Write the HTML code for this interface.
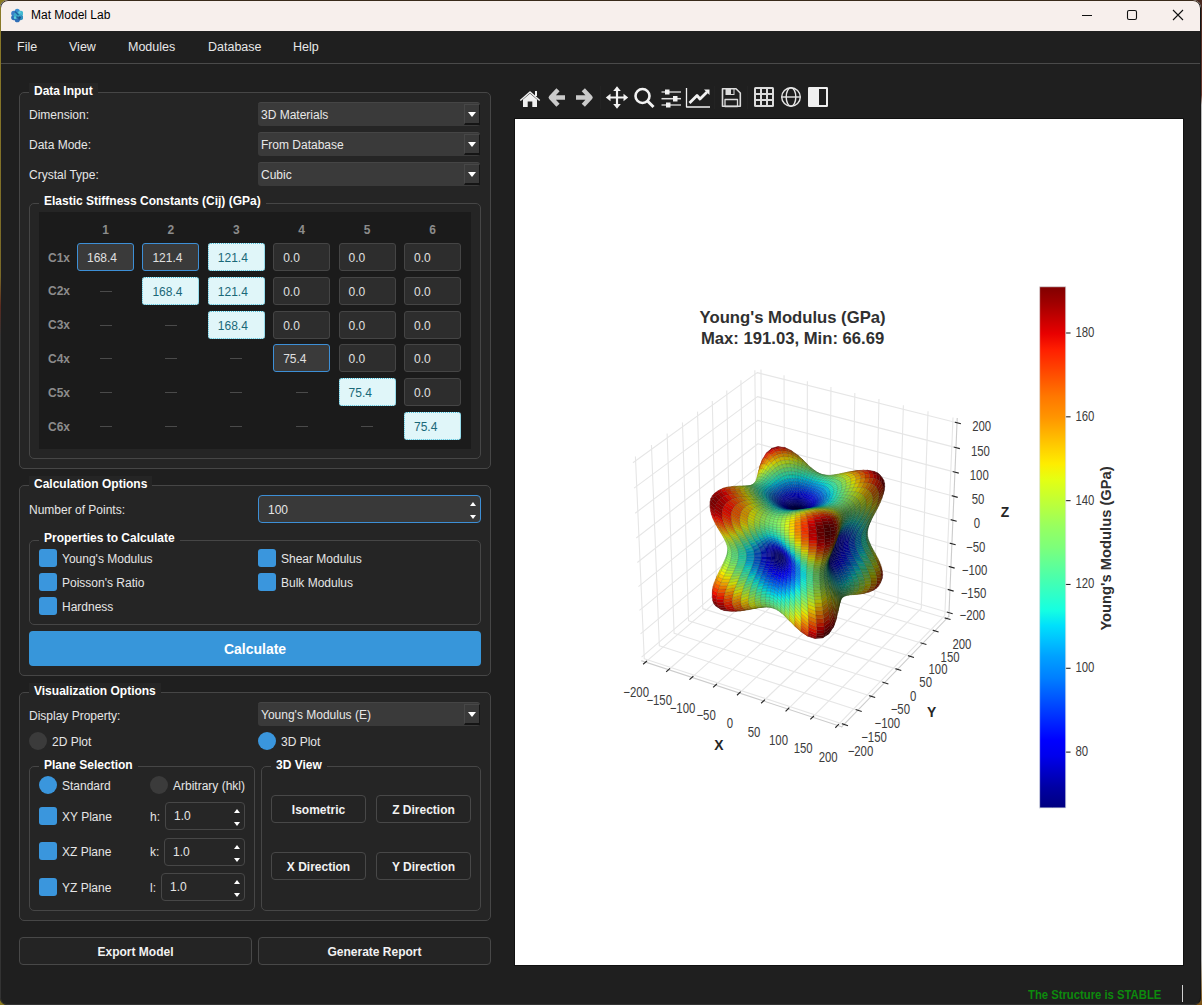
<!DOCTYPE html>
<html><head><meta charset="utf-8"><style>
*{box-sizing:border-box;margin:0;padding:0}
html,body{width:1202px;height:1005px;overflow:hidden}
body{position:relative;background:linear-gradient(90deg,#8a7a20 0,#8a7a20 10px,transparent 10px),linear-gradient(#4a2a20 0,#6a3a30 95px,#b8b8b8 105px,#b0b0b0 960px,#7a5010 1005px);font-family:"Liberation Sans",sans-serif;font-size:12px;color:#e6e6e6}
.a{position:absolute}
#win{position:absolute;left:0;top:0;width:1201px;height:1005px;background:#1f1f1f;border-radius:8px 8px 7px 7px;overflow:hidden}
#frame{position:absolute;left:0;top:0;width:1201px;height:1005px;border:1px solid #333;border-right-color:#151515;border-top-color:#3a2a1a;border-radius:8px 8px 7px 7px}
#title{position:absolute;left:0;top:0;width:1202px;height:31px;background:#f7efec}
#menu{position:absolute;left:0;top:31px;width:1202px;height:33px;background:#1f1f1f;border-bottom:1px solid #4a4a4a}
.mi{position:absolute;top:40px;font-size:12.5px;color:#e8e8e8;line-height:14px}
.grp{position:absolute;border:1px solid #464646;border-radius:5px;background:#252525}
.gt{position:absolute;font-weight:bold;color:#fff;background:#252525;padding:0 5px;line-height:16px;height:16px;white-space:nowrap}
.lbl{position:absolute;line-height:14px;color:#e6e6e6;white-space:nowrap}
.combo{position:absolute;height:24px;width:222px;background:#3a3a3a;border-radius:3px;border-top:1px solid #454545}
.combo span{position:absolute;left:3px;top:5px;line-height:14px;color:#e8e8e8}
.combo i{position:absolute;left:206px;top:1px;width:16px;height:21px;background:#393939;border-left:1px solid #474747;border-top:1px solid #474747;border-right:1px solid #151515;border-bottom:2px solid #151515}
.combo i:after{content:"";position:absolute;left:2.5px;top:7px;border-left:4.5px solid transparent;border-right:4.5px solid transparent;border-top:5px solid #fff}
.cell{position:absolute;width:57px;height:28px;border-radius:3px;background:#2d2d2d;border:1px solid #454545;padding-left:9px;line-height:28px;color:#e0e0e0}
.cell.f{background:#3a3a3a;border-color:#3d8fd6}
.cell.l{background:#e0f6f9;border:1px dotted #4cc0dc;color:#1a6878}
.ch{position:absolute;font-weight:bold;color:#8c8c8c;line-height:14px}
.dash{position:absolute;width:12px;height:1px;background:#4a4a4a}
.cb{position:absolute;width:18px;height:18px;border-radius:3px;background:#3a96dd}
.rd{position:absolute;width:18px;height:18px;border-radius:50%;background:#3a96dd}
.rd.off{background:#3b3b3b}
.spin{position:absolute;background:#262626;border:1px solid #474747;border-radius:4px}
.spin.blue{background:#393939;border-color:#3d8fd6}
.spin.blue span{top:7px}
.spin span{position:absolute;left:8px;top:6px;line-height:14px;color:#e6e6e6}
.spin i{position:absolute;right:4px;width:0;height:0;border-left:3.5px solid transparent;border-right:3.5px solid transparent}
.spin i.u{top:5.5px;border-bottom:4.5px solid #fff}
.spin i.d{bottom:3.5px;border-top:4.5px solid #fff}
.btn{position:absolute;padding-top:1px;border:1px solid #484848;border-radius:4px;background:#242424;font-weight:bold;color:#f2f2f2;text-align:center}
.calc{background:#3796da;border-radius:4px;color:#fff;font-weight:bold;font-size:14px;text-align:center;line-height:37px}

</style></head><body><div id="win">
<div id="title"><div class="a" style="left:10.75px;top:7.5px;width:12.5px;height:15px"><svg width="12.5" height="15" viewBox="0 0 12.5 15" style="position:absolute;left:0;top:0"><circle cx="6.25" cy="3.30" r="2.6" fill="#3a8fd0"/><circle cx="9.71" cy="5.40" r="2.6" fill="#45b8d0"/><circle cx="9.71" cy="9.60" r="2.6" fill="#2f8fc0"/><circle cx="6.25" cy="11.70" r="2.6" fill="#2f6fb8"/><circle cx="2.79" cy="9.60" r="2.6" fill="#2a70b8"/><circle cx="2.79" cy="5.40" r="2.6" fill="#3a7fc8"/><circle cx="6.25" cy="7.50" r="3.6" fill="#3aa8c8"/><path d="M4 3.5L7.5 7M5.5 8.5L9 12" stroke="#1f5fa0" stroke-width="1.5" stroke-linecap="round" fill="none"/><circle cx="8.5" cy="4.5" r="1.2" fill="#60d0e0"/><circle cx="8.6" cy="9.6" r="1.3" fill="#1d4f8a"/><circle cx="4" cy="9.8" r="1.2" fill="#5fd0d8"/></svg></div><div class="a" style="left:31px;top:8px;font-size:12px;color:#000;line-height:14px">Mat Model Lab</div><svg class="a" style="left:1070px;top:0" width="132" height="31" viewBox="1070 0 132 31">
<path d="M1082 15.5H1092" stroke="#111" stroke-width="1.1"/>
<rect x="1127.5" y="10.5" width="9" height="9" rx="1.6" fill="none" stroke="#111" stroke-width="1.1"/>
<path d="M1173 10L1183 20M1183 10L1173 20" stroke="#111" stroke-width="1.1"/>
</svg>
</div>
<div id="menu"></div>
<div class="mi" style="left:17px">File</div>
<div class="mi" style="left:69px">View</div>
<div class="mi" style="left:128px">Modules</div>
<div class="mi" style="left:208px">Database</div>
<div class="mi" style="left:293px">Help</div>
<div class="grp" style="left:19px;top:92px;width:472px;height:377px"></div>
<div class="gt top" style="left:29px;top:83px">Data Input</div>
<div class="lbl" style="left:29px;top:108px">Dimension:</div>
<div class="combo" style="left:258px;top:102px"><span>3D Materials</span><i></i></div>
<div class="lbl" style="left:29px;top:138px">Data Mode:</div>
<div class="combo" style="left:258px;top:132px"><span>From Database</span><i></i></div>
<div class="lbl" style="left:29px;top:168px">Crystal Type:</div>
<div class="combo" style="left:258px;top:162px"><span>Cubic</span><i></i></div>
<div class="grp" style="left:29px;top:203px;width:452px;height:256px"></div>
<div class="gt" style="left:39px;top:193px">Elastic Stiffness Constants (Cij) (GPa)</div>
<div class="a" style="left:39px;top:212px;width:432px;height:237px;background:#1b1b1b"></div>
<div class="ch" style="left:77.0px;top:223px;width:57px;text-align:center">1</div>
<div class="ch" style="left:142.4px;top:223px;width:57px;text-align:center">2</div>
<div class="ch" style="left:207.8px;top:223px;width:57px;text-align:center">3</div>
<div class="ch" style="left:273.2px;top:223px;width:57px;text-align:center">4</div>
<div class="ch" style="left:338.6px;top:223px;width:57px;text-align:center">5</div>
<div class="ch" style="left:404.0px;top:223px;width:57px;text-align:center">6</div>
<div class="ch" style="left:48px;top:250.5px">C1x</div>
<div class="cell f" style="left:77.0px;top:243.0px">168.4</div>
<div class="cell f" style="left:142.4px;top:243.0px">121.4</div>
<div class="cell l" style="left:207.8px;top:243.0px">121.4</div>
<div class="cell" style="left:273.2px;top:243.0px">0.0</div>
<div class="cell" style="left:338.6px;top:243.0px">0.0</div>
<div class="cell" style="left:404.0px;top:243.0px">0.0</div>
<div class="ch" style="left:48px;top:284.3px">C2x</div>
<div class="dash" style="left:99.5px;top:290.8px"></div>
<div class="cell l" style="left:142.4px;top:276.8px">168.4</div>
<div class="cell l" style="left:207.8px;top:276.8px">121.4</div>
<div class="cell" style="left:273.2px;top:276.8px">0.0</div>
<div class="cell" style="left:338.6px;top:276.8px">0.0</div>
<div class="cell" style="left:404.0px;top:276.8px">0.0</div>
<div class="ch" style="left:48px;top:318.1px">C3x</div>
<div class="dash" style="left:99.5px;top:324.6px"></div>
<div class="dash" style="left:164.9px;top:324.6px"></div>
<div class="cell l" style="left:207.8px;top:310.6px">168.4</div>
<div class="cell" style="left:273.2px;top:310.6px">0.0</div>
<div class="cell" style="left:338.6px;top:310.6px">0.0</div>
<div class="cell" style="left:404.0px;top:310.6px">0.0</div>
<div class="ch" style="left:48px;top:351.9px">C4x</div>
<div class="dash" style="left:99.5px;top:358.4px"></div>
<div class="dash" style="left:164.9px;top:358.4px"></div>
<div class="dash" style="left:230.3px;top:358.4px"></div>
<div class="cell f" style="left:273.2px;top:344.4px">75.4</div>
<div class="cell" style="left:338.6px;top:344.4px">0.0</div>
<div class="cell" style="left:404.0px;top:344.4px">0.0</div>
<div class="ch" style="left:48px;top:385.7px">C5x</div>
<div class="dash" style="left:99.5px;top:392.2px"></div>
<div class="dash" style="left:164.9px;top:392.2px"></div>
<div class="dash" style="left:230.3px;top:392.2px"></div>
<div class="dash" style="left:295.7px;top:392.2px"></div>
<div class="cell l" style="left:338.6px;top:378.2px">75.4</div>
<div class="cell" style="left:404.0px;top:378.2px">0.0</div>
<div class="ch" style="left:48px;top:419.5px">C6x</div>
<div class="dash" style="left:99.5px;top:426.0px"></div>
<div class="dash" style="left:164.9px;top:426.0px"></div>
<div class="dash" style="left:230.3px;top:426.0px"></div>
<div class="dash" style="left:295.7px;top:426.0px"></div>
<div class="dash" style="left:361.1px;top:426.0px"></div>
<div class="cell l" style="left:404.0px;top:412.0px">75.4</div>
<div class="grp" style="left:19px;top:485px;width:472px;height:191px"></div>
<div class="gt top" style="left:29px;top:476px">Calculation Options</div>
<div class="lbl" style="left:29px;top:503px">Number of Points:</div>
<div class="spin blue" style="left:258px;top:495px;width:223px;height:28px"><span style="left:9px">100</span><i class="u"></i><i class="d"></i></div>
<div class="grp" style="left:29px;top:540px;width:452px;height:85px"></div>
<div class="gt" style="left:39px;top:530px">Properties to Calculate</div>
<div class="cb" style="left:39px;top:549px"></div>
<div class="lbl" style="left:62px;top:552px">Young's Modulus</div>
<div class="cb" style="left:39px;top:573px"></div>
<div class="lbl" style="left:62px;top:576px">Poisson's Ratio</div>
<div class="cb" style="left:39px;top:597px"></div>
<div class="lbl" style="left:62px;top:600px">Hardness</div>
<div class="cb" style="left:258px;top:549px"></div>
<div class="lbl" style="left:281px;top:552px">Shear Modulus</div>
<div class="cb" style="left:258px;top:573px"></div>
<div class="lbl" style="left:281px;top:576px">Bulk Modulus</div>
<div class="a calc" style="left:29px;top:631px;width:452px;height:35px">Calculate</div>
<div class="grp" style="left:19px;top:692px;width:472px;height:229px"></div>
<div class="gt top" style="left:29px;top:683px">Visualization Options</div>
<div class="lbl" style="left:29px;top:709px">Display Property:</div>
<div class="combo" style="left:258px;top:702px"><span>Young's Modulus (E)</span><i></i></div>
<div class="rd off" style="left:29px;top:732px"></div>
<div class="lbl" style="left:52px;top:735px">2D Plot</div>
<div class="rd" style="left:258px;top:732px"></div>
<div class="lbl" style="left:281px;top:735px">3D Plot</div>
<div class="grp" style="left:29px;top:766px;width:226px;height:145px"></div>
<div class="gt" style="left:39px;top:757px">Plane Selection</div>
<div class="rd" style="left:39px;top:776px"></div>
<div class="lbl" style="left:62px;top:779px">Standard</div>
<div class="rd off" style="left:150px;top:776px"></div>
<div class="lbl" style="left:173px;top:779px">Arbitrary (hkl)</div>
<div class="cb" style="left:39px;top:807px"></div>
<div class="lbl" style="left:62px;top:810px">XY Plane</div>
<div class="lbl" style="left:150px;top:810px">h:</div>
<div class="cb" style="left:39px;top:842px"></div>
<div class="lbl" style="left:62px;top:845px">XZ Plane</div>
<div class="lbl" style="left:150px;top:845px">k:</div>
<div class="cb" style="left:39px;top:878px"></div>
<div class="lbl" style="left:62px;top:881px">YZ Plane</div>
<div class="lbl" style="left:150px;top:881px">l:</div>
<div class="spin" style="left:165px;top:802px;width:80px;height:28px"><span>1.0</span><i class="u"></i><i class="d"></i></div>
<div class="spin" style="left:164px;top:838px;width:81px;height:28px"><span>1.0</span><i class="u"></i><i class="d"></i></div>
<div class="spin" style="left:161px;top:873px;width:84px;height:28px"><span>1.0</span><i class="u"></i><i class="d"></i></div>
<div class="grp" style="left:261px;top:766px;width:220px;height:145px"></div>
<div class="gt" style="left:271px;top:757px">3D View</div>
<div class="btn" style="left:271px;top:795px;width:95px;height:28px;line-height:26px">Isometric</div>
<div class="btn" style="left:376px;top:795px;width:95px;height:28px;line-height:26px">Z Direction</div>
<div class="btn" style="left:271px;top:852px;width:95px;height:28px;line-height:26px">X Direction</div>
<div class="btn" style="left:376px;top:852px;width:95px;height:28px;line-height:26px">Y Direction</div>
<div class="btn" style="left:19px;top:937px;width:233px;height:28px;line-height:26px">Export Model</div>
<div class="btn" style="left:258px;top:937px;width:233px;height:28px;line-height:26px">Generate Report</div>
<svg class="a" style="left:500px;top:78px" width="340" height="40" viewBox="500 78 340 40">
<g fill="#f0f0f0" stroke="none">
<path d="M523 99.5L530 93.5L537 99.5V107H532.3V101.5H527.7V107H523Z"/>
<rect x="535" y="91" width="2" height="5"/>
</g>
<path d="M520.3 100.5L530 92L539.7 100.5" fill="none" stroke="#f0f0f0" stroke-width="1.6"/>
<g fill="none" stroke="#cacaca" stroke-width="4.4" stroke-linecap="round" stroke-linejoin="round">
<path d="M551 97.5H565M558 89.8L550.8 97.5L558 105.2"/>
<path d="M576 97.5H590.5M583.3 89.8L590.5 97.5L583.3 105.2"/>
</g>
<g stroke="#f2f2f2" stroke-width="2.2" fill="none"><path d="M617 90V105M609.5 97.5H624.5"/></g>
<g fill="#f2f2f2"><path d="M617 86.3L613.2 91H620.8Z"/><path d="M617 108.7L613.2 104H620.8Z"/><path d="M605.8 97.5L610.5 93.7V101.3Z"/><path d="M628.2 97.5L623.5 93.7V101.3Z"/></g>
<circle cx="642.5" cy="96" r="7" fill="none" stroke="#f2f2f2" stroke-width="2.6"/>
<path d="M647.5 101L653.5 107" stroke="#f2f2f2" stroke-width="3" stroke-linecap="round"/>
<g stroke-width="2"><path d="M661.5 92H681" stroke="#9a9a9a"/><path d="M661.5 98.7H681" stroke="#dcdcdc" stroke-width="1.5"/><path d="M661.5 105H681" stroke="#9a9a9a"/></g>
<g fill="#f2f2f2"><rect x="665" y="89.5" width="4.5" height="5"/><rect x="673" y="96" width="4.5" height="5.5"/><rect x="666" y="102.5" width="4.5" height="5"/></g>
<path d="M686.5 88V107H710" fill="none" stroke="#f2f2f2" stroke-width="1.3"/>
<path d="M689.5 103L697 95.5L700 99L707 92" fill="none" stroke="#f2f2f2" stroke-width="2.8"/>
<path d="M704 89.5H709.5V95Z" fill="#f2f2f2"/>
<path d="M722.5 88.8H736L740.3 93V106.3H722.5Z" fill="none" stroke="#dcdcdc" stroke-width="1.6"/>
<rect x="725.5" y="88.5" width="9" height="6.5" fill="#dcdcdc"/><rect x="731" y="89.5" width="2.5" height="4.5" fill="#1f1f1f"/>
<rect x="725" y="99.5" width="12.5" height="7" fill="none" stroke="#dcdcdc" stroke-width="1.3"/>
<rect x="754" y="87" width="20" height="20" rx="1.5" fill="#dcdcdc"/>
<g fill="#1f1f1f"><rect x="756" y="89" width="4" height="4"/><rect x="762" y="89" width="4" height="4"/><rect x="768" y="89" width="4" height="4"/><rect x="756" y="95" width="4" height="4"/><rect x="762" y="95" width="4" height="4"/><rect x="768" y="95" width="4" height="4"/><rect x="756" y="101" width="4" height="4"/><rect x="762" y="101" width="4" height="4"/><rect x="768" y="101" width="4" height="4"/></g>
<g fill="none" stroke="#e6e6e6" stroke-width="1.4"><circle cx="791" cy="97" r="9.3"/><ellipse cx="791" cy="97" rx="4.8" ry="9.3"/><path d="M781.7 97H800.3"/></g>
<rect x="808" y="87" width="20" height="20" rx="1.2" fill="#efefef"/>
<rect x="819" y="89" width="7" height="16" fill="#1f1f1f"/>
<g stroke="#232323" stroke-width="1"><path d="M600.5 86V109M714.5 86V109M747.5 86V109"/></g>
</svg>

<div class="a" style="left:514px;top:118px;width:670px;height:848px;background:#111"></div>
<div class="a" style="left:515px;top:119px;width:668px;height:846px;background:#fff;overflow:hidden"><svg  width="668" height="846" viewBox="0 0 480.96 609.12"  version="1.1"> <defs><linearGradient id="jetg" x1="0" y1="0" x2="0" y2="1"><stop offset="0.00" stop-color="#800000"/><stop offset="0.03" stop-color="#9f0000"/><stop offset="0.06" stop-color="#c40000"/><stop offset="0.09" stop-color="#e80000"/><stop offset="0.12" stop-color="#ff1e00"/><stop offset="0.15" stop-color="#ff3b00"/><stop offset="0.18" stop-color="#ff5900"/><stop offset="0.21" stop-color="#ff7700"/><stop offset="0.25" stop-color="#ff9400"/><stop offset="0.28" stop-color="#ffb200"/><stop offset="0.31" stop-color="#ffd000"/><stop offset="0.34" stop-color="#feed00"/><stop offset="0.37" stop-color="#e4ff13"/><stop offset="0.40" stop-color="#caff2c"/><stop offset="0.43" stop-color="#b1ff46"/><stop offset="0.46" stop-color="#97ff60"/><stop offset="0.50" stop-color="#7dff7a"/><stop offset="0.53" stop-color="#63ff94"/><stop offset="0.56" stop-color="#49ffad"/><stop offset="0.59" stop-color="#30ffc7"/><stop offset="0.62" stop-color="#16ffe1"/><stop offset="0.65" stop-color="#00e0fb"/><stop offset="0.68" stop-color="#00c0ff"/><stop offset="0.71" stop-color="#00a0ff"/><stop offset="0.75" stop-color="#0080ff"/><stop offset="0.78" stop-color="#0060ff"/><stop offset="0.81" stop-color="#0040ff"/><stop offset="0.84" stop-color="#0020ff"/><stop offset="0.87" stop-color="#0000ff"/><stop offset="0.90" stop-color="#0000ed"/><stop offset="0.93" stop-color="#0000c8"/><stop offset="0.96" stop-color="#0000a4"/><stop offset="1.00" stop-color="#000080"/></linearGradient> <style type="text/css">*{stroke-linejoin: round; stroke-linecap: butt}</style> </defs> <g id="figure_1"> <g id="patch_1"> <path d="M 0 609.12  L 480.96 609.12  L 480.96 0  L 0 0  z " style="fill: #ffffff"/> </g> <g id="patch_2"> <path d="M 60.12 447.38  L 339.67 447.38  L 339.67 167.82  L 60.12 167.82  z " style="fill: #ffffff"/> </g> <g id="pane3d_1"> <g id="patch_3"> <path d="M 91.24 390.16  L 175.82 317.75  L 174.35 179.71  L 84.77 244.37  " style="fill: none; opacity: 0"/> </g> </g> <g id="pane3d_2"> <g id="patch_4"> <path d="M 175.82 317.75  L 312.35 358.16  L 318.39 215.73  L 174.35 179.71  " style="fill: none; opacity: 0"/> </g> </g> <g id="pane3d_3"> <g id="patch_5"> <path d="M 91.24 390.16  L 235.29 437.62  L 312.35 358.16  L 175.82 317.75  " style="fill: none; opacity: 0"/> </g> </g> <g id="grid3d_1"> <g id="Line3DCollection_1"> <path d="M 93.99 391.07  L 178.44 318.52  L 177.10 180.40  " style="fill: none; stroke: #e6e6e6; stroke-width: 0.8"/> <path d="M 110.59 396.53  L 194.21 323.19  L 193.71 184.55  " style="fill: none; stroke: #e6e6e6; stroke-width: 0.8"/> <path d="M 127.37 402.07  L 210.16 327.91  L 210.51 188.76  " style="fill: none; stroke: #e6e6e6; stroke-width: 0.8"/> <path d="M 144.35 407.66  L 226.28 332.68  L 227.49 193.00  " style="fill: none; stroke: #e6e6e6; stroke-width: 0.8"/> <path d="M 161.53 413.32  L 242.56 337.50  L 244.67 197.30  " style="fill: none; stroke: #e6e6e6; stroke-width: 0.8"/> <path d="M 178.90 419.04  L 259.03 342.38  L 262.05 201.64  " style="fill: none; stroke: #e6e6e6; stroke-width: 0.8"/> <path d="M 196.48 424.84  L 275.67 347.30  L 279.62 206.04  " style="fill: none; stroke: #e6e6e6; stroke-width: 0.8"/> <path d="M 214.27 430.70  L 292.49 352.28  L 297.39 210.48  " style="fill: none; stroke: #e6e6e6; stroke-width: 0.8"/> <path d="M 232.27 436.63  L 309.49 357.32  L 315.37 214.97  " style="fill: none; stroke: #e6e6e6; stroke-width: 0.8"/> </g> </g> <g id="grid3d_2"> <g id="Line3DCollection_2"> <path d="M 86.71 242.97  L 93.07 388.60  L 236.96 435.90  " style="fill: none; stroke: #e6e6e6; stroke-width: 0.8"/> <path d="M 98.23 234.65  L 103.91 379.32  L 246.86 425.69  " style="fill: none; stroke: #e6e6e6; stroke-width: 0.8"/> <path d="M 109.52 226.51  L 114.54 370.22  L 256.57 415.68  " style="fill: none; stroke: #e6e6e6; stroke-width: 0.8"/> <path d="M 120.57 218.53  L 124.96 361.29  L 266.08 405.87  " style="fill: none; stroke: #e6e6e6; stroke-width: 0.8"/> <path d="M 131.41 210.70  L 135.19 352.53  L 275.40 396.26  " style="fill: none; stroke: #e6e6e6; stroke-width: 0.8"/> <path d="M 142.04 203.03  L 145.23 343.94  L 284.54 386.83  " style="fill: none; stroke: #e6e6e6; stroke-width: 0.8"/> <path d="M 152.46 195.51  L 155.09 335.50  L 293.51 377.59  " style="fill: none; stroke: #e6e6e6; stroke-width: 0.8"/> <path d="M 162.67 188.14  L 164.76 327.22  L 302.30 368.52  " style="fill: none; stroke: #e6e6e6; stroke-width: 0.8"/> <path d="M 172.69 180.91  L 174.26 319.09  L 310.92 359.63  " style="fill: none; stroke: #e6e6e6; stroke-width: 0.8"/> </g> </g> <g id="grid3d_3"> <g id="Line3DCollection_3"> <path d="M 312.46 355.46  L 175.79 315.12  L 91.12 387.40  " style="fill: none; stroke: #e6e6e6; stroke-width: 0.8"/> <path d="M 313.15 339.13  L 175.62 299.27  L 90.38 370.71  " style="fill: none; stroke: #e6e6e6; stroke-width: 0.8"/> <path d="M 313.85 322.59  L 175.45 283.21  L 89.63 353.81  " style="fill: none; stroke: #e6e6e6; stroke-width: 0.8"/> <path d="M 314.56 305.84  L 175.28 266.96  L 88.87 336.67  " style="fill: none; stroke: #e6e6e6; stroke-width: 0.8"/> <path d="M 315.28 288.87  L 175.10 250.51  L 88.10 319.31  " style="fill: none; stroke: #e6e6e6; stroke-width: 0.8"/> <path d="M 316.01 271.68  L 174.92 233.86  L 87.32 301.71  " style="fill: none; stroke: #e6e6e6; stroke-width: 0.8"/> <path d="M 316.75 254.26  L 174.74 216.99  L 86.52 283.87  " style="fill: none; stroke: #e6e6e6; stroke-width: 0.8"/> <path d="M 317.50 236.61  L 174.56 199.91  L 85.72 265.78  " style="fill: none; stroke: #e6e6e6; stroke-width: 0.8"/> <path d="M 318.26 218.73  L 174.38 182.62  L 84.91 247.45  " style="fill: none; stroke: #e6e6e6; stroke-width: 0.8"/> </g> </g> <g id="axis3d_1"> <g id="line2d_1"> <path d="M 91.24 390.16  L 235.29 437.62  " style="fill: none; stroke: #cccccc; stroke-width: 0.8; stroke-linecap: square"/> </g> <g id="xtick_1"> <g id="line2d_2"> <path d="M 94.72 390.44  L 92.53 392.32  " style="fill: none; stroke: #262626; stroke-width: 0.8; stroke-linecap: square"/> </g> <g id="text_1"> <text style="font-size: 10px; font-family: 'Liberation Sans'; text-anchor: middle; fill: #3c3c3c" x="87.24" y="415.44" transform="translate(87.24 0.7) scale(0.82 1) translate(-87.24 0)">−200</text> </g> </g> <g id="xtick_2"> <g id="line2d_3"> <path d="M 111.31 395.90  L 109.14 397.81  " style="fill: none; stroke: #262626; stroke-width: 0.8; stroke-linecap: square"/> </g> <g id="text_2"> <text style="font-size: 10px; font-family: 'Liberation Sans'; text-anchor: middle; fill: #3c3c3c" x="103.83" y="421.02" transform="translate(103.83 0.7) scale(0.82 1) translate(-103.83 0)">−150</text> </g> </g> <g id="xtick_3"> <g id="line2d_4"> <path d="M 128.09 401.42  L 125.94 403.35  " style="fill: none; stroke: #262626; stroke-width: 0.8; stroke-linecap: square"/> </g> <g id="text_3"> <text style="font-size: 10px; font-family: 'Liberation Sans'; text-anchor: middle; fill: #3c3c3c" x="120.61" y="426.66" transform="translate(120.61 0.7) scale(0.82 1) translate(-120.61 0)">−100</text> </g> </g> <g id="xtick_4"> <g id="line2d_5"> <path d="M 145.06 407.01  L 142.93 408.96  " style="fill: none; stroke: #262626; stroke-width: 0.8; stroke-linecap: square"/> </g> <g id="text_4"> <text style="font-size: 10px; font-family: 'Liberation Sans'; text-anchor: middle; fill: #3c3c3c" x="137.59" y="432.37" transform="translate(137.59 0.7) scale(0.82 1) translate(-137.59 0)">−50</text> </g> </g> <g id="xtick_5"> <g id="line2d_6"> <path d="M 162.23 412.66  L 160.12 414.64  " style="fill: none; stroke: #262626; stroke-width: 0.8; stroke-linecap: square"/> </g> <g id="text_5"> <text style="font-size: 10px; font-family: 'Liberation Sans'; text-anchor: middle; fill: #3c3c3c" x="154.76" y="438.14" transform="translate(154.76 0.7) scale(0.82 1) translate(-154.76 0)">0</text> </g> </g> <g id="xtick_6"> <g id="line2d_7"> <path d="M 179.60 418.38  L 177.51 420.38  " style="fill: none; stroke: #262626; stroke-width: 0.8; stroke-linecap: square"/> </g> <g id="text_6"> <text style="font-size: 10px; font-family: 'Liberation Sans'; text-anchor: middle; fill: #3c3c3c" x="172.14" y="443.98" transform="translate(172.14 0.7) scale(0.82 1) translate(-172.14 0)">50</text> </g> </g> <g id="xtick_7"> <g id="line2d_8"> <path d="M 197.17 424.16  L 195.11 426.18  " style="fill: none; stroke: #262626; stroke-width: 0.8; stroke-linecap: square"/> </g> <g id="text_7"> <text style="font-size: 10px; font-family: 'Liberation Sans'; text-anchor: middle; fill: #3c3c3c" x="189.72" y="449.89" transform="translate(189.72 0.7) scale(0.82 1) translate(-189.72 0)">100</text> </g> </g> <g id="xtick_8"> <g id="line2d_9"> <path d="M 214.95 430.02  L 212.91 432.06  " style="fill: none; stroke: #262626; stroke-width: 0.8; stroke-linecap: square"/> </g> <g id="text_8"> <text style="font-size: 10px; font-family: 'Liberation Sans'; text-anchor: middle; fill: #3c3c3c" x="207.50" y="455.87" transform="translate(207.50 0.7) scale(0.82 1) translate(-207.50 0)">150</text> </g> </g> <g id="xtick_9"> <g id="line2d_10"> <path d="M 232.94 435.94  L 230.92 438.01  " style="fill: none; stroke: #262626; stroke-width: 0.8; stroke-linecap: square"/> </g> <g id="text_9"> <text style="font-size: 10px; font-family: 'Liberation Sans'; text-anchor: middle; fill: #3c3c3c" x="225.50" y="461.92" transform="translate(225.50 0.7) scale(0.82 1) translate(-225.50 0)">200</text> </g> </g> <g id="text_10"> <text style="font-weight: 700; font-size: 10px; font-family: 'Liberation Sans'; text-anchor: middle; fill: #262626" x="146.78" y="454.21" transform="rotate(-0 146.78 454.21)">X</text> </g> </g> <g id="axis3d_2"> <g id="line2d_11"> <path d="M 312.35 358.16  L 235.29 437.62  " style="fill: none; stroke: #cccccc; stroke-width: 0.8; stroke-linecap: square"/> </g> <g id="xtick_10"> <g id="line2d_12"> <path d="M 235.75 435.50  L 239.38 436.70  " style="fill: none; stroke: #262626; stroke-width: 0.8; stroke-linecap: square"/> </g> <g id="text_11"> <text style="font-size: 10px; font-family: 'Liberation Sans'; text-anchor: middle; fill: #3c3c3c" x="248.73" y="458.26" transform="translate(248.73 0.7) scale(0.82 1) translate(-248.73 0)">−200</text> </g> </g> <g id="xtick_11"> <g id="line2d_13"> <path d="M 245.66 425.30  L 249.26 426.47  " style="fill: none; stroke: #262626; stroke-width: 0.8; stroke-linecap: square"/> </g> <g id="text_12"> <text style="font-size: 10px; font-family: 'Liberation Sans'; text-anchor: middle; fill: #3c3c3c" x="258.51" y="447.90" transform="translate(258.51 0.7) scale(0.82 1) translate(-258.51 0)">−150</text> </g> </g> <g id="xtick_12"> <g id="line2d_14"> <path d="M 255.38 415.30  L 258.95 416.44  " style="fill: none; stroke: #262626; stroke-width: 0.8; stroke-linecap: square"/> </g> <g id="text_13"> <text style="font-size: 10px; font-family: 'Liberation Sans'; text-anchor: middle; fill: #3c3c3c" x="268.09" y="437.75" transform="translate(268.09 0.7) scale(0.82 1) translate(-268.09 0)">−100</text> </g> </g> <g id="xtick_13"> <g id="line2d_15"> <path d="M 264.89 405.50  L 268.45 406.62  " style="fill: none; stroke: #262626; stroke-width: 0.8; stroke-linecap: square"/> </g> <g id="text_14"> <text style="font-size: 10px; font-family: 'Liberation Sans'; text-anchor: middle; fill: #3c3c3c" x="277.48" y="427.80" transform="translate(277.48 0.7) scale(0.82 1) translate(-277.48 0)">−50</text> </g> </g> <g id="xtick_14"> <g id="line2d_16"> <path d="M 274.23 395.89  L 277.75 396.99  " style="fill: none; stroke: #262626; stroke-width: 0.8; stroke-linecap: square"/> </g> <g id="text_15"> <text style="font-size: 10px; font-family: 'Liberation Sans'; text-anchor: middle; fill: #3c3c3c" x="286.68" y="418.04" transform="translate(286.68 0.7) scale(0.82 1) translate(-286.68 0)">0</text> </g> </g> <g id="xtick_15"> <g id="line2d_17"> <path d="M 283.38 386.47  L 286.88 387.55  " style="fill: none; stroke: #262626; stroke-width: 0.8; stroke-linecap: square"/> </g> <g id="text_16"> <text style="font-size: 10px; font-family: 'Liberation Sans'; text-anchor: middle; fill: #3c3c3c" x="295.71" y="408.48" transform="translate(295.71 0.7) scale(0.82 1) translate(-295.71 0)">50</text> </g> </g> <g id="xtick_16"> <g id="line2d_18"> <path d="M 292.35 377.24  L 295.83 378.29  " style="fill: none; stroke: #262626; stroke-width: 0.8; stroke-linecap: square"/> </g> <g id="text_17"> <text style="font-size: 10px; font-family: 'Liberation Sans'; text-anchor: middle; fill: #3c3c3c" x="304.56" y="399.10" transform="translate(304.56 0.7) scale(0.82 1) translate(-304.56 0)">100</text> </g> </g> <g id="xtick_17"> <g id="line2d_19"> <path d="M 301.15 368.18  L 304.60 369.21  " style="fill: none; stroke: #262626; stroke-width: 0.8; stroke-linecap: square"/> </g> <g id="text_18"> <text style="font-size: 10px; font-family: 'Liberation Sans'; text-anchor: middle; fill: #3c3c3c" x="313.24" y="389.91" transform="translate(313.24 0.7) scale(0.82 1) translate(-313.24 0)">150</text> </g> </g> <g id="xtick_18"> <g id="line2d_20"> <path d="M 309.78 359.29  L 313.21 360.30  " style="fill: none; stroke: #262626; stroke-width: 0.8; stroke-linecap: square"/> </g> <g id="text_19"> <text style="font-size: 10px; font-family: 'Liberation Sans'; text-anchor: middle; fill: #3c3c3c" x="321.76" y="380.88" transform="translate(321.76 0.7) scale(0.82 1) translate(-321.76 0)">200</text> </g> </g> <g id="text_20"> <text style="font-weight: 700; font-size: 10px; font-family: 'Liberation Sans'; text-anchor: middle; fill: #262626" x="299.91" y="430.43" transform="rotate(-0 299.91 430.43)">Y</text> </g> </g> <g id="axis3d_3"> <g id="line2d_21"> <path d="M 312.35 358.16  L 318.39 215.73  " style="fill: none; stroke: #cccccc; stroke-width: 0.8; stroke-linecap: square"/> </g> <g id="xtick_19"> <g id="line2d_22"> <path d="M 311.32 355.12  L 314.75 356.13  " style="fill: none; stroke: #262626; stroke-width: 0.8; stroke-linecap: square"/> </g> <g id="text_21"> <text style="font-size: 10px; font-family: 'Liberation Sans'; text-anchor: middle; fill: #3c3c3c" x="329.31" y="360.27" transform="translate(329.31 0.7) scale(0.82 1) translate(-329.31 0)">−200</text> </g> </g> <g id="xtick_20"> <g id="line2d_23"> <path d="M 312.00 338.80  L 315.46 339.80  " style="fill: none; stroke: #262626; stroke-width: 0.8; stroke-linecap: square"/> </g> <g id="text_22"> <text style="font-size: 10px; font-family: 'Liberation Sans'; text-anchor: middle; fill: #3c3c3c" x="330.11" y="343.97" transform="translate(330.11 0.7) scale(0.82 1) translate(-330.11 0)">−150</text> </g> </g> <g id="xtick_21"> <g id="line2d_24"> <path d="M 312.70 322.26  L 316.17 323.25  " style="fill: none; stroke: #262626; stroke-width: 0.8; stroke-linecap: square"/> </g> <g id="text_23"> <text style="font-size: 10px; font-family: 'Liberation Sans'; text-anchor: middle; fill: #3c3c3c" x="330.92" y="327.46" transform="translate(330.92 0.7) scale(0.82 1) translate(-330.92 0)">−100</text> </g> </g> <g id="xtick_22"> <g id="line2d_25"> <path d="M 313.40 305.51  L 316.90 306.49  " style="fill: none; stroke: #262626; stroke-width: 0.8; stroke-linecap: square"/> </g> <g id="text_24"> <text style="font-size: 10px; font-family: 'Liberation Sans'; text-anchor: middle; fill: #3c3c3c" x="331.74" y="310.74" transform="translate(331.74 0.7) scale(0.82 1) translate(-331.74 0)">−50</text> </g> </g> <g id="xtick_23"> <g id="line2d_26"> <path d="M 314.11 288.55  L 317.63 289.51  " style="fill: none; stroke: #262626; stroke-width: 0.8; stroke-linecap: square"/> </g> <g id="text_25"> <text style="font-size: 10px; font-family: 'Liberation Sans'; text-anchor: middle; fill: #3c3c3c" x="332.57" y="293.80" transform="translate(332.57 0.7) scale(0.82 1) translate(-332.57 0)">0</text> </g> </g> <g id="xtick_24"> <g id="line2d_27"> <path d="M 314.83 271.36  L 318.38 272.31  " style="fill: none; stroke: #262626; stroke-width: 0.8; stroke-linecap: square"/> </g> <g id="text_26"> <text style="font-size: 10px; font-family: 'Liberation Sans'; text-anchor: middle; fill: #3c3c3c" x="333.41" y="276.64" transform="translate(333.41 0.7) scale(0.82 1) translate(-333.41 0)">50</text> </g> </g> <g id="xtick_25"> <g id="line2d_28"> <path d="M 315.56 253.95  L 319.13 254.89  " style="fill: none; stroke: #262626; stroke-width: 0.8; stroke-linecap: square"/> </g> <g id="text_27"> <text style="font-size: 10px; font-family: 'Liberation Sans'; text-anchor: middle; fill: #3c3c3c" x="334.26" y="259.26" transform="translate(334.26 0.7) scale(0.82 1) translate(-334.26 0)">100</text> </g> </g> <g id="xtick_26"> <g id="line2d_29"> <path d="M 316.30 236.31  L 319.90 237.23  " style="fill: none; stroke: #262626; stroke-width: 0.8; stroke-linecap: square"/> </g> <g id="text_28"> <text style="font-size: 10px; font-family: 'Liberation Sans'; text-anchor: middle; fill: #3c3c3c" x="335.12" y="241.64" transform="translate(335.12 0.7) scale(0.82 1) translate(-335.12 0)">150</text> </g> </g> <g id="xtick_27"> <g id="line2d_30"> <path d="M 317.05 218.43  L 320.67 219.34  " style="fill: none; stroke: #262626; stroke-width: 0.8; stroke-linecap: square"/> </g> <g id="text_29"> <text style="font-size: 10px; font-family: 'Liberation Sans'; text-anchor: middle; fill: #3c3c3c" x="335.99" y="223.80" transform="translate(335.99 0.7) scale(0.82 1) translate(-335.99 0)">200</text> </g> </g> <g id="text_30"> <text style="font-weight: 700; font-size: 10px; font-family: 'Liberation Sans'; text-anchor: middle; fill: #262626" x="352.73" y="286.44" transform="rotate(-0 352.73 286.44)">Z</text> </g> </g> <g transform="scale(0.072)" stroke-width="3"><path fill="#470000" stroke="#2b0000" d="M3661 4611l-7 29 10-24 10-29z"/><path fill="#550300" stroke="#330200" d="M3663 4580l-2 31 13-24 3-31z"/><path fill="#751100" stroke="#460a00" d="M3567 4717l-28 14 21-11 33-13z"/><path fill="#5e0e00" stroke="#380800" d="M3659 4548l4 32 14-24-3-32z"/><path fill="#6d0d00" stroke="#420800" d="M3589 4698l-22 19 26-10 27-19z"/><path fill="#690f00" stroke="#3f0900" d="M3605 4675l-16 23 31-10 20-22z"/><path fill="#621d00" stroke="#3b1100" d="M3651 4516l8 32 15-24-6-33z"/><path fill="#691400" stroke="#3f0c00" d="M3615 4649l-10 26 35-9 14-26z"/><path fill="#7d0000" stroke="#4b0000" d="M2631 3276l-7 2-63 20 9-4z"/><path fill="#662c00" stroke="#3d1b00" d="M3640 4484l11 32 17-25-10-32z"/><path fill="#6a1d00" stroke="#401200" d="M3618 4620l-3 29 39-9 7-29z"/><path fill="#8f1500" stroke="#560d00" d="M2768 3319l-2 0-67-34 5 5z"/><path fill="#940000" stroke="#590000" d="M2704 3290l-5-5-68-9 9 6z"/><path fill="#9e0000" stroke="#5f0000" d="M2570 3294l-9 4-51 47 9-8z"/><path fill="#884b00" stroke="#522d00" d="M3477 4745l-33 6 24-6 37-4z"/><path fill="#6d2b00" stroke="#411a00" d="M3617 4590l1 30 43-9 2-31z"/><path fill="#693e00" stroke="#3f2500" d="M3627 4454l13 30 18-25-13-31z"/><path fill="#9a0000" stroke="#5d0000" d="M2640 3282l-9-6-61 18 11 5z"/><path fill="#803e00" stroke="#4d2500" d="M3504 4734l-27 11 28-4 34-10z"/><path fill="#7a3700" stroke="#492100" d="M3526 4718l-22 16 35-3 28-14z"/><path fill="#703b00" stroke="#432300" d="M3610 4559l7 31 46-10-4-32z"/><path fill="#773700" stroke="#472100" d="M3543 4698l-17 20 41-1 22-19z"/><path fill="#6b4f00" stroke="#403000" d="M3613 4424l14 30 18-26-14-30z"/><path fill="#9a2800" stroke="#5c1800" d="M2771 3328l-3-9-64-29 6 12z"/><path fill="#b31000" stroke="#6b0900" d="M2710 3302l-6-12-64-8 10 14z"/><path fill="#b90000" stroke="#6f0000" d="M2581 3299l-11-5-51 43 13 1z"/><path fill="#763c00" stroke="#472400" d="M3553 4674l-10 24 46 0 16-23z"/><path fill="#e40400" stroke="#890200" d="M2519 3337l-9 8-37 64 8-12z"/><path fill="#864000" stroke="#502700" d="M2829 3366l0-3-61-44 3 9z"/><path fill="#734b00" stroke="#452d00" d="M3601 4528l9 31 49-11-8-32z"/><path fill="#be0300" stroke="#720200" d="M2650 3296l-10-14-59 17 13 12z"/><path fill="#6d6000" stroke="#413a00" d="M3598 4396l15 28 18-26-14-28z"/><path fill="#774700" stroke="#472a00" d="M3558 4648l-5 26 52 1 10-26z"/><path fill="#785900" stroke="#483500" d="M2881 3411l2 3-54-51 0 3z"/><path fill="#f94800" stroke="#952b00" d="M2473 3409l-6 19-23 73 4-22z"/><path fill="#8e7a00" stroke="#554900" d="M3415 4753l-31 3 24-4 36-1z"/><path fill="#766000" stroke="#473900" d="M3589 4497l12 31 50-12-11-32z"/><path fill="#876c00" stroke="#514100" d="M3441 4744l-26 9 29-2 33-6z"/><path fill="#a44000" stroke="#622700" d="M2775 3343l-4-15-61-26 8 20z"/><path fill="#f31500" stroke="#920d00" d="M2532 3338l-13-1-38 60 12-6z"/><path fill="#785400" stroke="#483200" d="M3558 4619l0 29 57 1 3-29z"/><path fill="#dc0d00" stroke="#840800" d="M2594 3311l-13-12-49 39 14 8z"/><path fill="#656e05" stroke="#3d4203" d="M3583 4369l15 27 19-26-15-27z"/><path fill="#b73000" stroke="#6e1d00" d="M2718 3322l-8-20-60-6 11 21z"/><path fill="#925700" stroke="#583400" d="M2829 3376l0-10-58-38 4 15z"/><path fill="#816400" stroke="#4e3c00" d="M3463 4732l-22 12 36 1 27-11z"/><path fill="#fa4900" stroke="#962c00" d="M2481 3397l-8 12-25 70 6-17z"/><path fill="#cb2900" stroke="#7a1900" d="M2661 3317l-11-21-56 15 14 20z"/><path fill="#7e6300" stroke="#4c3b00" d="M3479 4714l-16 18 41 2 22-16z"/><path fill="#747300" stroke="#464500" d="M3575 4468l14 29 51-13-13-30z"/><path fill="#856c00" stroke="#504100" d="M2879 3414l2-3-52-45 0 10z"/><path fill="#7b6400" stroke="#4a3c00" d="M3553 4589l5 30 60 1-1-30z"/><path fill="#596f12" stroke="#36420b" d="M3569 4344l14 25 19-26-14-26z"/><path fill="#7d6600" stroke="#4b3d00" d="M3490 4693l-11 21 47 4 17-20z"/><path fill="#ee3100" stroke="#8f1d00" d="M2546 3346l-14-8-39 53 14 3z"/><path fill="#727c06" stroke="#444a04" d="M2924 3454l3 1-46-44-2 3z"/><path fill="#677a0f" stroke="#3e4909" d="M3561 4439l14 29 52-14-14-30z"/><path fill="#db3300" stroke="#831f00" d="M2608 3331l-14-20-48 35 16 15z"/><path fill="#7a7800" stroke="#494800" d="M3544 4559l9 30 64 1-7-31z"/><path fill="#ab6100" stroke="#673a00" d="M2778 3365l-3-22-57-21 7 26z"/><path fill="#4f6f1c" stroke="#304211" d="M3556 4321l13 23 19-27-14-24z"/><path fill="#f95300" stroke="#963200" d="M2493 3391l-12 6-27 65 11-10z"/><path fill="#9e7200" stroke="#5f4500" d="M2829 3392l0-16-54-33 3 22z"/><path fill="#ba5700" stroke="#703400" d="M2725 3348l-7-26-57-5 12 28z"/><path fill="#7d6f00" stroke="#4b4300" d="M3496 4668l-6 25 53 5 10-24z"/><path fill="#7b8b0c" stroke="#4a5307" d="M3383 4753l-26 5 27-2 31-3z"/><path fill="#928600" stroke="#585000" d="M2876 3425l3-11-50-38 0 16z"/><path fill="#c95200" stroke="#783100" d="M2673 3345l-12-28-53 14 15 26z"/><path fill="#5a7b1d" stroke="#364a12" d="M3546 4413l15 26 52-15-15-28z"/><path fill="#6d800e" stroke="#424d08" d="M3533 4530l11 29 66 0-9-31z"/><path fill="#798508" stroke="#485005" d="M3404 4743l-21 10 32 0 26-9z"/><path fill="#456e25" stroke="#2a4216" d="M3544 4298l12 23 18-28-12-23z"/><path fill="#787d03" stroke="#484b02" d="M3496 4642l0 26 57 6 5-26z"/><path fill="#fb9d00" stroke="#975e00" d="M2454 3462l-6 17-17 67 4-20z"/><path fill="#768a0f" stroke="#475309" d="M2919 3459l5-5-45-40-3 11z"/><path fill="#e75400" stroke="#8a3200" d="M2562 3361l-16-15-39 48 17 9z"/><path fill="#758108" stroke="#464d05" d="M3421 4728l-17 15 37 1 22-12z"/><path fill="#f56800" stroke="#933e00" d="M2507 3394l-14-3-28 61 13-4z"/><path fill="#d55d00" stroke="#803800" d="M2623 3357l-15-26-46 30 17 22z"/><path fill="#3c6d2d" stroke="#24411b" d="M3533 4277l11 21 18-28-10-22z"/><path fill="#4d7d2c" stroke="#2e4b1a" d="M3531 4387l15 26 52-17-15-27z"/><path fill="#5f821f" stroke="#394e12" d="M3520 4501l13 29 68-2-12-31z"/><path fill="#b18800" stroke="#6a5200" d="M2782 3392l-4-27-53-17 8 31z"/><path fill="#6d8110" stroke="#414d0a" d="M3492 4613l4 29 62 6 0-29z"/><path fill="#a79400" stroke="#645900" d="M2829 3414l0-22-51-27 4 27z"/><path fill="#608521" stroke="#395014" d="M2959 3490l6 0-41-36-5 5z"/><path fill="#6f7f0c" stroke="#424c07" d="M3432 4709l-11 19 42 4 16-18z"/><path fill="#bc7e00" stroke="#714b00" d="M2733 3379l-8-31-52-3 11 32z"/><path fill="#fc9d00" stroke="#975e00" d="M2465 3452l-11 10-19 64 8-15z"/><path fill="#8d9e0b" stroke="#555f07" d="M2873 3441l3-16-47-33 0 22z"/><path fill="#356b33" stroke="#20401f" d="M3524 4256l9 21 19-29-9-21z"/><path fill="#417d39" stroke="#274b22" d="M3518 4363l13 24 52-18-14-25z"/><path fill="#c77f00" stroke="#774c00" d="M2684 3377l-11-32-50 12 16 30z"/><path fill="#508430" stroke="#304f1d" d="M3506 4473l14 28 69-4-14-29z"/><path fill="#60831f" stroke="#3a4f13" d="M3485 4584l7 29 66 6-5-30z"/><path fill="#688013" stroke="#3f4d0b" d="M3439 4687l-7 22 47 5 11-21z"/><path fill="#75981e" stroke="#465b12" d="M2914 3470l5-11-43-34-3 16z"/><path fill="#51842e" stroke="#314f1c" d="M2996 3518l7 2-38-30-6 0z"/><path fill="#628620" stroke="#3b5013" d="M3351 4755l-21 7 27-4 26-5z"/><path fill="#ef8100" stroke="#8f4d00" d="M2524 3403l-17-9-29 54 16 3z"/><path fill="#df7800" stroke="#864800" d="M2579 3383l-17-22-38 42 18 16z"/><path fill="#2e6938" stroke="#1c3f21" d="M3517 4236l7 20 19-29-8-20z"/><path fill="#faa700" stroke="#966400" d="M2478 3448l-13 4-22 59 12-9z"/><path fill="#61942e" stroke="#3a591c" d="M2953 3497l6-7-40-31-5 11z"/><path fill="#367e44" stroke="#204b29" d="M3505 4341l13 22 51-19-13-23z"/><path fill="#5e811f" stroke="#394d12" d="M3368 4743l-17 12 32-2 21-10z"/><path fill="#d08800" stroke="#7d5200" d="M2639 3387l-16-30-44 26 18 26z"/><path fill="#60811d" stroke="#3a4d11" d="M3440 4662l-1 25 51 6 6-25z"/><path fill="#408641" stroke="#265027" d="M3492 4446l14 27 69-5-14-29z"/><path fill="#52862f" stroke="#31501c" d="M3475 4555l10 29 68 5-9-30z"/><path fill="#aeb002" stroke="#686a01" d="M2785 3423l-3-31-49-13 8 34z"/><path fill="#97ae11" stroke="#5b680a" d="M2829 3440l0-26-47-22 3 31z"/><path fill="#498639" stroke="#2c5122" d="M3032 3539l7 5-36-24-7-2z"/><path fill="#81a821" stroke="#4d6514" d="M2870 3462l3-21-44-27 0 26z"/><path fill="#bdab00" stroke="#726600" d="M2741 3413l-8-34-49-2 12 35z"/><path fill="#29673a" stroke="#193e23" d="M3512 4217l5 19 18-29-5-20z"/><path fill="#5b7e20" stroke="#364c13" d="M3381 4727l-13 16 36 0 17-15z"/><path fill="#54943c" stroke="#325924" d="M2988 3521l8-3-37-28-6 7z"/><path fill="#fce600" stroke="#978a00" d="M2443 3511l-8 15-14 57 6-18z"/><path fill="#2b7e4f" stroke="#1a4b30" d="M3493 4320l12 21 51-20-12-23z"/><path fill="#6da431" stroke="#41621d" d="M2909 3486l5-16-41-29-3 21z"/><path fill="#54832b" stroke="#334f1a" d="M3438 4635l2 27 56 6 0-26z"/><path fill="#e79e00" stroke="#8b5f00" d="M2542 3419l-18-16-30 48 18 9z"/><path fill="#c5ac00" stroke="#766700" d="M2696 3412l-12-35-45 10 15 34z"/><path fill="#318752" stroke="#1d5131" d="M3477 4421l15 25 69-7-15-26z"/><path fill="#438841" stroke="#285127" d="M3463 4527l12 28 69 4-11-29z"/><path fill="#26643b" stroke="#173c23" d="M3508 4198l4 19 18-30-4-19z"/><path fill="#d9a100" stroke="#826000" d="M2597 3409l-18-26-37 36 20 21z"/><path fill="#f4b900" stroke="#926f00" d="M2494 3451l-16-3-23 54 14-2z"/><path fill="#498e40" stroke="#2c5526" d="M3067 3554l8 6-36-16-7-5z"/><path fill="#5ea23f" stroke="#386126" d="M2945 3509l8-12-39-27-5 16z"/><path fill="#547e26" stroke="#324c17" d="M3389 4707l-8 20 40 1 11-19z"/><path fill="#237d57" stroke="#154b34" d="M3483 4299l10 21 51-22-11-21z"/><path fill="#4e9845" stroke="#2f5b29" d="M3023 3540l9-1-36-21-8 3z"/><path fill="#488539" stroke="#2b5022" d="M3431 4607l7 28 58 7-4-29z"/><path fill="#4f7f2d" stroke="#2f4c1b" d="M3322 4760l-18 8 26-6 21-7z"/><path fill="#ccb500" stroke="#7b6d00" d="M2654 3421l-15-34-42 22 19 30z"/><path fill="#23613b" stroke="#153a23" d="M3507 4179l1 19 18-30-1-20z"/><path fill="#248860" stroke="#15523a" d="M3464 4397l13 24 69-8-15-26z"/><path fill="#fbe600" stroke="#978a00" d="M2455 3502l-12 9-16 54 9-13z"/><path fill="#328a53" stroke="#1e5332" d="M3450 4499l13 28 70 3-13-29z"/><path fill="#7fb32f" stroke="#4c6c1c" d="M2829 3470l0-30-44-17 4 33z"/><path fill="#90b822" stroke="#566f15" d="M2789 3456l-4-33-44-10 7 36z"/><path fill="#6eaf3b" stroke="#426924" d="M2867 3487l3-25-41-22 0 30z"/><path fill="#52a34c" stroke="#31622d" d="M2980 3529l8-8-35-24-8 12z"/><path fill="#4b7f30" stroke="#2d4c1d" d="M3392 4684l-3 23 43 2 7-22z"/><path fill="#9cbe1c" stroke="#5d7211" d="M2748 3449l-7-36-45-1 12 37z"/><path fill="#519843" stroke="#305b28" d="M3104 3562l9 6-38-8-8-6z"/><path fill="#1a7d5e" stroke="#104b39" d="M3475 4280l8 19 50-22-9-21z"/><path fill="#5ead4a" stroke="#38682c" d="M2903 3507l6-21-39-24-3 25z"/><path fill="#225f39" stroke="#153922" d="M3507 4160l0 19 18-31 0-20z"/><path fill="#4a7b2d" stroke="#2c4a1b" d="M3336 4747l-14 13 29-5 17-12z"/><path fill="#4e9f4c" stroke="#2f602e" d="M3057 3553l10 1-35-15-9 1z"/><path fill="#dfbf00" stroke="#867300" d="M2562 3440l-20-21-30 41 19 15z"/><path fill="#ecce00" stroke="#8e7c00" d="M2512 3460l-18-9-25 49 17 3z"/><path fill="#38884b" stroke="#22512d" d="M3422 4579l9 28 61 6-7-29z"/><path fill="#18896d" stroke="#0e5241" d="M3451 4375l13 22 67-10-13-24z"/><path fill="#a5c418" stroke="#63750e" d="M2708 3449l-12-37-42 9 15 36z"/><path fill="#238c64" stroke="#15543c" d="M3436 4473l14 26 70 2-14-28z"/><path fill="#cfc700" stroke="#7c7700" d="M2616 3439l-19-30-35 31 20 25z"/><path fill="#4ca756" stroke="#2d6434" d="M3013 3546l10-6-35-19-8 8z"/><path fill="#50ad57" stroke="#306834" d="M2938 3526l7-17-36-23-6 21z"/><path fill="#147c64" stroke="#0c4a3c" d="M3468 4262l7 18 49-24-7-20z"/><path fill="#41823c" stroke="#274e24" d="M3391 4658l1 26 47 3 1-25z"/><path fill="#edf102" stroke="#8e9001" d="M2469 3500l-14 2-19 50 13-7z"/><path fill="#235c37" stroke="#153721" d="M3509 4141l-2 19 18-32 3-20z"/><path fill="#457931" stroke="#29491d" d="M3346 4730l-10 17 32-4 13-16z"/><path fill="#0c8a79" stroke="#075349" d="M3439 4354l12 21 67-12-13-22z"/><path fill="#53a951" stroke="#326631" d="M3092 3561l12 1-37-8-10-1z"/><path fill="#298a5c" stroke="#195337" d="M3411 4551l11 28 63 5-10-29z"/><path fill="#a7c91b" stroke="#647910" d="M2669 3457l-15-36-38 18 18 33z"/><path fill="#49af61" stroke="#2c693a" d="M2970 3543l10-14-35-20-7 17z"/><path fill="#138d75" stroke="#0c5546" d="M3422 4448l14 25 70 0-14-27z"/><path fill="#63b84e" stroke="#3c6e2f" d="M2829 3502l0-32-40-14 3 35z"/><path fill="#117a66" stroke="#0a493d" d="M3463 4244l5 18 49-26-5-19z"/><path fill="#6fbb46" stroke="#42702a" d="M2792 3491l-3-35-41-7 8 37z"/><path fill="#245b33" stroke="#16361f" d="M3514 4122l-5 19 19-33 4-20z"/><path fill="#57b559" stroke="#346d35" d="M2864 3515l3-28-38-17 0 32z"/><path fill="#4baf5e" stroke="#2d6939" d="M3046 3558l11-5-34-13-10 6z"/><path fill="#cdfb25" stroke="#7b9616" d="M2436 3552l-9 13-16 45 8-15z"/><path fill="#35844b" stroke="#204f2d" d="M3386 4631l5 27 49 4-2-27z"/><path fill="#407733" stroke="#26471e" d="M3296 4770l-16 9 24-11 18-8z"/><path fill="#78bf41" stroke="#487227" d="M2756 3486l-8-37-40 0 11 37z"/><path fill="#4bb564" stroke="#2d6c3c" d="M2898 3531l5-24-36-20-3 28z"/><path fill="#d4e408" stroke="#7f8905" d="M2531 3475l-19-15-26 43 20 10z"/><path fill="#3f7a37" stroke="#264921" d="M3352 4709l-6 21 35-3 8-20z"/><path fill="#c1d810" stroke="#748109" d="M2582 3465l-20-25-31 35 21 20z"/><path fill="#017e84" stroke="#014b4f" d="M3428 4335l11 19 66-13-12-21z"/><path fill="#650000" stroke="#3d0000" d="M2002 4865l24 17 34 22-21-18z"/><path fill="#41b46d" stroke="#276c41" d="M3002 3557l11-11-33-17-10 14z"/><path fill="#188c6f" stroke="#0f5443" d="M3399 4523l12 28 64 4-12-28z"/><path fill="#0d7967" stroke="#08483e" d="M3460 4226l3 18 49-27-4-19z"/><path fill="#d7f011" stroke="#81900a" d="M2486 3503l-17-3-20 45 16-1z"/><path fill="#27592f" stroke="#18361c" d="M3520 4101l-6 21 18-34 6-22z"/><path fill="#40b670" stroke="#266d43" d="M2930 3546l8-20-35-19-5 24z"/><path fill="#058685" stroke="#035150" d="M3408 4425l14 23 70-2-15-25z"/><path fill="#7dc33f" stroke="#4b7526" d="M2719 3486l-11-37-39 8 15 36z"/><path fill="#a3cd24" stroke="#627b15" d="M2634 3472l-18-33-34 26 20 28z"/><path fill="#62b44d" stroke="#3b6c2e" d="M3128 3564l14 0-38-2-12-1z"/><path fill="#51b861" stroke="#306e3a" d="M3079 3566l13-5-35-8-11 5z"/><path fill="#3c7232" stroke="#24451e" d="M3309 4757l-13 13 26-10 14-13z"/><path fill="#27875c" stroke="#175137" d="M3379 4603l7 28 52 4-7-28z"/><path fill="#00738a" stroke="#004553" d="M3419 4316l9 19 65-15-10-21z"/><path fill="#377c42" stroke="#214b27" d="M3353 4686l-1 23 37-2 3-23z"/><path fill="#37b87b" stroke="#216f4a" d="M2960 3561l10-18-32-17-8 20z"/><path fill="#c5f82b" stroke="#76951a" d="M2449 3545l-13 7-17 43 12-11z"/><path fill="#2b582a" stroke="#1a3519" d="M3528 4080l-8 21 18-35 8-22z"/><path fill="#0c7767" stroke="#07473e" d="M3458 4209l2 17 48-28-1-19z"/><path fill="#ed0700" stroke="#8e0400" d="M1975 4705l-3 33 1 46 2-33z"/><path fill="#42bb73" stroke="#277045" d="M3033 3569l13-11-33-12-11 11z"/><path fill="#098a81" stroke="#05534d" d="M3386 4497l13 26 64 4-13-28z"/><path fill="#7dc643" stroke="#4b7728" d="M2684 3493l-15-36-35 15 17 34z"/><path fill="#007590" stroke="#004656" d="M3395 4403l13 22 69-4-13-24z"/><path fill="#44bb71" stroke="#297044" d="M2829 3534l0-32-37-11 4 36z"/><path fill="#720000" stroke="#450000" d="M1986 4842l16 23 37 21-14-22z"/><path fill="#3dba78" stroke="#247048" d="M2861 3545l3-30-35-13 0 32z"/><path fill="#4ebd69" stroke="#2f713f" d="M2796 3527l-4-36-36-5 6 37z"/><path fill="#770000" stroke="#470000" d="M2087 4914l33 5 48 4-28-6z"/><path fill="#aedb26" stroke="#688317" d="M2552 3495l-21-20-25 38 21 14z"/><path fill="#33ba81" stroke="#1f704d" d="M2892 3557l6-26-34-16-3 30z"/><path fill="#006a89" stroke="#004052" d="M3411 4298l8 18 64-17-8-19z"/><path fill="#34bd83" stroke="#1f724f" d="M2990 3573l12-16-32-14-10 18z"/><path fill="#99d132" stroke="#5c7d1e" d="M2602 3493l-20-28-30 30 21 24z"/><path fill="#387236" stroke="#214421" d="M3317 4739l-8 18 27-10 10-17z"/><path fill="#54bf65" stroke="#32733d" d="M2762 3523l-6-37-37 0 10 38z"/><path fill="#18896d" stroke="#0e5241" d="M3369 4576l10 27 52 4-9-28z"/><path fill="#0b7566" stroke="#07463d" d="M3459 4191l-1 18 49-30 0-19z"/><path fill="#bae725" stroke="#708a16" d="M2506 3513l-20-10-21 41 19 4z"/><path fill="#315824" stroke="#1d3516" d="M3537 4058l-9 22 18-36 10-24z"/><path fill="#2b7f50" stroke="#1a4c30" d="M3350 4660l3 26 39-2-1-26z"/><path fill="#5cc15f" stroke="#377439" d="M3112 3570l16-6-36-3-13 5z"/><path fill="#2abc8c" stroke="#197154" d="M2922 3569l8-23-32-15-6 26z"/><path fill="#006691" stroke="#003d57" d="M3383 4382l12 21 69-6-13-22z"/><path fill="#007890" stroke="#004856" d="M3372 4472l14 25 64 2-14-26z"/><path fill="#47c376" stroke="#2b7547" d="M3064 3576l15-10-33-8-13 11z"/><path fill="#79c949" stroke="#49792c" d="M2651 3506l-17-34-32 21 19 31z"/><path fill="#58c264" stroke="#35743c" d="M2729 3524l-10-38-35 7 14 37z"/><path fill="#fc2900" stroke="#971800" d="M1982 4671l-7 34 0 46 6-35z"/><path fill="#b6f133" stroke="#6d911f" d="M2465 3544l-16 1-18 39 15-4z"/><path fill="#006389" stroke="#003b52" d="M3405 4282l6 16 64-18-7-18z"/><path fill="#8a2400" stroke="#531600" d="M2201 4923l36-6 46-3-30 4z"/><path fill="#0d7363" stroke="#08453b" d="M3461 4174l-2 17 48-31 2-19z"/><path fill="#24c096" stroke="#15735a" d="M2950 3581l10-20-30-15-8 23z"/><path fill="#37571e" stroke="#213412" d="M3549 4035l-12 23 19-38 12-24z"/><path fill="#33c48a" stroke="#1f7553" d="M3019 3583l14-14-31-12-12 16z"/><path fill="#08887e" stroke="#05514c" d="M3357 4548l12 28 53 3-11-28z"/><path fill="#860000" stroke="#500000" d="M1976 4815l10 27 39 22-8-28z"/><path fill="#31743e" stroke="#1e4525" d="M3321 4718l-4 21 29-9 6-21z"/><path fill="#770000" stroke="#470000" d="M2060 4904l27 10 53 3-22-12z"/><path fill="#005991" stroke="#003557" d="M3372 4363l11 19 68-7-12-21z"/><path fill="#1f825f" stroke="#134e39" d="M3344 4632l6 28 41-2-5-27z"/><path fill="#006791" stroke="#003e57" d="M3359 4449l13 23 64 1-14-25z"/><path fill="#56c467" stroke="#34753e" d="M2698 3530l-14-37-33 13 17 34z"/><path fill="#26be92" stroke="#177257" d="M2829 3567l0-33-33-7 3 34z"/><path fill="#21be97" stroke="#14725a" d="M2858 3575l3-30-32-11 0 33z"/><path fill="#005c88" stroke="#003751" d="M3400 4265l5 17 63-20-5-18z"/><path fill="#2dbe8b" stroke="#1b7253" d="M2799 3561l-3-34-34-4 7 36z"/><path fill="#88d345" stroke="#517f29" d="M2573 3519l-21-24-25 32 21 18z"/><path fill="#a4f64a" stroke="#63942c" d="M2431 3584l-12 11-17 34 11-12z"/><path fill="#0f715e" stroke="#094438" d="M3465 4156l-4 18 48-33 5-19z"/><path fill="#356931" stroke="#203f1d" d="M3285 4773l-11 13 22-16 13-13z"/><path fill="#20c49e" stroke="#13765f" d="M2978 3592l12-19-30-12-10 20z"/><path fill="#1abf9f" stroke="#10735f" d="M2886 3584l6-27-31-12-3 30z"/><path fill="#99dd3d" stroke="#5c8524" d="M2527 3527l-21-14-22 35 20 10z"/><path fill="#71cb54" stroke="#447a33" d="M2621 3524l-19-31-29 26 21 26z"/><path fill="#4fcb75" stroke="#2f7a46" d="M3095 3580l17-10-33-4-15 10z"/><path fill="#6ac958" stroke="#407935" d="M3148 3570l19-8-39 2-16 6z"/><path fill="#30bf89" stroke="#1d7352" d="M2769 3559l-7-36-33 1 10 36z"/><path fill="#00748d" stroke="#004555" d="M3345 4522l12 26 54 3-12-28z"/><path fill="#004e92" stroke="#002f57" d="M3362 4345l10 18 67-9-11-19z"/><path fill="#fd4d00" stroke="#982e00" d="M1993 4636l-11 35-1 45 11-36z"/><path fill="#13c1a8" stroke="#0b7465" d="M2914 3594l8-25-30-12-6 27z"/><path fill="#35cb8f" stroke="#207a56" d="M3048 3590l16-14-31-7-14 14z"/><path fill="#9de843" stroke="#5e8b28" d="M2484 3548l-19-4-19 36 18 0z"/><path fill="#8ec631" stroke="#55771e" d="M3207 3557l21-4-44 7-17 2z"/><path fill="#971600" stroke="#5a0d00" d="M2168 4923l33 0 52-5-26-3z"/><path fill="#005593" stroke="#003358" d="M3346 4427l13 22 63-1-14-23z"/><path fill="#28774b" stroke="#18472d" d="M3321 4694l0 24 31-9 1-23z"/><path fill="#005987" stroke="#003551" d="M3397 4249l3 16 63-21-3-18z"/><path fill="#108570" stroke="#0a5043" d="M3336 4605l8 27 42-1-7-28z"/><path fill="#52c66d" stroke="#317742" d="M2668 3540l-17-34-30 18 19 31z"/><path fill="#126f5a" stroke="#0b4336" d="M3470 4138l-5 18 49-34 6-21z"/><path fill="#33c188" stroke="#1e7452" d="M2739 3560l-10-36-31 6 13 35z"/><path fill="#a90000" stroke="#650000" d="M1973 4784l3 31 41 21-2-30z"/><path fill="#1ecaa6" stroke="#127963" d="M3005 3601l14-18-29-10-12 19z"/><path fill="#0ec3b0" stroke="#09756a" d="M2940 3604l10-23-28-12-8 25z"/><path fill="#7e0000" stroke="#4c0000" d="M2039 4886l21 18 58 1-16-19z"/><path fill="#844e00" stroke="#4f2f00" d="M2283 4914l33-8 45-6-27 6z"/><path fill="#004392" stroke="#002857" d="M3354 4328l8 17 66-10-9-19z"/><path fill="#2f6836" stroke="#1c3f20" d="M3293 4756l-8 17 24-16 8-18z"/><path fill="#00638f" stroke="#003c56" d="M3332 4497l13 25 54 1-13-26z"/><path fill="#9af04e" stroke="#5c902f" d="M2446 3580l-15 4-18 33 14-7z"/><path fill="#004694" stroke="#002a59" d="M3334 4407l12 20 62-2-13-22z"/><path fill="#005685" stroke="#003450" d="M3396 4234l1 15 63-23-2-17z"/><path fill="#33c289" stroke="#1f7452" d="M2711 3565l-13-35-30 10 15 34z"/><path fill="#09b8b1" stroke="#056e6a" d="M2829 3599l0-32-30-6 3 34z"/><path fill="#04b3b6" stroke="#036b6d" d="M2855 3605l3-30-29-8 0 32z"/><path fill="#64cc62" stroke="#3c7b3b" d="M2594 3545l-21-26-25 26 22 22z"/><path fill="#176e53" stroke="#0e4232" d="M3478 4118l-8 20 50-37 8-21z"/><path fill="#0ac1b9" stroke="#06746f" d="M2966 3613l12-21-28-11-10 23z"/><path fill="#78d455" stroke="#487f33" d="M2548 3545l-21-18-23 31 22 14z"/><path fill="#1d7a59" stroke="#114936" d="M3317 4668l4 26 32-8-3-26z"/><path fill="#017c82" stroke="#014a4e" d="M3326 4577l10 28 43-2-10-27z"/><path fill="#0ebeab" stroke="#087267" d="M2802 3595l-3-34-30-2 6 35z"/><path fill="#fd7600" stroke="#984700" d="M2006 4602l-13 34-1 44 12-35z"/><path fill="#3cd18e" stroke="#247e55" d="M3076 3595l19-15-31-4-16 14z"/><path fill="#5cd16e" stroke="#377d42" d="M3127 3582l21-12-36 0-17 10z"/><path fill="#00aebd" stroke="#006971" d="M2881 3612l5-28-28-9-3 30z"/><path fill="#4bc775" stroke="#2d7746" d="M2640 3555l-19-31-27 21 21 27z"/><path fill="#003c91" stroke="#002457" d="M3347 4312l7 16 65-12-8-18z"/><path fill="#22d0a8" stroke="#147d65" d="M3031 3607l17-17-29-7-14 18z"/><path fill="#a50c00" stroke="#630700" d="M2140 4917l28 6 59-8-21-9z"/><path fill="#10c0a9" stroke="#0a7365" d="M2775 3594l-6-35-30 1 9 35z"/><path fill="#83dd53" stroke="#4f8532" d="M2504 3558l-20-10-20 32 20 6z"/><path fill="#80cf49" stroke="#4d7c2c" d="M3184 3567l23-10-40 5-19 8z"/><path fill="#00abc4" stroke="#006676" d="M2906 3620l8-26-28-10-5 28z"/><path fill="#005091" stroke="#003057" d="M3319 4473l13 24 54 0-14-25z"/><path fill="#005584" stroke="#00334f" d="M3396 4218l0 16 62-25 1-18z"/><path fill="#003895" stroke="#002259" d="M3323 4387l11 20 61-4-12-21z"/><path fill="#2a6b3e" stroke="#194025" d="M3296 4734l-3 22 24-17 4-21z"/><path fill="#7f7400" stroke="#4c4600" d="M2361 4900l29-10 40-5-24 8z"/><path fill="#cf0000" stroke="#7c0000" d="M1975 4751l-2 33 42 22 3-34z"/><path fill="#2ec28e" stroke="#1c7555" d="M2683 3574l-15-34-28 15 18 31z"/><path fill="#8bf15e" stroke="#549038" d="M2413 3617l-11 12-19 27 10-14z"/><path fill="#8f4400" stroke="#562900" d="M2253 4918l30-4 51-8-24-1z"/><path fill="#0ac6be" stroke="#067772" d="M2990 3621l15-20-27-9-12 21z"/><path fill="#8a0000" stroke="#530000" d="M2025 4864l14 22 63 0-10-24z"/><path fill="#1e6c4b" stroke="#12412d" d="M3487 4098l-9 20 50-38 9-22z"/><path fill="#10c0a9" stroke="#0a7366" d="M2748 3595l-9-35-28 5 12 34z"/><path fill="#00a7c9" stroke="#006479" d="M2930 3628l10-24-26-10-8 26z"/><path fill="#00688a" stroke="#003e53" d="M3314 4550l12 27 43-1-12-28z"/><path fill="#003591" stroke="#002057" d="M3341 4297l6 15 64-14-6-16z"/><path fill="#88e657" stroke="#528a34" d="M2464 3580l-18 0-19 30 18-2z"/><path fill="#a9cb1c" stroke="#657a11" d="M3248 3551l26-8-46 10-21 4z"/><path fill="#117e68" stroke="#0a4b3f" d="M3311 4640l6 28 33-8-6-28z"/><path fill="#002a95" stroke="#00195a" d="M3313 4370l10 17 60-5-11-19z"/><path fill="#005682" stroke="#00334e" d="M3398 4202l-2 16 63-27 2-17z"/><path fill="#003e92" stroke="#002558" d="M3307 4451l12 22 53-1-13-23z"/><path fill="#fd9b00" stroke="#985d00" d="M2020 4569l-14 33-2 43 15-34z"/><path fill="#10c0a9" stroke="#0a7366" d="M2723 3599l-12-34-28 9 15 33z"/><path fill="#0095c1" stroke="#005974" d="M2829 3630l0-31-27-4 3 32z"/><path fill="#0093c3" stroke="#005875" d="M2853 3635l2-30-26-6 0 31z"/><path fill="#00a8cd" stroke="#00657b" d="M2954 3636l12-23-26-9-10 24z"/><path fill="#43c77d" stroke="#28774b" d="M2615 3572l-21-27-24 22 22 24z"/><path fill="#57cc6f" stroke="#347b42" d="M2570 3567l-22-22-22 27 23 18z"/><path fill="#25d6aa" stroke="#168066" d="M3058 3612l18-17-28-5-17 17z"/><path fill="#46d78a" stroke="#2a8153" d="M3105 3597l22-15-32-2-19 15z"/><path fill="#008fc5" stroke="#005676" d="M2876 3640l5-28-26-7-2 30z"/><path fill="#0097c0" stroke="#005b73" d="M2805 3627l-3-32-27-1 6 32z"/><path fill="#002d90" stroke="#001b56" d="M3337 4282l4 15 64-15-5-17z"/><path fill="#246b43" stroke="#164028" d="M3498 4077l-11 21 50-40 12-23z"/><path fill="#0accc4" stroke="#067a75" d="M3015 3627l16-20-26-6-15 20z"/><path fill="#29c393" stroke="#197558" d="M2658 3586l-18-31-25 17 19 28z"/><path fill="#236f49" stroke="#15432c" d="M3296 4710l0 24 25-16 0-24z"/><path fill="#68d365" stroke="#3e7f3d" d="M2526 3572l-22-14-20 28 22 11z"/><path fill="#00568c" stroke="#003454" d="M3302 4525l12 25 43-2-12-26z"/><path fill="#6cd663" stroke="#41803c" d="M3159 3581l25-14-36 3-21 12z"/><path fill="#ad0800" stroke="#680500" d="M2118 4905l22 12 66-11-16-16z"/><path fill="#008ec8" stroke="#005578" d="M2899 3646l7-26-25-8-5 28z"/><path fill="#009ac0" stroke="#005c73" d="M2781 3626l-6-32-27 1 9 33z"/><path fill="#002196" stroke="#00145a" d="M3304 4353l9 17 59-7-10-18z"/><path fill="#005780" stroke="#00344d" d="M3402 4186l-4 16 63-28 4-18z"/><path fill="#03777a" stroke="#024849" d="M3302 4613l9 27 33-8-8-27z"/><path fill="#002f94" stroke="#001c59" d="M3295 4430l12 21 52-2-13-22z"/><path fill="#85eb5f" stroke="#508d39" d="M2427 3610l-14 7-20 25 15-9z"/><path fill="#f91200" stroke="#950b00" d="M1981 4716l-6 35 43 21 7-35z"/><path fill="#896f00" stroke="#524300" d="M2334 4906l27-6 45-7-21 1z"/><path fill="#c6a100" stroke="#776100" d="M3321 3534l29-6-53 13-23 2z"/><path fill="#2f5f2e" stroke="#1c391b" d="M3273 4780l-7 17 19-24 8-17z"/><path fill="#00a9d2" stroke="#00657e" d="M2976 3643l14-22-24-8-12 23z"/><path fill="#0ebeac" stroke="#087267" d="M2698 3607l-15-33-25 12 17 31z"/><path fill="#9b3f00" stroke="#5d2600" d="M2227 4915l26 3 57-13-19-6z"/><path fill="#008acc" stroke="#00537a" d="M2921 3653l9-25-24-8-7 26z"/><path fill="#a50000" stroke="#630000" d="M2017 4836l8 28 67-2-4-28z"/><path fill="#002b8f" stroke="#001a56" d="M3335 4267l2 15 63-17-3-16z"/><path fill="#009cbf" stroke="#005e73" d="M2757 3628l-9-33-25 4 11 33z"/><path fill="#71db63" stroke="#44843c" d="M2484 3586l-20-6-19 28 20 3z"/><path fill="#98d335" stroke="#5b7f20" d="M3221 3564l27-13-41 6-23 10z"/><path fill="#fdbf00" stroke="#987300" d="M2035 4538l-15 31-1 42 15-33z"/><path fill="#001896" stroke="#000e5a" d="M3297 4337l7 16 58-8-8-17z"/><path fill="#00458e" stroke="#002a55" d="M3290 4500l12 25 43-3-13-25z"/><path fill="#2d6a39" stroke="#1b4022" d="M3510 4055l-12 22 51-42 13-25z"/><path fill="#002195" stroke="#001459" d="M3284 4410l11 20 51-3-12-20z"/><path fill="#005b7e" stroke="#00374c" d="M3407 4170l-5 16 63-30 5-18z"/><path fill="#187357" stroke="#0f4534" d="M3292 4683l4 27 25-16-4-26z"/><path fill="#008dd0" stroke="#00557d" d="M2942 3659l12-23-24-8-9 25z"/><path fill="#0dd4c5" stroke="#087f76" d="M3039 3632l19-20-27-5-16 20z"/><path fill="#2edba5" stroke="#1c8363" d="M3084 3616l21-19-29-2-18 17z"/><path fill="#0073c5" stroke="#004576" d="M2850 3663l3-28-24-5 0 30z"/><path fill="#39c687" stroke="#227751" d="M2592 3591l-22-24-21 23 22 20z"/><path fill="#0075c3" stroke="#004675" d="M2829 3660l0-30-24-3 2 31z"/><path fill="#006583" stroke="#003d4f" d="M3292 4585l10 28 34-8-10-28z"/><path fill="#0099bf" stroke="#005c72" d="M2734 3632l-11-33-25 8 13 31z"/><path fill="#22c29a" stroke="#14745c" d="M2634 3600l-19-28-23 19 21 25z"/><path fill="#71840f" stroke="#444f09" d="M2406 4893l24-8 40-4-19 4z"/><path fill="#00288e" stroke="#001855" d="M3333 4253l2 14 62-18-1-15z"/><path fill="#0071c7" stroke="#004478" d="M2871 3667l5-27-23-5-3 28z"/><path fill="#0077c1" stroke="#004774" d="M2807 3658l-2-31-24-1 5 31z"/><path fill="#00b0d7" stroke="#006a81" d="M2999 3648l16-21-25-6-14 22z"/><path fill="#4acb7b" stroke="#2c7a4a" d="M2549 3590l-23-18-20 25 23 14z"/><path fill="#09b7b0" stroke="#056e6a" d="M2675 3617l-17-31-24 14 19 28z"/><path fill="#52db81" stroke="#31834e" d="M3134 3598l25-17-32 1-22 15z"/><path fill="#000e95" stroke="#00095a" d="M3290 4322l7 15 57-9-7-16z"/><path fill="#0070cb" stroke="#00437a" d="M2892 3672l7-26-23-6-5 27z"/><path fill="#77e263" stroke="#48883c" d="M2445 3608l-18 2-19 23 18-4z"/><path fill="#0079c0" stroke="#004873" d="M2786 3657l-5-31-24 2 7 31z"/><path fill="#00348f" stroke="#001f56" d="M3277 4477l13 23 42-3-13-24z"/><path fill="#2a6235" stroke="#193b20" d="M3277 4759l-4 21 20-24 3-22z"/><path fill="#001396" stroke="#000b5a" d="M3273 4392l11 18 50-3-11-20z"/><path fill="#bc0b00" stroke="#710700" d="M2102 4886l16 19 72-15-10-20z"/><path fill="#fa3700" stroke="#962100" d="M1992 4680l-11 36 44 21 11-35z"/><path fill="#008dd5" stroke="#005480" d="M2963 3665l13-22-22-7-12 23z"/><path fill="#c9c700" stroke="#797700" d="M3290 3545l31-11-47 9-26 8z"/><path fill="#00607d" stroke="#003a4b" d="M3414 4153l-7 17 63-32 8-20z"/><path fill="#fde400" stroke="#988900" d="M2051 4507l-16 31-1 40 15-31z"/><path fill="#36692f" stroke="#203f1c" d="M3524 4031l-14 24 52-45 14-26z"/><path fill="#0098be" stroke="#005b72" d="M2711 3638l-13-31-23 10 15 29z"/><path fill="#956e00" stroke="#594200" d="M2310 4905l24 1 51-12-18-4z"/><path fill="#006fce" stroke="#00427c" d="M2912 3677l9-24-22-7-7 26z"/><path fill="#00288c" stroke="#001854" d="M3334 4239l-1 14 63-19 0-16z"/><path fill="#59d171" stroke="#367d44" d="M2506 3597l-22-11-19 25 23 7z"/><path fill="#0078bf" stroke="#004872" d="M2764 3659l-7-31-23 4 10 30z"/><path fill="#005486" stroke="#003250" d="M3281 4558l11 27 34-8-12-27z"/><path fill="#c05f00" stroke="#733900" d="M3402 3519l32-4-58 13-26 0z"/><path fill="#c20000" stroke="#740000" d="M2015 4806l2 30 71-2 1-31z"/><path fill="#a94000" stroke="#652600" d="M2206 4906l21 9 64-16-15-13z"/><path fill="#000795" stroke="#000459" d="M3285 4308l5 14 57-10-6-15z"/><path fill="#7ed955" stroke="#4b8233" d="M3192 3580l29-16-37 3-25 14z"/><path fill="#0c7767" stroke="#07473e" d="M3286 4656l6 27 25-15-6-28z"/><path fill="#000796" stroke="#00045a" d="M3264 4376l9 16 50-5-10-17z"/><path fill="#002291" stroke="#001557" d="M3266 4455l11 22 42-4-12-22z"/><path fill="#00b4dc" stroke="#006c84" d="M3020 3654l19-22-24-5-16 21z"/><path fill="#0071d3" stroke="#00447e" d="M2931 3683l11-24-21-6-9 24z"/><path fill="#13dec4" stroke="#0b8575" d="M3062 3636l22-20-26-4-19 20z"/><path fill="#1ac1a0" stroke="#107460" d="M2613 3616l-21-25-21 19 23 22z"/><path fill="#0054c6" stroke="#003377" d="M2848 3690l2-27-21-3 0 27z"/><path fill="#04b0b4" stroke="#036a6c" d="M2653 3628l-19-28-21 16 20 25z"/><path fill="#0056c4" stroke="#003476" d="M2829 3687l0-27-22-2 3 28z"/><path fill="#0077be" stroke="#004872" d="M2744 3662l-10-30-23 6 13 29z"/><path fill="#0056c9" stroke="#003379" d="M2867 3693l4-26-21-4-2 27z"/><path fill="#0059c2" stroke="#003574" d="M2810 3686l-3-28-21-1 4 29z"/><path fill="#0090da" stroke="#005683" d="M2983 3671l16-23-23-5-13 22z"/><path fill="#00298a" stroke="#001953" d="M3335 4225l-1 14 62-21 2-16z"/><path fill="#00667b" stroke="#003d4a" d="M3422 4135l-8 18 64-35 9-20z"/><path fill="#000394" stroke="#000259" d="M3281 4295l4 13 56-11-4-15z"/><path fill="#2ec48f" stroke="#1c7656" d="M2571 3610l-22-20-20 21 24 17z"/><path fill="#38dea0" stroke="#218560" d="M3109 3618l25-20-29-1-21 19z"/><path fill="#0094bd" stroke="#005971" d="M2690 3646l-15-29-22 11 18 28z"/><path fill="#236741" stroke="#153e27" d="M3277 4735l0 24 19-25 0-24z"/><path fill="#75e367" stroke="#46883e" d="M2408 3633l-15 9-22 18 15-10z"/><path fill="#004488" stroke="#002951" d="M3269 4532l12 26 33-8-12-25z"/><path fill="#64d76c" stroke="#3c8141" d="M2465 3611l-20-3-19 21 20 2z"/><path fill="#000096" stroke="#00005a" d="M3256 4360l8 16 49-6-9-17z"/><path fill="#0054cd" stroke="#00327b" d="M2885 3697l7-25-21-5-4 26z"/><path fill="#848f07" stroke="#4f5604" d="M2385 4894l21-1 45-8-17-1z"/><path fill="#0058c0" stroke="#003573" d="M2790 3686l-4-29-22 2 7 29z"/><path fill="#001392" stroke="#000b58" d="M3254 4435l12 20 41-4-12-21z"/><path fill="#406825" stroke="#263e16" d="M3539 4006l-15 25 52-47 16-28z"/><path fill="#e8fd0c" stroke="#8b9807" d="M2065 4479l-14 28-2 40 14-30z"/><path fill="#fa5b00" stroke="#963700" d="M2004 4645l-12 35 44 22 12-35z"/><path fill="#006c78" stroke="#004148" d="M3278 4628l8 28 25-16-9-27z"/><path fill="#0070d7" stroke="#004381" d="M2950 3688l13-23-21-6-11 24z"/><path fill="#0073bc" stroke="#004571" d="M2724 3667l-13-29-21 8 15 28z"/><path fill="#0052d0" stroke="#00317d" d="M2903 3701l9-24-20-5-7 25z"/><path fill="#b0d620" stroke="#698113" d="M3257 3561l33-16-42 6-27 13z"/><path fill="#ca1500" stroke="#790c00" d="M2092 4862l10 24 78-16-6-26z"/><path fill="#3fc883" stroke="#26784f" d="M2529 3611l-23-14-18 21 23 12z"/><path fill="#0057be" stroke="#003472" d="M2771 3688l-7-29-20 3 9 29z"/><path fill="#000093" stroke="#000058" d="M3279 4282l2 13 56-13-2-15z"/><path fill="#648b23" stroke="#3c5315" d="M2451 4885l19-4 39-2-16 2z"/><path fill="#002b88" stroke="#001a52" d="M3338 4211l-3 14 63-23 4-16z"/><path fill="#61de75" stroke="#3a8546" d="M3163 3599l29-19-33 1-25 17z"/><path fill="#000091" stroke="#000057" d="M3249 4345l7 15 48-7-7-16z"/><path fill="#ca8400" stroke="#794f00" d="M3366 3529l36-10-52 9-29 6z"/><path fill="#a27100" stroke="#614400" d="M2291 4899l19 6 57-15-14-9z"/><path fill="#e61400" stroke="#8a0c00" d="M2018 4772l-3 34 74-3 5-33z"/><path fill="#003289" stroke="#001e52" d="M3258 4508l11 24 33-7-12-25z"/><path fill="#000593" stroke="#000358" d="M3244 4416l10 19 41-5-11-20z"/><path fill="#016f74" stroke="#014246" d="M3432 4117l-10 18 65-37 11-21z"/><path fill="#0096de" stroke="#005a85" d="M3002 3676l18-22-21-6-16 23z"/><path fill="#0054d4" stroke="#00327f" d="M2921 3706l10-23-19-6-9 24z"/><path fill="#00bee0" stroke="#007286" d="M3041 3658l21-22-23-4-19 22z"/><path fill="#b54500" stroke="#6d2900" d="M2190 4890l16 16 70-20-11-18z"/><path fill="#00a9b7" stroke="#00656e" d="M2633 3641l-20-25-19 16 21 23z"/><path fill="#008dbb" stroke="#005570" d="M2671 3656l-18-28-20 13 19 25z"/><path fill="#003cc8" stroke="#002478" d="M2846 3715l2-25-19-3 0 26z"/><path fill="#0056bd" stroke="#003471" d="M2753 3691l-9-29-20 5 11 28z"/><path fill="#003bc5" stroke="#002376" d="M2829 3713l0-26-19-1 2 26z"/><path fill="#003acb" stroke="#00237a" d="M2863 3717l4-24-19-3-2 25z"/><path fill="#0072db" stroke="#004484" d="M2968 3693l15-22-20-6-13 23z"/><path fill="#003ac2" stroke="#002375" d="M2812 3712l-2-26-20 0 5 27z"/><path fill="#196b4e" stroke="#0f402f" d="M3274 4708l3 27 19-25-4-27z"/><path fill="#15bea3" stroke="#0d7262" d="M2594 3632l-23-22-18 18 23 19z"/><path fill="#005c7d" stroke="#00374b" d="M3268 4600l10 28 24-15-10-28z"/><path fill="#0072ba" stroke="#004570" d="M2705 3674l-15-28-19 10 16 26z"/><path fill="#19e1c1" stroke="#0f8774" d="M3085 3640l24-22-25-2-22 20z"/><path fill="#000091" stroke="#000057" d="M3278 4269l1 13 56-15-2-14z"/><path fill="#000089" stroke="#000052" d="M3244 4331l5 14 48-8-7-15z"/><path fill="#cffd26" stroke="#7c9817" d="M2079 4452l-14 27-2 38 14-28z"/><path fill="#6bda68" stroke="#40833f" d="M2426 3629l-18 4-22 17 19-4z"/><path fill="#0037ce" stroke="#00217c" d="M2879 3720l6-23-18-4-4 24z"/><path fill="#4dcc79" stroke="#2e7b49" d="M2488 3618l-23-7-19 20 23 6z"/><path fill="#003dc0" stroke="#002473" d="M2795 3713l-5-27-19 2 7 26z"/><path fill="#000093" stroke="#000058" d="M3235 4399l9 17 40-6-11-18z"/><path fill="#4b6718" stroke="#2d3e0f" d="M3554 3979l-15 27 53-50 16-30z"/><path fill="#003187" stroke="#001d51" d="M3343 4197l-5 14 64-25 5-16z"/><path fill="#00218b" stroke="#001453" d="M3246 4485l12 23 32-8-13-23z"/><path fill="#0055d9" stroke="#003382" d="M2938 3710l12-22-19-5-10 23z"/><path fill="#fa8300" stroke="#964f00" d="M2019 4611l-15 34 44 22 14-34z"/><path fill="#0055bb" stroke="#003370" d="M2735 3695l-11-28-19 7 13 27z"/><path fill="#0038d2" stroke="#00227e" d="M2895 3724l8-23-18-4-6 23z"/><path fill="#2f5b29" stroke="#1c3619" d="M3261 4794l-4 20 16-34 4-21z"/><path fill="#26c194" stroke="#177459" d="M2553 3628l-24-17-18 19 24 15z"/><path fill="#003cbe" stroke="#002472" d="M2778 3714l-7-26-18 3 8 26z"/><path fill="#93dc42" stroke="#588428" d="M3223 3580l34-19-36 3-29 16z"/><path fill="#969801" stroke="#5a5b01" d="M2367 4890l18 4 49-10-14-7z"/><path fill="#000083" stroke="#00004e" d="M3239 4318l5 13 46-9-5-14z"/><path fill="#0a786a" stroke="#06483f" d="M3443 4097l-11 20 66-40 12-22z"/><path fill="#44e196" stroke="#29875a" d="M3135 3621l28-22-29-1-25 20z"/><path fill="#000090" stroke="#000056" d="M3278 4256l0 13 55-16 1-14z"/><path fill="#000089" stroke="#000052" d="M3226 4383l9 16 38-7-9-16z"/><path fill="#d12800" stroke="#7d1800" d="M2088 4834l4 28 82-18 0-29z"/><path fill="#004c7f" stroke="#002e4c" d="M3257 4573l11 27 24-15-11-27z"/><path fill="#0077df" stroke="#004886" d="M2985 3698l17-22-19-5-15 22z"/><path fill="#0039d6" stroke="#002280" d="M2911 3728l10-22-18-5-8 23z"/><path fill="#009ce1" stroke="#005e87" d="M3021 3680l20-22-21-4-18 22z"/><path fill="#00128c" stroke="#000b54" d="M3235 4464l11 21 31-8-11-22z"/><path fill="#d2ae00" stroke="#7e6800" d="M3329 3543l37-14-45 5-31 11z"/><path fill="#0088b9" stroke="#00526f" d="M2652 3666l-19-25-18 14 21 23z"/><path fill="#006eb8" stroke="#00426f" d="M2687 3682l-16-26-19 10 18 25z"/><path fill="#003bbc" stroke="#002471" d="M2761 3717l-8-26-18 4 10 25z"/><path fill="#0020c9" stroke="#001378" d="M2844 3738l2-23-17-2 0 24z"/><path fill="#0022c6" stroke="#001577" d="M2829 3737l0-24-17-1 2 25z"/><path fill="#e83300" stroke="#8b1e00" d="M2025 4737l-7 35 76-2 8-35z"/><path fill="#0f6f5d" stroke="#094338" d="M3268 4680l6 28 18-25-6-27z"/><path fill="#0057dd" stroke="#003484" d="M2954 3715l14-22-18-5-12 22z"/><path fill="#003685" stroke="#002150" d="M3349 4182l-6 15 64-27 7-17z"/><path fill="#0020cc" stroke="#00137a" d="M2859 3740l4-23-17-2-2 23z"/><path fill="#0022c3" stroke="#001475" d="M2814 3737l-2-25-17 1 4 24z"/><path fill="#b8fd3c" stroke="#6f9824" d="M2091 4426l-12 26-2 37 12-27z"/><path fill="#0051b9" stroke="#00316f" d="M2718 3701l-13-27-18 8 15 25z"/><path fill="#00a0b9" stroke="#00606f" d="M2615 3655l-21-23-18 15 23 21z"/><path fill="#739820" stroke="#455b13" d="M2434 4884l17 1 42-4-14-3z"/><path fill="#00c8df" stroke="#007886" d="M3061 3662l24-22-23-4-21 22z"/><path fill="#00007c" stroke="#00004b" d="M3236 4306l3 12 46-10-4-13z"/><path fill="#ae7a00" stroke="#694900" d="M2276 4886l15 13 62-18-10-16z"/><path fill="#0021cf" stroke="#00147c" d="M2874 3743l5-23-16-3-4 23z"/><path fill="#00007c" stroke="#00004a" d="M3219 4368l7 15 38-7-8-16z"/><path fill="#0022c0" stroke="#001473" d="M2799 3737l-4-24-17 1 6 24z"/><path fill="#36c487" stroke="#207551" d="M2511 3630l-23-12-19 19 25 10z"/><path fill="#59d070" stroke="#357d43" d="M2446 3631l-20-2-21 17 22 0z"/><path fill="#bf5100" stroke="#733000" d="M2180 4870l10 20 75-22-5-23z"/><path fill="#00008e" stroke="#000055" d="M3279 4244l-1 12 56-17 1-14z"/><path fill="#003ada" stroke="#002383" d="M2926 3732l12-22-17-4-10 22z"/><path fill="#00028d" stroke="#000155" d="M3224 4444l11 20 31-9-12-20z"/><path fill="#57670d" stroke="#343e08" d="M3570 3951l-16 28 54-53 16-31z"/><path fill="#003bba" stroke="#00236f" d="M2745 3720l-10-25-17 6 12 24z"/><path fill="#faa700" stroke="#966400" d="M2034 4578l-15 33 43 22 15-33z"/><path fill="#001ed3" stroke="#00127f" d="M2888 3746l7-22-16-4-5 23z"/><path fill="#003b81" stroke="#00234e" d="M3246 4547l11 26 24-15-12-26z"/><path fill="#0021be" stroke="#001472" d="M2784 3738l-6-24-17 3 8 24z"/><path fill="#0eb9a7" stroke="#086f64" d="M2576 3647l-23-19-18 17 25 17z"/><path fill="#70d862" stroke="#43823b" d="M2386 3650l-15 10-26 11 17-9z"/><path fill="#15765e" stroke="#0c4738" d="M3456 4076l-13 21 67-42 14-24z"/><path fill="#2a5f32" stroke="#19391e" d="M3262 4770l-1 24 16-35 0-24z"/><path fill="#70e068" stroke="#43863e" d="M3190 3601l33-21-31 0-29 19z"/><path fill="#000079" stroke="#000048" d="M3233 4294l3 12 45-11-2-13z"/><path fill="#000074" stroke="#000045" d="M3212 4354l7 14 37-8-7-15z"/><path fill="#22e3ba" stroke="#148870" d="M3107 3644l28-23-26-3-24 22z"/><path fill="#0058e0" stroke="#003587" d="M2969 3719l16-21-17-5-14 22z"/><path fill="#c33e00" stroke="#752500" d="M3447 3519l38-7-51 3-32 4z"/><path fill="#003c83" stroke="#00244f" d="M3356 4167l-7 15 65-29 8-18z"/><path fill="#007de3" stroke="#004b88" d="M3002 3702l19-22-19-4-17 22z"/><path fill="#001fd7" stroke="#001281" d="M2902 3749l9-21-16-4-7 22z"/><path fill="#0067b6" stroke="#003e6d" d="M2670 3691l-18-25-16 12 19 22z"/><path fill="#0050b6" stroke="#00306d" d="M2702 3707l-15-25-17 9 17 24z"/><path fill="#036a6c" stroke="#024041" d="M3260 4652l8 28 18-24-8-28z"/><path fill="#00008b" stroke="#000053" d="M3214 4425l10 19 30-9-10-19z"/><path fill="#0021bb" stroke="#001470" d="M2769 3741l-8-24-16 3 10 24z"/><path fill="#000ac9" stroke="#000679" d="M2842 3760l2-22-15-1 0 22z"/><path fill="#000ac6" stroke="#000677" d="M2829 3759l0-22-15 0 1 22z"/><path fill="#003bdd" stroke="#002485" d="M2941 3736l13-21-16-5-12 22z"/><path fill="#00028c" stroke="#000154" d="M3282 4231l-3 13 56-19 3-14z"/><path fill="#000acd" stroke="#00067b" d="M2855 3762l4-22-15-2-2 22z"/><path fill="#a5fd4f" stroke="#63982f" d="M2102 4402l-11 24-2 36 11-25z"/><path fill="#000ac3" stroke="#000675" d="M2815 3759l-1-22-15 0 3 22z"/><path fill="#0037b7" stroke="#00216e" d="M2730 3725l-12-24-16 6 14 24z"/><path fill="#0081b6" stroke="#004d6d" d="M2636 3678l-21-23-16 13 21 21z"/><path fill="#00a2e4" stroke="#006189" d="M3039 3685l22-23-20-4-20 22z"/><path fill="#c7d90a" stroke="#788206" d="M3291 3561l38-18-39 2-33 16z"/><path fill="#002b83" stroke="#001a4f" d="M3234 4522l12 25 23-15-11-24z"/><path fill="#a3a502" stroke="#626301" d="M2353 4881l14 9 53-13-10-12z"/><path fill="#00006b" stroke="#000040" d="M3207 4340l5 14 37-9-5-14z"/><path fill="#000ad0" stroke="#00067d" d="M2868 3763l6-20-15-3-4 22z"/><path fill="#d63e00" stroke="#802500" d="M2089 4803l-1 31 86-19 3-31z"/><path fill="#000cc0" stroke="#000773" d="M2802 3759l-3-22-15 1 5 23z"/><path fill="#000075" stroke="#000046" d="M3232 4282l1 12 46-12-1-13z"/><path fill="#e95500" stroke="#8c3300" d="M2036 4702l-11 35 77-2 11-34z"/><path fill="#21bc95" stroke="#14715a" d="M2535 3645l-24-15-17 17 25 13z"/><path fill="#001fda" stroke="#001383" d="M2915 3752l11-20-15-4-9 21z"/><path fill="#46c67a" stroke="#2a7749" d="M2469 3637l-23-6-19 15 24 5z"/><path fill="#00007f" stroke="#00004c" d="M3206 4408l8 17 30-9-9-17z"/><path fill="#0020b9" stroke="#00136f" d="M2755 3744l-10-24-15 5 11 23z"/><path fill="#0007d4" stroke="#00047f" d="M2881 3766l7-20-14-3-6 20z"/><path fill="#000cbe" stroke="#000772" d="M2789 3761l-5-23-15 3 7 22z"/><path fill="#0098b6" stroke="#005b6d" d="M2599 3668l-23-21-16 15 23 19z"/><path fill="#560d00" stroke="#340800" d="M3677 3759l-9 35 17-52 9-36z"/><path fill="#facb00" stroke="#967a00" d="M2049 4547l-15 31 43 22 15-31z"/><path fill="#000065" stroke="#00003d" d="M3203 4328l4 12 37-9-5-13z"/><path fill="#02d1dc" stroke="#017d84" d="M3081 3667l26-23-22-4-24 22z"/><path fill="#00078a" stroke="#000453" d="M3286 4218l-4 13 56-20 5-14z"/><path fill="#004581" stroke="#00294e" d="M3365 4150l-9 17 66-32 10-18z"/><path fill="#50e38c" stroke="#308854" d="M3158 3625l32-24-27-2-28 22z"/><path fill="#003ce1" stroke="#002487" d="M2955 3740l14-21-15-4-13 21z"/><path fill="#001b84" stroke="#00104f" d="M3223 4499l11 23 24-14-12-23z"/><path fill="#005de3" stroke="#003888" d="M2984 3724l18-22-17-4-16 21z"/><path fill="#b98900" stroke="#6f5200" d="M2265 4868l11 18 67-21-6-20z"/><path fill="#005b76" stroke="#003647" d="M3251 4623l9 29 18-24-10-28z"/><path fill="#636200" stroke="#3b3b00" d="M3586 3921l-16 30 54-56 16-33z"/><path fill="#80a621" stroke="#4d6414" d="M2420 4877l14 7 45-6-10-9z"/><path fill="#1f7553" stroke="#124632" d="M3470 4054l-14 22 68-45 15-25z"/><path fill="#66d164" stroke="#3d7d3c" d="M2405 3646l-19 4-24 12 21-5z"/><path fill="#004cb3" stroke="#002e6c" d="M2687 3715l-17-24-15 9 18 23z"/><path fill="#0036b4" stroke="#00206c" d="M2716 3731l-14-24-15 8 15 22z"/><path fill="#0007d7" stroke="#000481" d="M2894 3769l8-20-14-3-7 20z"/><path fill="#c76200" stroke="#773b00" d="M2174 4844l6 26 80-25-2-27z"/><path fill="#22643f" stroke="#143c26" d="M3260 4743l2 27 15-35-3-27z"/><path fill="#000073" stroke="#000045" d="M3232 4270l0 12 46-13 0-13z"/><path fill="#000cbb" stroke="#000770" d="M2776 3763l-7-22-14 3 9 21z"/><path fill="#000072" stroke="#000044" d="M3198 4392l8 16 29-9-9-16z"/><path fill="#0020de" stroke="#001385" d="M2928 3756l13-20-15-4-11 20z"/><path fill="#0000ca" stroke="#000079" d="M2841 3780l1-20-13-1 0 20z"/><path fill="#0000c7" stroke="#000077" d="M2829 3779l0-20-14 0 2 20z"/><path fill="#0020b6" stroke="#00136d" d="M2741 3748l-11-23-14 6 13 21z"/><path fill="#0062b2" stroke="#003b6b" d="M2655 3700l-19-22-16 11 21 21z"/><path fill="#0082e5" stroke="#004e8a" d="M3018 3707l21-22-18-5-19 22z"/><path fill="#92fd62" stroke="#58983b" d="M2111 4379l-9 23-2 35 10-24z"/><path fill="#0000cd" stroke="#00007b" d="M2852 3781l3-19-13-2-1 20z"/><path fill="#0000c4" stroke="#000075" d="M2817 3779l-2-20-13 0 3 21z"/><path fill="#68a235" stroke="#3e6120" d="M2479 4878l14 3 39 1-11-5z"/><path fill="#cd6800" stroke="#7b3f00" d="M3405 3530l42-11-45 0-36 10z"/><path fill="#0000d1" stroke="#00007d" d="M2864 3783l4-20-13-1-3 19z"/><path fill="#00005f" stroke="#000039" d="M3200 4316l3 12 36-10-3-12z"/><path fill="#0000c1" stroke="#000074" d="M2805 3780l-3-21-13 2 5 20z"/><path fill="#a4dd32" stroke="#63851e" d="M3253 3583l38-22-34 0-34 19z"/><path fill="#0007db" stroke="#000483" d="M2905 3772l10-20-13-3-8 20z"/><path fill="#000d85" stroke="#000850" d="M3213 4477l10 22 23-14-11-21z"/><path fill="#0bb2a6" stroke="#076b63" d="M2560 3662l-25-17-16 15 25 15z"/><path fill="#000cb8" stroke="#00076f" d="M2764 3765l-9-21-14 4 11 21z"/><path fill="#000067" stroke="#00003e" d="M3191 4377l7 15 28-9-7-15z"/><path fill="#39551a" stroke="#22330f" d="M3249 4839l-6 18 14-43 4-20z"/><path fill="#0000d4" stroke="#00007f" d="M2875 3785l6-19-13-3-4 20z"/><path fill="#850000" stroke="#500000" d="M3563 3521l34 5-47-8-30-6z"/><path fill="#32be86" stroke="#1e7250" d="M2494 3647l-25-10-18 14 26 9z"/><path fill="#007bb2" stroke="#004a6b" d="M2620 3689l-21-21-16 13 23 19z"/><path fill="#0000be" stroke="#000072" d="M2794 3781l-5-20-13 2 7 20z"/><path fill="#000074" stroke="#000046" d="M3234 4259l-2 11 46-14 1-12z"/><path fill="#000d88" stroke="#000852" d="M3292 4205l-6 13 57-21 6-15z"/><path fill="#004c78" stroke="#002d48" d="M3241 4596l10 27 17-23-11-27z"/><path fill="#ea7a00" stroke="#8c4900" d="M2048 4667l-12 35 77-1 13-34z"/><path fill="#00aae6" stroke="#00668a" d="M3056 3690l25-23-20-5-22 23z"/><path fill="#0020e1" stroke="#001387" d="M2941 3760l14-20-14-4-13 20z"/><path fill="#003de4" stroke="#002589" d="M2968 3744l16-20-15-5-14 21z"/><path fill="#0032b1" stroke="#001e6a" d="M2702 3737l-15-22-14 8 17 21z"/><path fill="#d95b00" stroke="#823700" d="M2094 4770l-5 33 88-19 7-33z"/><path fill="#001cb3" stroke="#00116b" d="M2729 3752l-13-21-14 6 14 21z"/><path fill="#f6ec00" stroke="#938e00" d="M2063 4517l-14 30 43 22 14-30z"/><path fill="#2be5b3" stroke="#1a896b" d="M3128 3648l30-23-23-4-28 23z"/><path fill="#004e80" stroke="#002f4d" d="M3376 4133l-11 17 67-33 11-20z"/><path fill="#0000d7" stroke="#000081" d="M2886 3787l8-18-13-3-6 19z"/><path fill="#00005c" stroke="#000037" d="M3198 4305l2 11 36-10-3-12z"/><path fill="#0000bb" stroke="#000070" d="M2783 3783l-7-20-12 2 8 20z"/><path fill="#0007de" stroke="#000485" d="M2917 3775l11-19-13-4-10 20z"/><path fill="#000086" stroke="#000050" d="M3203 4457l10 20 22-13-11-20z"/><path fill="#00005f" stroke="#000039" d="M3185 4364l6 13 28-9-7-14z"/><path fill="#aab606" stroke="#666d04" d="M2343 4865l10 16 57-16-6-18z"/><path fill="#0048b0" stroke="#002b6a" d="M2673 3723l-18-23-14 10 19 21z"/><path fill="#0009b5" stroke="#00056d" d="M2752 3769l-11-21-12 4 11 21z"/><path fill="#005ee6" stroke="#00398a" d="M2998 3729l20-22-16-5-18 22z"/><path fill="#0000b8" stroke="#00006f" d="M2839 3798l2-18-12-1 0 19z"/><path fill="#0000b5" stroke="#00006d" d="M2829 3798l0-19-12 0 2 19z"/><path fill="#55c86c" stroke="#337841" d="M2427 3646l-22 0-22 11 23 1z"/><path fill="#19684c" stroke="#0f3e2d" d="M3255 4715l5 28 14-35-6-28z"/><path fill="#0000bb" stroke="#000070" d="M2849 3799l3-18-11-1-2 18z"/><path fill="#0000b2" stroke="#00006b" d="M2819 3798l-2-19-12 1 3 18z"/><path fill="#85fc6f" stroke="#509743" d="M2119 4357l-8 22-1 34 7-22z"/><path fill="#2a7446" stroke="#19462a" d="M3484 4030l-14 24 69-48 15-27z"/><path fill="#0000be" stroke="#000072" d="M2859 3800l5-17-12-2-3 18z"/><path fill="#0000db" stroke="#000083" d="M2896 3790l9-18-11-3-8 18z"/><path fill="#0000b0" stroke="#000069" d="M2808 3798l-3-18-11 1 4 18z"/><path fill="#000075" stroke="#000046" d="M3236 4248l-2 11 45-15 3-13z"/><path fill="#0000b8" stroke="#00006e" d="M2772 3785l-8-20-12 4 9 19z"/><path fill="#0091b2" stroke="#00576b" d="M2583 3681l-23-19-16 13 25 17z"/><path fill="#530300" stroke="#320200" d="M3683 3725l-6 34 17-53 3-34z"/><path fill="#003d7a" stroke="#002549" d="M3230 4569l11 27 16-23-11-26z"/><path fill="#00007e" stroke="#00004c" d="M3193 4438l10 19 21-13-10-19z"/><path fill="#665300" stroke="#3d3200" d="M3602 3889l-16 32 54-59 15-33z"/><path fill="#7fe15a" stroke="#4c8736" d="M3215 3606l38-23-30-3-33 21z"/><path fill="#000057" stroke="#000034" d="M3180 4351l5 13 27-10-5-14z"/><path fill="#005eaf" stroke="#003869" d="M2641 3710l-21-21-14 11 22 20z"/><path fill="#000058" stroke="#000035" d="M3197 4294l1 11 35-11-1-12z"/><path fill="#0000be" stroke="#000072" d="M2869 3802l6-17-11-2-5 17z"/><path fill="#cc7a00" stroke="#7a4900" d="M2174 4815l0 29 84-26 3-29z"/><path fill="#c19b00" stroke="#745d00" d="M2260 4845l5 23 72-23-2-25z"/><path fill="#0000ad" stroke="#000068" d="M2798 3799l-4-18-11 2 6 18z"/><path fill="#001586" stroke="#000d51" d="M3298 4192l-6 13 57-23 7-15z"/><path fill="#0087e7" stroke="#00518b" d="M3033 3712l23-22-17-5-21 22z"/><path fill="#d49700" stroke="#7f5b00" d="M3363 3547l42-17-39-1-37 14z"/><path fill="#1eb794" stroke="#126e59" d="M2519 3660l-25-13-17 13 26 12z"/><path fill="#0024e4" stroke="#001689" d="M2952 3764l16-20-13-4-14 20z"/><path fill="#0008e1" stroke="#000587" d="M2928 3778l13-18-13-4-11 19z"/><path fill="#001cb0" stroke="#00116a" d="M2716 3758l-14-21-12 7 15 19z"/><path fill="#0009b2" stroke="#00056b" d="M2740 3773l-11-21-13 6 14 19z"/><path fill="#88b426" stroke="#526c17" d="M2410 4865l10 12 49-8-7-15z"/><path fill="#08dad7" stroke="#058381" d="M3099 3672l29-24-21-4-26 23z"/><path fill="#0000c0" stroke="#000073" d="M2879 3804l7-17-11-2-6 17z"/><path fill="#0031ae" stroke="#001e68" d="M2690 3744l-17-21-13 8 18 20z"/><path fill="#0000de" stroke="#000085" d="M2906 3792l11-17-12-3-9 18z"/><path fill="#0041e6" stroke="#00278a" d="M2980 3749l18-20-14-5-16 20z"/><path fill="#0000aa" stroke="#000066" d="M2789 3801l-6-18-11 2 7 18z"/><path fill="#0000b5" stroke="#00006c" d="M2761 3788l-9-19-12 4 11 18z"/><path fill="#000072" stroke="#000045" d="M3185 4421l8 17 21-13-8-17z"/><path fill="#dcf915" stroke="#84960d" d="M2077 4489l-14 28 43 22 13-28z"/><path fill="#000051" stroke="#000031" d="M3176 4339l4 12 27-11-4-12z"/><path fill="#e99c00" stroke="#8c5e00" d="M2062 4633l-14 34 78 0 14-33z"/><path fill="#00597e" stroke="#00364c" d="M3387 4115l-11 18 67-36 13-21z"/><path fill="#345921" stroke="#1f3514" d="M3251 4816l-2 23 12-45 1-24z"/><path fill="#0000a6" stroke="#000064" d="M2838 3815l1-17-10 0 0 16z"/><path fill="#0000a4" stroke="#000062" d="M2829 3814l0-16-10 0 1 16z"/><path fill="#70b23c" stroke="#436b24" d="M2469 4869l10 9 42-1-8-10z"/><path fill="#002d7b" stroke="#001b4a" d="M3219 4543l11 26 16-22-12-25z"/><path fill="#000057" stroke="#000034" d="M3197 4283l0 11 35-12 0-12z"/><path fill="#0000a9" stroke="#000065" d="M2846 3815l3-16-10-1-1 17z"/><path fill="#0000a1" stroke="#000061" d="M2820 3814l-1-16-11 0 3 17z"/><path fill="#b20800" stroke="#6b0500" d="M3524 3522l39-1-43-9-35 0z"/><path fill="#000078" stroke="#000048" d="M3240 4236l-4 12 46-17 4-13z"/><path fill="#60ae48" stroke="#3a682b" d="M2521 4877l11 5 38 6-10-5z"/><path fill="#0000c3" stroke="#000075" d="M2888 3806l8-16-10-3-7 17z"/><path fill="#0d6b5b" stroke="#084036" d="M3248 4686l7 29 13-35-8-28z"/><path fill="#0076ae" stroke="#004768" d="M2606 3700l-23-19-14 11 24 18z"/><path fill="#43bf76" stroke="#287347" d="M2451 3651l-24-5-21 12 26 5z"/><path fill="#7bfc78" stroke="#4a9748" d="M2124 4336l-5 21-2 34 6-22z"/><path fill="#0000a7" stroke="#000064" d="M2779 3803l-7-18-11 3 9 17z"/><path fill="#0000ac" stroke="#000067" d="M2855 3816l4-16-10-1-3 16z"/><path fill="#da7900" stroke="#834800" d="M2102 4735l-8 35 90-19 10-33z"/><path fill="#0044ac" stroke="#002967" d="M2660 3731l-19-21-13 10 20 19z"/><path fill="#00009f" stroke="#00005f" d="M2811 3815l-3-17-10 1 5 17z"/><path fill="#0063e8" stroke="#003b8b" d="M3011 3734l22-22-15-5-20 22z"/><path fill="#0008e4" stroke="#000589" d="M2938 3782l14-18-11-4-13 18z"/><path fill="#000066" stroke="#00003d" d="M3178 4405l7 16 21-13-8-16z"/><path fill="#59e484" stroke="#35894f" d="M3180 3630l35-24-25-5-32 24z"/><path fill="#0009af" stroke="#000569" d="M2730 3777l-14-19-11 5 15 19z"/><path fill="#0000e1" stroke="#000087" d="M2916 3796l12-18-11-3-11 17z"/><path fill="#0000ab" stroke="#000066" d="M2864 3818l5-16-10-2-4 16z"/><path fill="#0000b2" stroke="#00006b" d="M2751 3791l-11-18-10 4 12 18z"/><path fill="#00009c" stroke="#00005e" d="M2803 3816l-5-17-9 2 5 16z"/><path fill="#00004b" stroke="#00002d" d="M3173 4327l3 12 27-11-3-12z"/><path fill="#08aaa3" stroke="#056662" d="M2544 3675l-25-15-16 12 27 15z"/><path fill="#00afe8" stroke="#00698b" d="M3071 3696l28-24-18-5-25 23z"/><path fill="#001d84" stroke="#00124f" d="M3306 4177l-8 15 58-25 9-17z"/><path fill="#001bad" stroke="#001068" d="M2705 3763l-15-19-12 7 17 18z"/><path fill="#0025e7" stroke="#00168a" d="M2963 3768l17-19-12-5-16 20z"/><path fill="#377338" stroke="#214522" d="M3500 4005l-16 25 70-51 16-28z"/><path fill="#0000c6" stroke="#000077" d="M2896 3809l10-17-10-2-8 16z"/><path fill="#0000a4" stroke="#000063" d="M2770 3805l-9-17-10 3 10 17z"/><path fill="#a9bf10" stroke="#65730a" d="M2337 4845l6 20 61-18-3-22z"/><path fill="#001d7c" stroke="#00124b" d="M3208 4519l11 24 15-21-11-23z"/><path fill="#0000ad" stroke="#000068" d="M2872 3819l7-15-10-2-5 16z"/><path fill="#00009a" stroke="#00005c" d="M2794 3817l-5-16-10 2 7 16z"/><path fill="#d9cb00" stroke="#827a00" d="M3320 3567l43-20-34-4-38 18z"/><path fill="#000058" stroke="#000035" d="M3198 4272l-1 11 35-13 2-11z"/><path fill="#00005c" stroke="#000037" d="M3171 4390l7 15 20-13-7-15z"/><path fill="#440000" stroke="#290000" d="M3650 3568l22 19-25-31-21-18z"/><path fill="#002eaa" stroke="#001b66" d="M2678 3751l-18-20-12 8 19 19z"/><path fill="#005cab" stroke="#003767" d="M2628 3720l-22-20-13 10 23 19z"/><path fill="#00007b" stroke="#00004a" d="M3245 4224l-5 12 46-18 6-13z"/><path fill="#000094" stroke="#000059" d="M2836 3830l2-15-9-1 0 15z"/><path fill="#000092" stroke="#000058" d="M2829 3829l0-15-9 0 1 15z"/><path fill="#000047" stroke="#00002b" d="M3171 4316l2 11 27-11-2-11z"/><path fill="#0042e8" stroke="#00288b" d="M2991 3754l20-20-13-5-18 20z"/><path fill="#c6f92b" stroke="#77961a" d="M2089 4462l-12 27 42 22 12-26z"/><path fill="#cf9400" stroke="#7c5900" d="M2177 4784l-3 31 87-26 6-32z"/><path fill="#0000b0" stroke="#000069" d="M2880 3821l8-15-9-2-7 15z"/><path fill="#000097" stroke="#00005a" d="M2844 3830l2-15-8 0-2 15z"/><path fill="#000090" stroke="#000056" d="M2821 3829l-1-15-9 1 3 15z"/><path fill="#000097" stroke="#00005b" d="M2786 3819l-7-16-9 2 8 16z"/><path fill="#0000e4" stroke="#000089" d="M2925 3799l13-17-10-4-12 18z"/><path fill="#0000ae" stroke="#000069" d="M2742 3795l-12-18-10 5 13 17z"/><path fill="#c7b100" stroke="#786a00" d="M2258 4818l2 27 75-25 1-28z"/><path fill="#01656a" stroke="#013c3f" d="M3240 4657l8 29 12-34-9-29z"/><path fill="#000099" stroke="#00005c" d="M2851 3831l4-15-9-1-2 15z"/><path fill="#664300" stroke="#3d2800" d="M3615 3857l-13 32 53-60 13-35z"/><path fill="#00008e" stroke="#000055" d="M2814 3830l-3-15-8 1 3 15z"/><path fill="#e9be00" stroke="#8c7200" d="M2077 4600l-15 33 78 1 14-32z"/><path fill="#0000c9" stroke="#000078" d="M2905 3811l11-15-10-4-10 17z"/><path fill="#008be9" stroke="#00548c" d="M3046 3718l25-22-15-6-23 22z"/><path fill="#0000a2" stroke="#000061" d="M2761 3808l-10-17-9 4 11 16z"/><path fill="#34e6ab" stroke="#1f8a67" d="M3146 3655l34-25-22-5-30 23z"/><path fill="#30b781" stroke="#1d6e4e" d="M2477 3660l-26-9-19 12 28 8z"/><path fill="#00107d" stroke="#000a4b" d="M3198 4497l10 22 15-20-10-22z"/><path fill="#0008ac" stroke="#000567" d="M2720 3782l-15-19-10 6 15 18z"/><path fill="#000be6" stroke="#00078a" d="M2948 3786l15-18-11-4-14 18z"/><path fill="#00667d" stroke="#003d4b" d="M3400 4095l-13 20 69-39 14-22z"/><path fill="#000054" stroke="#000032" d="M3165 4376l6 14 20-13-6-13z"/><path fill="#4b0000" stroke="#2d0000" d="M3683 3693l0 32 14-53-1-32z"/><path fill="#75fb7e" stroke="#46974c" d="M2128 4316l-4 20-1 33 3-21z"/><path fill="#008ead" stroke="#005568" d="M2569 3692l-25-17-14 12 26 16z"/><path fill="#69c758" stroke="#3f7735" d="M2383 3657l-21 5-27 6 23-3z"/><path fill="#00009b" stroke="#00005d" d="M2858 3832l6-14-9-2-4 15z"/><path fill="#00008c" stroke="#000054" d="M2806 3831l-3-15-9 1 5 15z"/><path fill="#0000b2" stroke="#00006b" d="M2887 3823l9-14-8-3-8 15z"/><path fill="#2f5d2b" stroke="#1c381a" d="M3250 4790l1 26 11-46-2-27z"/><path fill="#000095" stroke="#000059" d="M2778 3821l-8-16-9 3 9 15z"/><path fill="#89bf30" stroke="#52731d" d="M2404 4847l6 18 52-11-5-19z"/><path fill="#000059" stroke="#000035" d="M3200 4262l-2 10 36-13 2-11z"/><path fill="#c52b00" stroke="#761a00" d="M3481 3530l43-8-39-10-38 7z"/><path fill="#00009d" stroke="#00005e" d="M2865 3833l7-14-8-1-6 14z"/><path fill="#0018a9" stroke="#000f65" d="M2695 3769l-17-18-11 7 18 17z"/><path fill="#db9c00" stroke="#835e00" d="M2113 4701l-11 34 92-17 11-34z"/><path fill="#000044" stroke="#000029" d="M3170 4305l1 11 27-11-1-11z"/><path fill="#000089" stroke="#000052" d="M2799 3832l-5-15-8 2 6 14z"/><path fill="#002583" stroke="#00164e" d="M3316 4162l-10 15 59-27 11-17z"/><path fill="#0042a9" stroke="#002865" d="M2648 3739l-20-19-12 9 22 18z"/><path fill="#0025e8" stroke="#00168b" d="M2973 3773l18-19-11-5-17 19z"/><path fill="#00027d" stroke="#00014b" d="M3189 4476l9 21 15-20-10-20z"/><path fill="#00004b" stroke="#00002d" d="M3161 4363l4 13 20-12-5-13z"/><path fill="#b3de24" stroke="#6c8516" d="M3278 3590l42-23-29-6-38 22z"/><path fill="#0000cb" stroke="#00007a" d="M2913 3815l12-16-9-3-11 15z"/><path fill="#00009f" stroke="#00005f" d="M2753 3811l-11-16-9 4 12 15z"/><path fill="#0067e9" stroke="#003e8c" d="M3023 3739l23-21-13-6-22 22z"/><path fill="#00009f" stroke="#000060" d="M2872 3835l8-14-8-2-7 14z"/><path fill="#000081" stroke="#00004d" d="M3251 4212l-6 12 47-19 6-13z"/><path fill="#0000ab" stroke="#000067" d="M2733 3799l-13-17-10 5 15 16z"/><path fill="#0000e6" stroke="#00008a" d="M2933 3803l15-17-10-4-13 17z"/><path fill="#000087" stroke="#000051" d="M2792 3833l-6-14-8 2 7 14z"/><path fill="#0000b4" stroke="#00006c" d="M2894 3826l11-15-9-2-9 14z"/><path fill="#000086" stroke="#000050" d="M2835 3843l1-13-7-1 0 14z"/><path fill="#000088" stroke="#000051" d="M2829 3843l0-14-8 0 2 14z"/><path fill="#0ee2d2" stroke="#08877e" d="M3115 3679l31-24-18-7-29 24z"/><path fill="#000092" stroke="#000058" d="M2770 3823l-9-15-8 3 10 15z"/><path fill="#74c046" stroke="#45732a" d="M2462 4854l7 15 44-2-5-16z"/><path fill="#000088" stroke="#000052" d="M2841 3843l3-13-8 0-1 13z"/><path fill="#000086" stroke="#000050" d="M2823 3843l-2-14-7 1 2 13z"/><path fill="#005571" stroke="#003344" d="M3230 4628l10 29 11-34-10-27z"/><path fill="#0070aa" stroke="#004366" d="M2593 3710l-24-18-13 11 25 17z"/><path fill="#00008a" stroke="#000053" d="M2848 3844l3-13-7-1-3 13z"/><path fill="#000084" stroke="#00004f" d="M2816 3843l-2-13-8 1 4 13z"/><path fill="#61b951" stroke="#3a6f31" d="M2560 4883l10 5 36 13-9-5z"/><path fill="#b3f93e" stroke="#6b9525" d="M2100 4437l-11 25 42 23 10-25z"/><path fill="#1db18f" stroke="#116a56" d="M2503 3672l-26-12-17 11 28 12z"/><path fill="#0006a8" stroke="#000365" d="M2710 3787l-15-18-10 6 17 17z"/><path fill="#67be51" stroke="#3e7231" d="M2513 4867l8 10 39 6-6-11z"/><path fill="#00007a" stroke="#000049" d="M3180 4457l9 19 14-19-10-19z"/><path fill="#002da7" stroke="#001b64" d="M2667 3758l-19-19-10 8 20 18z"/><path fill="#000042" stroke="#000028" d="M3170 4295l0 10 27-11 0-11z"/><path fill="#000be8" stroke="#00078b" d="M2956 3791l17-18-10-5-15 18z"/><path fill="#45722a" stroke="#294519" d="M3516 3978l-16 27 70-54 16-30z"/><path fill="#0000a1" stroke="#000061" d="M2879 3837l8-14-7-2-8 14z"/><path fill="#00008c" stroke="#000054" d="M2854 3845l4-13-7-1-3 13z"/><path fill="#000046" stroke="#00002a" d="M3157 4351l4 12 19-12-4-12z"/><path fill="#000082" stroke="#00004e" d="M2810 3844l-4-13-7 1 5 13z"/><path fill="#000085" stroke="#000050" d="M2785 3835l-7-14-8 2 9 14z"/><path fill="#00005c" stroke="#000037" d="M3204 4251l-4 11 36-14 4-12z"/><path fill="#a0c620" stroke="#607713" d="M2335 4820l2 25 64-20 0-26z"/><path fill="#e5dc00" stroke="#898400" d="M2092 4569l-15 31 77 2 13-30z"/><path fill="#0046ea" stroke="#002a8c" d="M3002 3759l21-20-12-5-20 20z"/><path fill="#00008d" stroke="#000055" d="M2860 3846l5-13-7-1-4 13z"/><path fill="#000080" stroke="#00004d" d="M2804 3845l-5-13-7 1 6 13z"/><path fill="#59bf60" stroke="#35733a" d="M2406 3658l-23-1-25 8 27 1z"/><path fill="#d1b100" stroke="#7e6a00" d="M2184 4751l-7 33 90-27 8-32z"/><path fill="#71f981" stroke="#44964d" d="M2130 4296l-2 20-2 32 2-20z"/><path fill="#0000b6" stroke="#00006d" d="M2901 3829l12-14-8-4-11 15z"/><path fill="#00008f" stroke="#000056" d="M2763 3826l-10-15-8 3 11 15z"/><path fill="#00009c" stroke="#00005d" d="M2745 3814l-12-15-8 4 13 15z"/><path fill="#0000d1" stroke="#00007d" d="M2920 3818l13-15-8-4-12 16z"/><path fill="#00b7e9" stroke="#006e8c" d="M3085 3702l30-23-16-7-28 24z"/><path fill="#5d0000" stroke="#380000" d="M3620 3555l30 13-24-30-29-12z"/><path fill="#0057a7" stroke="#003464" d="M2616 3729l-23-19-12 10 24 18z"/><path fill="#00006f" stroke="#000042" d="M3172 4439l8 18 13-19-8-17z"/><path fill="#8be24f" stroke="#548730" d="M3237 3614l41-24-25-7-38 23z"/><path fill="#0000a3" stroke="#000062" d="M2885 3839l9-13-7-3-8 14z"/><path fill="#000083" stroke="#00004e" d="M2779 3837l-9-14-7 3 10 13z"/><path fill="#047473" stroke="#034645" d="M3414 4074l-14 21 70-41 14-24z"/><path fill="#becb07" stroke="#727a04" d="M2261 4789l-3 29 78-26 5-30z"/><path fill="#00008f" stroke="#000056" d="M2865 3847l7-12-7-2-5 13z"/><path fill="#00007e" stroke="#00004b" d="M2798 3846l-6-13-7 2 7 12z"/><path fill="#0000a8" stroke="#000065" d="M2725 3803l-15-16-8 5 15 16z"/><path fill="#0018a6" stroke="#000e63" d="M2685 3775l-18-17-9 7 19 17z"/><path fill="#0000e8" stroke="#00008b" d="M2941 3807l15-16-8-5-15 17z"/><path fill="#000040" stroke="#000026" d="M3154 4340l3 11 19-12-3-12z"/><path fill="#004672" stroke="#002a45" d="M3220 4600l10 28 11-32-11-27z"/><path fill="#003181" stroke="#001d4d" d="M3326 4146l-10 16 60-29 11-18z"/><path fill="#276137" stroke="#173a21" d="M3247 4761l3 29 10-47-5-28z"/><path fill="#0029ea" stroke="#00198c" d="M2982 3778l20-19-11-5-18 19z"/><path fill="#dbbc00" stroke="#847100" d="M2126 4667l-13 34 92-17 13-32z"/><path fill="#00007b" stroke="#00004a" d="M2834 3855l1-12-6 0 0 12z"/><path fill="#000079" stroke="#000049" d="M2829 3855l0-12-6 0 1 12z"/><path fill="#ce5700" stroke="#7c3400" d="M3435 3542l46-12-34-11-42 11z"/><path fill="#000084" stroke="#00004f" d="M3258 4199l-7 13 47-20 8-15z"/><path fill="#000043" stroke="#000028" d="M3171 4285l-1 10 27-12 1-11z"/><path fill="#08a59f" stroke="#05635f" d="M2530 3687l-27-15-15 11 28 14z"/><path fill="#00007d" stroke="#00004b" d="M2839 3855l2-12-6 0-1 12z"/><path fill="#000078" stroke="#000048" d="M2824 3855l-1-12-7 0 3 12z"/><path fill="#00007e" stroke="#00004c" d="M2844 3856l4-12-7-1-2 12z"/><path fill="#000076" stroke="#000047" d="M2819 3855l-3-12-6 1 3 12z"/><path fill="#000091" stroke="#000057" d="M2871 3849l8-12-7-2-7 12z"/><path fill="#00007c" stroke="#00004a" d="M2792 3847l-7-12-6 2 8 12z"/><path fill="#0090ea" stroke="#00568c" d="M3058 3725l27-23-14-6-25 22z"/><path fill="#673600" stroke="#3e2000" d="M3626 3824l-11 33 53-63 9-35z"/><path fill="#000062" stroke="#00003b" d="M3164 4422l8 17 13-18-7-16z"/><path fill="#00008d" stroke="#000054" d="M2756 3829l-11-15-7 4 12 14z"/><path fill="#0000bc" stroke="#000071" d="M2907 3832l13-14-7-3-12 14z"/><path fill="#00005f" stroke="#000039" d="M3208 4240l-4 11 36-15 5-12z"/><path fill="#0000a5" stroke="#000063" d="M2891 3841l10-12-7-3-9 13z"/><path fill="#000080" stroke="#00004d" d="M2773 3839l-10-13-7 3 11 12z"/><path fill="#000080" stroke="#00004d" d="M2849 3857l5-12-6-1-4 12z"/><path fill="#000074" stroke="#000046" d="M2813 3856l-3-12-6 1 5 11z"/><path fill="#0041a5" stroke="#002763" d="M2638 3747l-22-18-11 9 23 17z"/><path fill="#80c741" stroke="#4d7827" d="M2401 4825l3 22 53-12-1-24z"/><path fill="#0005a5" stroke="#000363" d="M2702 3792l-17-17-8 7 17 16z"/><path fill="#a3f94e" stroke="#62952f" d="M2110 4413l-10 24 41 23 9-24z"/><path fill="#000096" stroke="#00005a" d="M2738 3818l-13-15-8 5 14 14z"/><path fill="#4a0000" stroke="#2c0000" d="M3676 3664l7 29 13-53-8-29z"/><path fill="#0000d2" stroke="#00007e" d="M2926 3821l15-14-8-4-13 15z"/><path fill="#000bea" stroke="#00078c" d="M2964 3795l18-17-9-5-17 18z"/><path fill="#00003c" stroke="#000024" d="M3152 4329l2 11 19-13-2-11z"/><path fill="#000081" stroke="#00004e" d="M2854 3858l6-12-6-1-5 12z"/><path fill="#000073" stroke="#000045" d="M2809 3856l-5-11-6 1 6 11z"/><path fill="#62e47c" stroke="#3b894a" d="M3198 3638l39-24-22-8-35 24z"/><path fill="#000092" stroke="#000058" d="M2876 3851l9-12-6-2-8 12z"/><path fill="#000077" stroke="#000047" d="M2787 3849l-8-12-6 2 9 12z"/><path fill="#003974" stroke="#002245" d="M3210 4573l10 27 10-31-11-26z"/><path fill="#45b86d" stroke="#296e41" d="M2432 3663l-26-5-21 8 28 5z"/><path fill="#cae817" stroke="#798b0e" d="M2106 4539l-14 30 75 3 13-28z"/><path fill="#006beb" stroke="#00408d" d="M3034 3746l24-21-12-7-23 21z"/><path fill="#000058" stroke="#000035" d="M3158 4407l6 15 14-17-7-15z"/><path fill="#000083" stroke="#00004e" d="M2859 3859l6-12-5-1-6 12z"/><path fill="#000071" stroke="#000044" d="M2804 3857l-6-11-6 1 7 12z"/><path fill="#008aa9" stroke="#005365" d="M2556 3703l-26-16-14 10 28 16z"/><path fill="#002ca3" stroke="#001a62" d="M2658 3765l-20-18-10 8 21 17z"/><path fill="#000044" stroke="#000029" d="M3174 4275l-3 10 27-13 2-10z"/><path fill="#0000a4" stroke="#000063" d="M2717 3808l-15-16-8 6 16 15z"/><path fill="#00007e" stroke="#00004c" d="M2767 3841l-11-12-6 3 12 12z"/><path fill="#0000a6" stroke="#000064" d="M2896 3844l11-12-6-3-10 12z"/><path fill="#0000e9" stroke="#00008c" d="M2948 3811l16-16-8-4-15 16z"/><path fill="#000087" stroke="#000051" d="M2750 3832l-12-14-7 4 14 13z"/><path fill="#0000bd" stroke="#000071" d="M2913 3835l13-14-6-3-13 14z"/><path fill="#000094" stroke="#000059" d="M2881 3853l10-12-6-2-9 12z"/><path fill="#000075" stroke="#000046" d="M2782 3851l-9-12-6 2 10 12z"/><path fill="#000084" stroke="#00004f" d="M2863 3860l8-11-6-2-6 12z"/><path fill="#c7d005" stroke="#787d03" d="M2194 4718l-10 33 91-26 10-32z"/><path fill="#000070" stroke="#000043" d="M2799 3859l-7-12-5 2 8 11z"/><path fill="#6dca56" stroke="#427934" d="M2457 4835l5 19 46-3-3-20z"/><path fill="#000074" stroke="#000045" d="M2833 3866l1-11-5 0 0 11z"/><path fill="#000072" stroke="#000045" d="M2829 3866l0-11-5 0 1 11z"/><path fill="#0046eb" stroke="#002a8d" d="M3011 3765l23-19-11-7-21 20z"/><path fill="#000075" stroke="#000046" d="M2837 3866l2-11-5 0-1 11z"/><path fill="#000071" stroke="#000044" d="M2825 3866l-1-11-5 0 2 11z"/><path fill="#92cb33" stroke="#577a1e" d="M2336 4792l-1 28 66-21 3-29z"/><path fill="#45540d" stroke="#293308" d="M3240 4873l-4 21 13-55 2-23z"/><path fill="#3ae7a6" stroke="#238a63" d="M3162 3663l36-25-18-8-34 25z"/><path fill="#000076" stroke="#000047" d="M2841 3866l3-10-5-1-2 11z"/><path fill="#000050" stroke="#000030" d="M3153 4393l5 14 13-17-6-14z"/><path fill="#00006f" stroke="#000043" d="M2821 3866l-2-11-6 1 4 10z"/><path fill="#000682" stroke="#00044e" d="M3267 4185l-9 14 48-22 10-15z"/><path fill="#53721b" stroke="#324410" d="M3531 3949l-15 29 70-57 16-32z"/><path fill="#0017a2" stroke="#000e61" d="M2677 3782l-19-17-9 7 20 16z"/><path fill="#d58c00" stroke="#805400" d="M3389 3559l46-17-30-12-42 17z"/><path fill="#002a75" stroke="#001946" d="M3200 4548l10 25 9-30-11-24z"/><path fill="#1d6545" stroke="#113d29" d="M3241 4732l6 29 8-46-7-29z"/><path fill="#000065" stroke="#00003c" d="M3214 4229l-6 11 37-16 6-12z"/><path fill="#ccdb08" stroke="#7b8305" d="M2140 4634l-14 33 92-15 13-31z"/><path fill="#000077" stroke="#000048" d="M2845 3867l4-10-5-1-3 10z"/><path fill="#00006e" stroke="#000042" d="M2817 3866l-4-10-4 0 4 11z"/><path fill="#000093" stroke="#000058" d="M2731 3822l-14-14-7 5 16 13z"/><path fill="#006da5" stroke="#004263" d="M2581 3720l-25-17-12 10 26 16z"/><path fill="#000085" stroke="#000050" d="M2867 3861l9-10-5-2-8 11z"/><path fill="#00006e" stroke="#000042" d="M2795 3860l-8-11-5 2 8 10z"/><path fill="#a8ce1f" stroke="#657b12" d="M2267 4757l-6 32 80-27 7-31z"/><path fill="#0000d4" stroke="#00007f" d="M2932 3825l16-14-7-4-15 14z"/><path fill="#003c80" stroke="#00244d" d="M3338 4129l-12 17 61-31 13-20z"/><path fill="#0029eb" stroke="#00198d" d="M2990 3784l21-19-9-6-20 19z"/><path fill="#66cc5f" stroke="#3d7a39" d="M2508 4851l5 16 41 5-5-16z"/><path fill="#000079" stroke="#000048" d="M2849 3868l5-10-5-1-4 10z"/><path fill="#00006d" stroke="#000041" d="M2813 3867l-4-11-5 1 5 11z"/><path fill="#117a66" stroke="#0a493d" d="M3428 4052l-14 22 70-44 16-25z"/><path fill="#00007c" stroke="#00004a" d="M2762 3844l-12-12-5 3 12 12z"/><path fill="#000073" stroke="#000045" d="M2777 3853l-10-12-5 3 11 11z"/><path fill="#000095" stroke="#000059" d="M2885 3855l11-11-5-3-10 12z"/><path fill="#0000a7" stroke="#000064" d="M2901 3847l12-12-6-3-11 12z"/><path fill="#65c95e" stroke="#3d7938" d="M2554 4872l6 11 37 13-6-10z"/><path fill="#7e0000" stroke="#4c0000" d="M3585 3549l35 6-23-29-34-5z"/><path fill="#96f85a" stroke="#5a9536" d="M2117 4391l-7 22 40 23 7-22z"/><path fill="#31b17b" stroke="#1d6a4a" d="M2460 3671l-28-8-19 8 30 9z"/><path fill="#0005a2" stroke="#000361" d="M2694 3798l-17-16-8 6 18 15z"/><path fill="#00007a" stroke="#000049" d="M2852 3869l7-10-5-1-5 10z"/><path fill="#00006b" stroke="#000040" d="M2809 3868l-5-11-5 2 6 9z"/><path fill="#000048" stroke="#00002b" d="M3148 4379l5 14 12-17-4-13z"/><path fill="#11e6d0" stroke="#0a8a7d" d="M3128 3687l34-24-16-8-31 24z"/><path fill="#000048" stroke="#00002b" d="M3177 4265l-3 10 26-13 4-11z"/><path fill="#000086" stroke="#000051" d="M2871 3863l10-10-5-2-9 10z"/><path fill="#00006c" stroke="#000041" d="M2790 3861l-8-10-5 2 10 10z"/><path fill="#000085" stroke="#000050" d="M2745 3835l-14-13-5 4 14 13z"/><path fill="#000ceb" stroke="#00078d" d="M2971 3800l19-16-8-6-18 17z"/><path fill="#0000be" stroke="#000072" d="M2918 3838l14-13-6-4-13 14z"/><path fill="#0055a3" stroke="#003362" d="M2605 3738l-24-18-11 9 26 17z"/><path fill="#001c75" stroke="#001146" d="M3190 4524l10 24 8-29-10-22z"/><path fill="#b2e72e" stroke="#6b8b1c" d="M2119 4511l-13 28 74 5 12-27z"/><path fill="#00007b" stroke="#00004a" d="M2856 3870l7-10-4-1-7 10z"/><path fill="#00006a" stroke="#000040" d="M2805 3868l-6-9-4 1 7 10z"/><path fill="#0000a1" stroke="#000061" d="M2710 3813l-16-15-7 5 18 14z"/><path fill="#000071" stroke="#000044" d="M2773 3855l-11-11-5 3 12 10z"/><path fill="#000096" stroke="#00005a" d="M2889 3857l12-10-5-3-11 11z"/><path fill="#0000eb" stroke="#00008d" d="M2954 3816l17-16-7-5-16 16z"/><path fill="#00bbea" stroke="#00708c" d="M3097 3710l31-23-13-8-30 23z"/><path fill="#71cd55" stroke="#447b33" d="M2401 4799l0 26 55-14 2-26z"/><path fill="#00006b" stroke="#000040" d="M2787 3863l-10-10-4 2 10 10z"/><path fill="#000087" stroke="#000051" d="M2875 3865l10-10-4-2-10 10z"/><path fill="#00006c" stroke="#000041" d="M2832 3875l1-9-4 0 0 9z"/><path fill="#00006b" stroke="#000040" d="M2829 3875l0-9-4 0 1 9z"/><path fill="#00007c" stroke="#00004a" d="M2859 3871l8-10-4-1-7 10z"/><path fill="#000069" stroke="#00003f" d="M2802 3870l-7-10-5 1 9 10z"/><path fill="#00006d" stroke="#000041" d="M2835 3875l2-9-4 0-1 9z"/><path fill="#00006a" stroke="#00003f" d="M2826 3875l-1-9-4 0 2 9z"/><path fill="#00007a" stroke="#000049" d="M2757 3847l-12-12-5 4 13 11z"/><path fill="#003fa1" stroke="#002661" d="M2628 3755l-23-17-9 8 23 17z"/><path fill="#0000a8" stroke="#000065" d="M2905 3850l13-12-5-3-12 12z"/><path fill="#000042" stroke="#000028" d="M3145 4367l3 12 13-16-4-12z"/><path fill="#00006e" stroke="#000042" d="M2838 3876l3-10-4 0-2 9z"/><path fill="#000069" stroke="#00003f" d="M2823 3875l-2-9-4 0 3 10z"/><path fill="#dbc200" stroke="#837400" d="M3342 3579l47-20-26-12-43 20z"/><path fill="#000090" stroke="#000057" d="M2726 3826l-16-13-5 4 15 14z"/><path fill="#00006f" stroke="#000043" d="M2841 3876l4-9-4-1-3 10z"/><path fill="#000068" stroke="#00003e" d="M2820 3876l-3-10-4 1 4 9z"/><path fill="#0000d5" stroke="#000080" d="M2938 3829l16-13-6-5-16 14z"/><path fill="#add31f" stroke="#687f13" d="M2205 4684l-11 34 91-25 11-32z"/><path fill="#000f75" stroke="#000946" d="M3181 4502l9 22 8-27-9-21z"/><path fill="#1eac89" stroke="#126752" d="M2488 3683l-28-12-17 9 30 12z"/><path fill="#0090eb" stroke="#00568d" d="M3069 3732l28-22-12-8-27 23z"/><path fill="#682900" stroke="#3f1900" d="M3634 3791l-8 33 51-65 6-34z"/><path fill="#00006a" stroke="#000040" d="M3220 4217l-6 12 37-17 7-13z"/><path fill="#000070" stroke="#000043" d="M2843 3877l6-9-4-1-4 9z"/><path fill="#000067" stroke="#00003e" d="M2817 3876l-4-9-4 1 5 9z"/><path fill="#126852" stroke="#0b3e31" d="M3233 4701l8 31 7-46-8-29z"/><path fill="#00007d" stroke="#00004b" d="M2862 3872l9-9-4-2-8 10z"/><path fill="#000067" stroke="#00003e" d="M2799 3871l-9-10-3 2 9 9z"/><path fill="#002ba0" stroke="#001a60" d="M2649 3772l-21-17-9 8 23 16z"/><path fill="#b3db20" stroke="#6b8313" d="M2154 4602l-14 32 91-13 13-30z"/><path fill="#001080" stroke="#000a4d" d="M3276 4171l-9 14 49-23 10-16z"/><path fill="#4f0000" stroke="#2f0000" d="M3664 3638l12 26 12-53-16-24z"/><path fill="#000069" stroke="#00003f" d="M2783 3865l-10-10-4 2 11 10z"/><path fill="#000088" stroke="#000052" d="M2878 3867l11-10-4-2-10 10z"/><path fill="#000083" stroke="#00004e" d="M2740 3839l-14-13-6 5 15 11z"/><path fill="#000071" stroke="#000044" d="M2846 3877l6-8-3-1-6 9z"/><path fill="#000065" stroke="#00003d" d="M2814 3877l-5-9-4 0 6 9z"/><path fill="#00006f" stroke="#000043" d="M2769 3857l-12-10-4 3 12 10z"/><path fill="#000097" stroke="#00005a" d="M2893 3860l12-10-4-3-12 10z"/><path fill="#006beb" stroke="#00408d" d="M3043 3753l26-21-11-7-24 21z"/><path fill="#0000bf" stroke="#000073" d="M2923 3842l15-13-6-4-14 13z"/><path fill="#00004b" stroke="#00002d" d="M3181 4254l-4 11 27-14 4-11z"/><path fill="#7cce4b" stroke="#4b7b2d" d="M2341 4762l-5 30 68-22 6-30z"/><path fill="#00179f" stroke="#000e5f" d="M2669 3788l-20-16-7 7 20 15z"/><path fill="#8fcf39" stroke="#567c22" d="M2275 4725l-8 32 81-26 8-31z"/><path fill="#000071" stroke="#000044" d="M2849 3878l7-8-4-1-6 8z"/><path fill="#000064" stroke="#00003c" d="M2811 3877l-6-9-3 2 7 8z"/><path fill="#000066" stroke="#00003d" d="M2796 3872l-9-9-4 2 10 8z"/><path fill="#00007d" stroke="#00004b" d="M2865 3873l10-8-4-2-9 9z"/><path fill="#004aec" stroke="#002d8d" d="M3019 3772l24-19-9-7-23 19z"/><path fill="#000474" stroke="#000246" d="M3172 4482l9 20 8-26-9-19z"/><path fill="#8cf863" stroke="#54953c" d="M2123 4369l-6 22 40 23 5-21z"/><path fill="#71bf48" stroke="#44732b" d="M2358 3665l-23 3-29 3 27-2z"/><path fill="#000078" stroke="#000048" d="M2753 3850l-13-11-5 3 14 11z"/><path fill="#61d169" stroke="#3a7d3f" d="M2456 4811l1 24 48-4 0-25z"/><path fill="#0000a9" stroke="#000065" d="M2909 3853l14-11-5-4-13 12z"/><path fill="#00059e" stroke="#00035f" d="M2687 3803l-18-15-7 6 20 15z"/><path fill="#004a7e" stroke="#002c4c" d="M3351 4110l-13 19 62-34 14-21z"/><path fill="#0029ec" stroke="#00198d" d="M2997 3790l22-18-8-7-21 19z"/><path fill="#000072" stroke="#000045" d="M2851 3879l8-8-3-1-7 8z"/><path fill="#000063" stroke="#00003c" d="M2809 3878l-7-8-3 1 7 8z"/><path fill="#9ce642" stroke="#5e8a28" d="M2131 4485l-12 26 73 6 11-25z"/><path fill="#0aa398" stroke="#06625b" d="M2516 3697l-28-14-15 9 31 14z"/><path fill="#000068" stroke="#00003e" d="M2780 3867l-11-10-4 3 12 9z"/><path fill="#000089" stroke="#000052" d="M2881 3869l12-9-4-3-11 10z"/><path fill="#425814" stroke="#27350c" d="M3242 4848l-2 25 11-57-1-26z"/><path fill="#b9df1e" stroke="#6f8612" d="M3297 3602l45-23-22-12-42 23z"/><path fill="#000fec" stroke="#00098d" d="M2977 3806l20-16-7-6-19 16z"/><path fill="#00009e" stroke="#00005f" d="M2705 3817l-18-14-5 6 17 13z"/><path fill="#000065" stroke="#00003d" d="M2793 3873l-10-8-3 2 10 8z"/><path fill="#00007e" stroke="#00004c" d="M2868 3875l10-8-3-2-10 8z"/><path fill="#af0600" stroke="#690300" d="M3544 3548l41 1-22-28-39 1z"/><path fill="#000073" stroke="#000045" d="M2854 3880l8-8-3-1-8 8z"/><path fill="#000062" stroke="#00003b" d="M2806 3879l-7-8-3 1 8 8z"/><path fill="#00006e" stroke="#000042" d="M2765 3860l-12-10-4 3 13 10z"/><path fill="#00009b" stroke="#00005d" d="M2896 3862l13-9-4-3-12 10z"/><path fill="#000067" stroke="#00003e" d="M2829 3883l0-8-3 0 1 8z"/><path fill="#0000eb" stroke="#00008d" d="M2959 3821l18-15-6-6-17 16z"/><path fill="#000068" stroke="#00003f" d="M2833 3884l2-9-3 0-1 8z"/><path fill="#000066" stroke="#00003d" d="M2827 3883l-1-8-3 0 2 9z"/><path fill="#000073" stroke="#000045" d="M3164 4463l8 19 8-25-8-18z"/><path fill="#00008e" stroke="#000055" d="M2720 3831l-15-14-6 5 17 13z"/><path fill="#000069" stroke="#00003f" d="M2835 3884l3-8-3-1-2 9z"/><path fill="#000065" stroke="#00003d" d="M2825 3884l-2-9-3 1 3 8z"/><path fill="#62720d" stroke="#3b4408" d="M3545 3920l-14 29 71-60 13-32z"/><path fill="#1e7957" stroke="#124934" d="M3443 4028l-15 24 72-47 16-27z"/><path fill="#00006a" stroke="#000040" d="M2837 3884l4-8-3 0-3 8z"/><path fill="#000065" stroke="#00003c" d="M2823 3884l-3-8-3 0 4 8z"/><path fill="#0000d5" stroke="#000080" d="M2942 3834l17-13-5-5-16 13z"/><path fill="#066860" stroke="#043e3a" d="M3225 4671l8 30 7-44-10-29z"/><path fill="#00006b" stroke="#000040" d="M2839 3884l4-7-2-1-4 8z"/><path fill="#000064" stroke="#00003c" d="M2821 3884l-4-8-3 1 5 7z"/><path fill="#0086a4" stroke="#005163" d="M2544 3713l-28-16-12 9 29 15z"/><path fill="#000061" stroke="#00003a" d="M2804 3880l-8-8-3 1 9 8z"/><path fill="#000074" stroke="#000045" d="M2856 3881l9-8-3-1-8 8z"/><path fill="#000080" stroke="#00004d" d="M2735 3842l-15-11-4 4 15 11z"/><path fill="#5ed571" stroke="#388044" d="M2505 4831l3 20 41 5-2-21z"/><path fill="#0000c0" stroke="#000073" d="M2927 3846l15-12-4-5-15 13z"/><path fill="#92d33a" stroke="#587f23" d="M2218 4652l-13 32 91-23 12-30z"/><path fill="#000064" stroke="#00003c" d="M2790 3875l-10-8-3 2 11 8z"/><path fill="#00007f" stroke="#00004c" d="M2870 3877l11-8-3-2-10 8z"/><path fill="#00006b" stroke="#000040" d="M2840 3885l6-8-3 0-4 7z"/><path fill="#000063" stroke="#00003b" d="M2819 3884l-5-7-3 0 6 8z"/><path fill="#000067" stroke="#00003e" d="M2777 3869l-12-9-3 3 12 8z"/><path fill="#000089" stroke="#000052" d="M2884 3871l12-9-3-2-12 9z"/><path fill="#9ada39" stroke="#5c8322" d="M2167 4572l-13 30 90-11 12-28z"/><path fill="#000074" stroke="#000046" d="M3228 4205l-8 12 38-18 9-14z"/><path fill="#000076" stroke="#000047" d="M2749 3853l-14-11-4 4 15 10z"/><path fill="#91e24a" stroke="#57882c" d="M3254 3626l43-24-19-12-41 24z"/><path fill="#000050" stroke="#000030" d="M3186 4244l-5 10 27-14 6-11z"/><path fill="#5ed16c" stroke="#397d41" d="M2404 4770l-3 29 57-14 4-29z"/><path fill="#00006c" stroke="#000041" d="M2842 3885l7-7-3-1-6 8z"/><path fill="#000062" stroke="#00003b" d="M2817 3885l-6-8-2 1 7 7z"/><path fill="#0000aa" stroke="#000066" d="M2912 3856l15-10-4-4-14 11z"/><path fill="#000069" stroke="#00003f" d="M3157 4445l7 18 8-24-8-17z"/><path fill="#000060" stroke="#00003a" d="M2802 3881l-9-8-3 2 10 7z"/><path fill="#000074" stroke="#000046" d="M2858 3882l10-7-3-2-9 8z"/><path fill="#006da2" stroke="#004261" d="M2570 3729l-26-16-11 8 28 17z"/><path fill="#64d66c" stroke="#3c8141" d="M2549 4856l5 16 37 14-4-16z"/><path fill="#6cd15f" stroke="#417d39" d="M2591 4886l6 10 37 22-6-9z"/><path fill="#00006c" stroke="#000041" d="M2844 3886l7-7-2-1-7 7z"/><path fill="#000061" stroke="#00003a" d="M2816 3885l-7-7-3 1 8 7z"/><path fill="#00006c" stroke="#000041" d="M2762 3863l-13-10-3 3 13 9z"/><path fill="#00009c" stroke="#00005d" d="M2899 3865l13-9-3-3-13 9z"/><path fill="#5fb853" stroke="#396f32" d="M2385 3666l-27-1-25 4 30 2z"/><path fill="#000063" stroke="#00003b" d="M2788 3877l-11-8-3 2 12 7z"/><path fill="#00007f" stroke="#00004c" d="M2872 3878l12-7-3-2-11 8z"/><path fill="#78d051" stroke="#487d31" d="M2285 4693l-10 32 81-25 10-31z"/><path fill="#00006d" stroke="#000041" d="M2845 3887l9-7-3-1-7 7z"/><path fill="#000061" stroke="#00003a" d="M2814 3886l-8-7-2 1 9 7z"/><path fill="#001c7f" stroke="#00114c" d="M3287 4156l-11 15 50-25 12-17z"/><path fill="#66cf63" stroke="#3d7c3b" d="M2348 4731l-7 31 69-22 7-30z"/><path fill="#00559f" stroke="#003360" d="M2596 3746l-26-17-9 9 26 16z"/><path fill="#000060" stroke="#000039" d="M2800 3882l-10-7-2 2 10 6z"/><path fill="#000074" stroke="#000046" d="M2859 3883l11-6-2-2-10 7z"/><path fill="#000065" stroke="#00003d" d="M2774 3871l-12-8-3 2 13 8z"/><path fill="#65e579" stroke="#3c8948" d="M3213 3650l41-24-17-12-39 24z"/><path fill="#85f669" stroke="#50943f" d="M2126 4348l-3 21 39 24 4-21z"/><path fill="#8ae553" stroke="#538932" d="M2141 4460l-10 25 72 7 10-23z"/><path fill="#00008a" stroke="#000053" d="M2886 3873l13-8-3-3-12 9z"/><path fill="#00005d" stroke="#000038" d="M3151 4429l6 16 7-23-6-15z"/><path fill="#003e9e" stroke="#00255f" d="M2619 3763l-23-17-9 8 25 16z"/><path fill="#000060" stroke="#00003a" d="M2813 3887l-9-7-2 1 9 6z"/><path fill="#00006d" stroke="#000042" d="M2847 3887l9-6-2-1-9 7z"/><path fill="#002a9d" stroke="#00195e" d="M2642 3779l-23-16-7 7 23 16z"/><path fill="#00586c" stroke="#003541" d="M3215 4641l10 30 5-43-10-28z"/><path fill="#00169c" stroke="#000d5d" d="M2662 3794l-20-15-7 7 22 15z"/><path fill="#00059b" stroke="#00035d" d="M2682 3809l-20-15-5 7 20 14z"/><path fill="#00005f" stroke="#000039" d="M2798 3883l-10-6-2 1 11 6z"/><path fill="#00009c" stroke="#00005d" d="M2699 3822l-17-13-5 6 18 13z"/><path fill="#000075" stroke="#000046" d="M2861 3884l11-6-2-1-11 6z"/><path fill="#00008b" stroke="#000054" d="M2716 3835l-17-13-4 6 17 11z"/><path fill="#000062" stroke="#00003b" d="M2786 3878l-12-7-2 2 12 7z"/><path fill="#00005f" stroke="#000039" d="M2811 3887l-9-6-2 1 10 6z"/><path fill="#00006e" stroke="#000042" d="M2848 3888l10-6-2-1-9 6z"/><path fill="#000063" stroke="#00003b" d="M2829 3891l0-8-2 0 1 8z"/><path fill="#00007f" stroke="#00004c" d="M2874 3880l12-7-2-2-12 7z"/><path fill="#000064" stroke="#00003c" d="M2831 3891l2-7-2-1-1 8z"/><path fill="#000062" stroke="#00003b" d="M2828 3891l-1-8-2 1 2 7z"/><path fill="#3de7a3" stroke="#248a62" d="M3174 3674l39-24-15-12-36 25z"/><path fill="#00007f" stroke="#00004c" d="M2731 3846l-15-11-4 4 16 11z"/><path fill="#000065" stroke="#00003c" d="M2833 3891l4-7-2 0-3 7z"/><path fill="#000061" stroke="#00003a" d="M2826 3891l-3-7-2 0 4 7z"/><path fill="#0000d6" stroke="#000080" d="M2946 3838l17-12-4-5-17 13z"/><path fill="#0000c0" stroke="#000073" d="M2930 3849l16-11-4-4-15 12z"/><path fill="#000075" stroke="#000046" d="M2746 3856l-15-10-3 4 15 10z"/><path fill="#0000ec" stroke="#00008d" d="M2963 3826l19-14-5-6-18 15z"/><path fill="#0000aa" stroke="#000066" d="M2915 3859l15-10-3-3-15 10z"/><path fill="#000065" stroke="#00003d" d="M2834 3891l5-7-2 0-4 7z"/><path fill="#000061" stroke="#00003a" d="M2825 3891l-4-7-2 0 5 7z"/><path fill="#000fec" stroke="#00098e" d="M2982 3812l21-16-6-6-20 16z"/><path fill="#00006b" stroke="#000040" d="M2759 3865l-13-9-3 4 14 8z"/><path fill="#50d67e" stroke="#30804c" d="M2458 4785l-2 26 49-5 2-27z"/><path fill="#c52800" stroke="#761800" d="M3499 3554l45-6-20-26-43 8z"/><path fill="#00009c" stroke="#00005e" d="M2901 3868l14-9-3-3-13 9z"/><path fill="#000065" stroke="#00003d" d="M2835 3891l5-6-1-1-5 7z"/><path fill="#000060" stroke="#00003a" d="M2824 3891l-5-7-2 1 6 6z"/><path fill="#14e8cd" stroke="#0c8b7b" d="M3139 3697l35-23-12-11-34 24z"/><path fill="#0029ec" stroke="#00198e" d="M3003 3796l22-17-6-7-22 18z"/><path fill="#00005f" stroke="#000039" d="M2810 3888l-10-6-2 1 11 6z"/><path fill="#00006e" stroke="#000042" d="M2849 3889l10-6-1-1-10 6z"/><path fill="#7ad352" stroke="#497e31" d="M2231 4621l-13 31 90-21 12-29z"/><path fill="#5a0000" stroke="#360000" d="M3643 3617l21 21 8-51-22-19z"/><path fill="#000056" stroke="#000033" d="M3146 4414l5 15 7-22-5-14z"/><path fill="#004bec" stroke="#002d8e" d="M3025 3779l25-18-7-8-24 19z"/><path fill="#6b1e00" stroke="#401200" d="M3637 3759l-3 32 49-66 0-32z"/><path fill="#000066" stroke="#00003d" d="M2835 3892l7-7-2 0-5 6z"/><path fill="#000060" stroke="#00003a" d="M2823 3891l-6-6-1 0 6 7z"/><path fill="#00597d" stroke="#00354b" d="M3364 4091l-13 19 63-36 14-22z"/><path fill="#80d952" stroke="#4d8231" d="M2180 4544l-13 28 89-9 12-26z"/><path fill="#00bfea" stroke="#00738c" d="M3107 3720l32-23-11-10-31 23z"/><path fill="#000064" stroke="#00003c" d="M2772 3873l-13-8-2 3 13 8z"/><path fill="#006cec" stroke="#00418d" d="M3050 3761l27-20-8-9-26 21z"/><path fill="#00008a" stroke="#000053" d="M2888 3876l13-8-2-3-13 8z"/><path fill="#00005e" stroke="#000038" d="M2797 3884l-11-6-2 2 12 6z"/><path fill="#0094eb" stroke="#00598d" d="M3077 3741l30-21-10-10-28 22z"/><path fill="#000075" stroke="#000046" d="M2862 3886l12-6-2-2-11 6z"/><path fill="#000066" stroke="#00003d" d="M2836 3892l8-6-2-1-7 7z"/><path fill="#000060" stroke="#000039" d="M2822 3892l-6-7-2 1 7 6z"/><path fill="#3b5c1e" stroke="#243712" d="M3240 4820l2 28 8-58-3-29z"/><path fill="#4cb260" stroke="#2e6b3a" d="M2413 3671l-28-5-22 5 32 7z"/><path fill="#000056" stroke="#000033" d="M3192 4233l-6 11 28-15 6-12z"/><path fill="#00005e" stroke="#000038" d="M2809 3889l-11-6-1 1 11 6z"/><path fill="#00006e" stroke="#000042" d="M2850 3890l11-6-2-1-10 6z"/><path fill="#000061" stroke="#00003a" d="M2784 3880l-12-7-2 3 13 6z"/><path fill="#000080" stroke="#00004d" d="M2875 3882l13-6-2-3-12 7z"/><path fill="#000066" stroke="#00003d" d="M2837 3892l8-5-1-1-8 6z"/><path fill="#00005f" stroke="#000039" d="M2821 3892l-7-6-1 1z"/><path fill="#00005f" stroke="#000039" d="M2821 3892l-8-5-2 0 9 6z"/><path fill="#000067" stroke="#00003e" d="M2838 3893l9-6-2 0-8 5z"/><path fill="#00007c" stroke="#00004a" d="M3237 4191l-9 14 39-20 9-14z"/><path fill="#004c6d" stroke="#002d42" d="M3206 4613l9 28 5-41-10-27z"/><path fill="#00005d" stroke="#000038" d="M2796 3886l-12-6-1 2 12 5z"/><path fill="#000075" stroke="#000046" d="M2863 3887l12-5-1-2-12 6z"/><path fill="#4ad382" stroke="#2c7f4e" d="M2410 4740l-6 30 58-14 6-30z"/><path fill="#5ed06b" stroke="#387d40" d="M2296 4661l-11 32 81-24 11-30z"/><path fill="#00005e" stroke="#000038" d="M2808 3890l-11-6-1 2 11 5z"/><path fill="#00006e" stroke="#000042" d="M2851 3891l11-5-1-2-11 6z"/><path fill="#00005e" stroke="#000039" d="M2820 3893l-9-6-1 1 9 5z"/><path fill="#000067" stroke="#00003e" d="M2838 3893l10-5-1-1z"/><path fill="#00004e" stroke="#00002f" d="M3141 4400l5 14 7-21-5-14z"/><path fill="#4ed07b" stroke="#2f7d4a" d="M2356 4700l-8 31 69-21 9-31z"/><path fill="#7be461" stroke="#4a893a" d="M2150 4436l-9 24 72 9 8-22z"/><path fill="#000063" stroke="#00003c" d="M2770 3876l-13-8-2 3 14 7z"/><path fill="#00006a" stroke="#00003f" d="M2757 3868l-14-8-2 3 14 8z"/><path fill="#00008a" stroke="#000053" d="M2889 3878l14-7-2-3-13 8z"/><path fill="#00009c" stroke="#00005e" d="M2903 3871l14-8-2-4-14 9z"/><path fill="#2c7949" stroke="#1a492c" d="M3458 4003l-15 25 73-50 15-29z"/><path fill="#00005d" stroke="#000038" d="M2807 3891l-11-5-1 1 11 4z"/><path fill="#00006e" stroke="#000042" d="M2852 3891l11-4-1-1-11 5z"/><path fill="#000060" stroke="#00003a" d="M2783 3882l-13-6-1 2 12 6z"/><path fill="#000073" stroke="#000045" d="M2743 3860l-15-10-2 4 15 9z"/><path fill="#4ddb87" stroke="#2e8351" d="M2505 4806l0 25 42 4 0-24z"/><path fill="#000080" stroke="#00004d" d="M2876 3884l13-6-1-2-13 6z"/><path fill="#00005e" stroke="#000038" d="M2819 3893l-10-4-1 1 10 4z"/><path fill="#000067" stroke="#00003e" d="M2839 3894l11-4-1-1-10 4z"/><path fill="#0000aa" stroke="#000066" d="M2917 3863l15-9-2-5-15 10z"/><path fill="#00007d" stroke="#00004b" d="M2728 3850l-16-11-3 5 17 10z"/><path fill="#00005d" stroke="#000038" d="M2795 3887l-12-5-2 2 13 5z"/><path fill="#000075" stroke="#000046" d="M2864 3889l12-5-1-2-12 5z"/><path fill="#81f56c" stroke="#4e9341" d="M2128 4328l-2 20 40 24 1-19z"/><path fill="#0000c0" stroke="#000073" d="M2932 3854l17-11-3-5-16 11z"/><path fill="#36ac71" stroke="#206744" d="M2443 3680l-30-9-18 7 32 10z"/><path fill="#00005d" stroke="#000038" d="M2818 3894l-10-4-1 1z"/><path fill="#000067" stroke="#00003e" d="M2840 3894l11-3-1-1-11 4z"/><path fill="#6f6e00" stroke="#434200" d="M3558 3889l-13 31 70-63 11-33z"/><path fill="#000089" stroke="#000052" d="M2712 3839l-17-11-3 5 17 11z"/><path fill="#00005d" stroke="#000038" d="M2806 3891l-11-4-1 2 12 3z"/><path fill="#00006e" stroke="#000042" d="M2852 3892l12-3-1-2-11 4z"/><path fill="#62d26a" stroke="#3b7e3f" d="M2244 4591l-13 30 89-19 12-28z"/><path fill="#00287d" stroke="#00184b" d="M3299 4139l-12 17 51-27 13-19z"/><path fill="#0000d6" stroke="#000080" d="M2949 3843l17-12-3-5-17 12z"/><path fill="#000062" stroke="#00003b" d="M2829 3897l-1-6-1 0z"/><path fill="#000048" stroke="#00002b" d="M3138 4386l3 14 7-21-3-12z"/><path fill="#000063" stroke="#00003b" d="M2829 3897l4-6-1 0z"/><path fill="#000062" stroke="#00003b" d="M2829 3897l-3-6-1 0z"/><path fill="#00005d" stroke="#000038" d="M2818 3894l-11-3-1 0 12 4z"/><path fill="#000067" stroke="#00003e" d="M2840 3895l12-4-1 0-11 3z"/><path fill="#003d6e" stroke="#002442" d="M3196 4586l10 27 4-40-10-25z"/><path fill="#000099" stroke="#00005c" d="M2695 3828l-18-13-4 5 19 13z"/><path fill="#6cd864" stroke="#41813c" d="M2192 4517l-12 27 88-7 11-25z"/><path fill="#000063" stroke="#00003b" d="M2829 3897l6-5 0-1z"/><path fill="#ce5700" stroke="#7c3400" d="M3452 3565l47-11-18-24-46 12z"/><path fill="#00005d" stroke="#000038" d="M2818 3895l-12-4 0 1 11 3z"/><path fill="#000067" stroke="#00003e" d="M2840 3895l12-3 0-1z"/><path fill="#000061" stroke="#00003a" d="M2829 3897l-8-5-1 1z"/><path fill="#000063" stroke="#00003c" d="M2829 3897l9-4-1-1z"/><path fill="#00005c" stroke="#000037" d="M2794 3889l-13-5 0 2 12 4z"/><path fill="#000075" stroke="#000046" d="M2865 3890l12-4-1-2-12 5z"/><path fill="#0000ec" stroke="#00008e" d="M2966 3831l20-13-4-6-19 14z"/><path fill="#00005f" stroke="#000039" d="M2781 3884l-12-6-1 2 13 6z"/><path fill="#000080" stroke="#00004d" d="M2877 3886l13-6-1-2-13 6z"/><path fill="#000599" stroke="#00035c" d="M2677 3815l-20-14-5 6 21 13z"/><path fill="#00005c" stroke="#000037" d="M2806 3892l-12-3-1 1 12 3z"/><path fill="#00006e" stroke="#000042" d="M2852 3893l13-3-1-1-12 3z"/><path fill="#000062" stroke="#00003b" d="M2769 3878l-14-7-1 3 14 6z"/><path fill="#00008a" stroke="#000053" d="M2890 3880l14-6-1-3-14 7z"/><path fill="#57df81" stroke="#34864d" d="M2547 4835l2 21 38 14-1-20z"/><path fill="#00005c" stroke="#000037" d="M2817 3895l-11-3-1 1 12 3z"/><path fill="#000067" stroke="#00003e" d="M2841 3896l11-3 0-1-12 3z"/><path fill="#21a881" stroke="#14654d" d="M2473 3692l-30-12-16 8 33 12z"/><path fill="#000064" stroke="#00003c" d="M2829 3897l11-3-1 0z"/><path fill="#000069" stroke="#00003f" d="M2755 3871l-14-8-2 4 15 7z"/><path fill="#001699" stroke="#000d5c" d="M2657 3801l-22-15-5 7 22 14z"/><path fill="#3cd896" stroke="#24825a" d="M2462 4756l-4 29 49-6 4-29z"/><path fill="#000060" stroke="#00003a" d="M2829 3897l-11-3 0 1z"/><path fill="#000064" stroke="#00003c" d="M2829 3897l11-2 0-1z"/><path fill="#44d085" stroke="#297d50" d="M2308 4631l-12 30 81-22 11-29z"/><path fill="#000fec" stroke="#00098e" d="M2986 3818l21-15-4-7-21 16z"/><path fill="#00009c" stroke="#00005e" d="M2904 3874l14-7-1-4-14 8z"/><path fill="#000060" stroke="#00003a" d="M2829 3897l-11-2-1 0z"/><path fill="#00005d" stroke="#000038" d="M3199 4221l-7 12 28-16 8-12z"/><path fill="#00005c" stroke="#000037" d="M2817 3896l-12-3 0 1z"/><path fill="#00005c" stroke="#000037" d="M2805 3893l-12-3 0 2 12 2z"/><path fill="#00006e" stroke="#000042" d="M2853 3894l12-3 0-1-13 3z"/><path fill="#7bd553" stroke="#4a8032" d="M2628 4909l6 9 37 28-5-6z"/><path fill="#000075" stroke="#000046" d="M2865 3891l12-3 0-2-12 4z"/><path fill="#00299a" stroke="#00195c" d="M2635 3786l-23-16-6 7 24 16z"/><path fill="#000072" stroke="#000044" d="M2741 3863l-15-9-2 4 15 9z"/><path fill="#34d196" stroke="#1f7d5a" d="M2366 4669l-10 31 70-21 9-30z"/><path fill="#0000aa" stroke="#000066" d="M2918 3867l16-9-2-4-15 9z"/><path fill="#002f6e" stroke="#001c42" d="M3186 4561l10 25 4-38-10-24z"/><path fill="#30d49e" stroke="#1d7f5f" d="M2417 4710l-7 30 58-14 7-30z"/><path fill="#0ca293" stroke="#076158" d="M2504 3706l-31-14-13 8 32 14z"/><path fill="#6ade6d" stroke="#3f8541" d="M2587 4870l4 16 37 23-3-15z"/><path fill="#0029ec" stroke="#00198e" d="M3007 3803l23-16-5-8-22 17z"/><path fill="#00005f" stroke="#000039" d="M2781 3886l-13-6-1 3 13 5z"/><path fill="#00007f" stroke="#00004c" d="M2877 3888l14-5-1-3-13 6z"/><path fill="#346029" stroke="#1f3a19" d="M3236 4790l4 30 7-59-6-29z"/><path fill="#003d9b" stroke="#00255d" d="M2612 3770l-25-16-7 8 26 15z"/><path fill="#00005c" stroke="#000037" d="M2805 3894l-12-2 0 1 12 2z"/><path fill="#00006e" stroke="#000042" d="M2853 3895l12-2 0-2-12 3z"/><path fill="#6fe26c" stroke="#438841" d="M2157 4414l-7 22 71 11 6-21z"/><path fill="#0086a1" stroke="#005060" d="M2533 3721l-29-15-12 8 31 16z"/><path fill="#00007e" stroke="#00004c" d="M2726 3854l-17-10-2 5 17 9z"/><path fill="#00549c" stroke="#00325e" d="M2587 3754l-26-16-9 8 28 16z"/><path fill="#00047a" stroke="#000249" d="M3247 4177l-10 14 39-20 11-15z"/><path fill="#0000c0" stroke="#000073" d="M2934 3858l17-10-2-5-17 11z"/><path fill="#006d9e" stroke="#00425f" d="M2561 3738l-28-17-10 9 29 16z"/><path fill="#49d181" stroke="#2c7d4d" d="M2256 4563l-12 28 88-17 11-26z"/><path fill="#000062" stroke="#00003b" d="M2768 3880l-14-6-1 3 14 6z"/><path fill="#00008a" stroke="#000053" d="M2891 3883l13-6 0-3-14 6z"/><path fill="#00677c" stroke="#003e4b" d="M3378 4069l-14 22 64-39 15-24z"/><path fill="#730000" stroke="#450000" d="M3616 3602l27 15 7-49-30-13z"/><path fill="#004bec" stroke="#002d8e" d="M3030 3787l25-17-5-9-25 18z"/><path fill="#00005b" stroke="#000037" d="M2793 3892l-13-4 0 2 13 3z"/><path fill="#000075" stroke="#000046" d="M2865 3893l13-3-1-2-12 3z"/><path fill="#d58900" stroke="#805200" d="M3404 3581l48-16-17-23-46 17z"/><path fill="#000063" stroke="#00003b" d="M2829 3897l10 3 0-1z"/><path fill="#000060" stroke="#00003a" d="M2829 3897l-10 2 0 1z"/><path fill="#000067" stroke="#00003e" d="M2840 3898l12-1 1-1-12 1z"/><path fill="#00005c" stroke="#000037" d="M2817 3897l-12-1 0 1 12 1z"/><path fill="#000063" stroke="#00003b" d="M2829 3897l9 3 1 0z"/><path fill="#000060" stroke="#00003a" d="M2829 3897l-10 3 1 0z"/><path fill="#00006e" stroke="#000042" d="M2853 3896l12-2 0-1-12 2z"/><path fill="#00005c" stroke="#000037" d="M2805 3895l-12-2 0 1 12 2z"/><path fill="#59d677" stroke="#358147" d="M2203 4492l-11 25 87-5 9-23z"/><path fill="#000063" stroke="#00003b" d="M2829 3897l8 3 1 0z"/><path fill="#00236e" stroke="#001542" d="M3177 4537l9 24 4-37-9-22z"/><path fill="#00008a" stroke="#000053" d="M2709 3844l-17-11-3 5 18 11z"/><path fill="#000063" stroke="#00003b" d="M2829 3897l7 4 1 0z"/><path fill="#000068" stroke="#00003e" d="M2754 3874l-15-7 0 3 14 7z"/><path fill="#00009c" stroke="#00005d" d="M2904 3877l15-7-1-3-14 7z"/><path fill="#0000d6" stroke="#000080" d="M2951 3848l18-11-3-6-17 12z"/><path fill="#00005e" stroke="#000038" d="M2780 3888l-13-5 0 2 13 5z"/><path fill="#00007f" stroke="#00004c" d="M2878 3890l13-5 0-2-14 5z"/><path fill="#006cec" stroke="#00418d" d="M3055 3770l28-19-6-10-27 20z"/><path fill="#80f26b" stroke="#4d9140" d="M2127 4308l1 20 39 25 0-20z"/><path fill="#000061" stroke="#00003a" d="M2829 3897l-5 5 1 0z"/><path fill="#000062" stroke="#00003b" d="M2829 3897l3 5 1 0z"/><path fill="#2ccf9d" stroke="#1a7c5e" d="M2320 4602l-12 29 80-21 11-27z"/><path fill="#000061" stroke="#00003a" d="M2829 3897l-1 5 1 0z"/><path fill="#701500" stroke="#430d00" d="M3635 3729l2 30 46-66-7-29z"/><path fill="#3adf9d" stroke="#23865e" d="M2507 4779l-2 27 42 5 2-28z"/><path fill="#000075" stroke="#000046" d="M2865 3894l12-2 1-2-13 3z"/><path fill="#00005b" stroke="#000037" d="M2793 3893l-13-3 0 2 13 2z"/><path fill="#000097" stroke="#00005b" d="M2692 3833l-19-13-3 6 19 12z"/><path fill="#1cd1ae" stroke="#117d68" d="M2377 4639l-11 30 69-20 10-28z"/><path fill="#000071" stroke="#000044" d="M2739 3867l-15-9-1 4 16 8z"/><path fill="#0000aa" stroke="#000066" d="M2919 3870l16-8-1-4-16 9z"/><path fill="#0094eb" stroke="#00598d" d="M3083 3751l31-20-7-11-30 21z"/><path fill="#000061" stroke="#00003a" d="M2767 3883l-14-6 0 3 14 5z"/><path fill="#000089" stroke="#000052" d="M2891 3885l14-5-1-3-13 6z"/><path fill="#0000ec" stroke="#00008d" d="M2969 3837l19-12-2-7-20 13z"/><path fill="#00186d" stroke="#000f42" d="M3169 4515l8 22 4-35-9-20z"/><path fill="#00006d" stroke="#000042" d="M2852 3898l12-1 0-1-12 1z"/><path fill="#00005b" stroke="#000037" d="M2805 3897l-12-1 1 1 12 1z"/><path fill="#dbbf00" stroke="#837200" d="M3356 3599l48-18-15-22-47 20z"/><path fill="#000066" stroke="#00003d" d="M2839 3899l10 2 1-1-10-1z"/><path fill="#00005c" stroke="#000037" d="M2818 3899l-11 1 1 1 11-2z"/><path fill="#18d5b6" stroke="#0e806d" d="M2426 4679l-9 31 58-14 8-30z"/><path fill="#23dab0" stroke="#158369" d="M2468 4726l-6 30 49-6 6-30z"/><path fill="#00007f" stroke="#00004c" d="M2877 3892l13-4 1-3-13 5z"/><path fill="#00005e" stroke="#000038" d="M2780 3890l-13-5 0 3 13 4z"/><path fill="#00357c" stroke="#00204b" d="M3311 4122l-12 17 52-29 13-19z"/><path fill="#37d093" stroke="#217d58" d="M2268 4537l-12 26 87-15 10-24z"/><path fill="#000074" stroke="#000046" d="M2864 3896l13-2 0-2-12 2z"/><path fill="#00005b" stroke="#000037" d="M2793 3894l-13-2 1 2 12 2z"/><path fill="#000065" stroke="#00003d" d="M2839 3900l9 2 1-1-10-2z"/><path fill="#00005c" stroke="#000037" d="M2819 3899l-11 2 1 1 10-2z"/><path fill="#00bfea" stroke="#00738c" d="M3114 3731l33-21-8-13-32 23z"/><path fill="#000797" stroke="#00045a" d="M2673 3820l-21-13-3 6 21 13z"/><path fill="#3b793a" stroke="#234823" d="M3473 3976l-15 27 73-54 14-29z"/><path fill="#000067" stroke="#00003e" d="M3208 4209l-9 12 29-16 9-14z"/><path fill="#00007d" stroke="#00004b" d="M2724 3858l-17-9-1 4 17 9z"/><path fill="#000065" stroke="#00003d" d="M2838 3900l9 2 1 0-9-2z"/><path fill="#00005c" stroke="#000037" d="M2819 3900l-10 2 1 0 10-2z"/><path fill="#0000c0" stroke="#000073" d="M2935 3862l17-9-1-5-17 10z"/><path fill="#000067" stroke="#00003e" d="M2753 3877l-14-7-1 4 15 6z"/><path fill="#000097" stroke="#00005b" d="M2905 3880l14-6 0-4-15 7z"/><path fill="#000fec" stroke="#00098e" d="M2988 3825l22-14-3-8-21 15z"/><path fill="#66e174" stroke="#3d8746" d="M2162 4393l-5 21 70 12 5-20z"/><path fill="#000e6c" stroke="#000841" d="M3161 4494l8 21 3-33-8-19z"/><path fill="#bcdf1b" stroke="#718610" d="M3309 3620l47-21-14-20-45 23z"/><path fill="#296337" stroke="#193b21" d="M3229 4758l7 32 5-58-8-31z"/><path fill="#14e9cd" stroke="#0c8c7b" d="M3147 3710l36-22-9-14-35 23z"/><path fill="#000065" stroke="#00003c" d="M2837 3900l9 3 1-1-9-2z"/><path fill="#00005d" stroke="#000038" d="M2820 3900l-10 2 2 1z"/><path fill="#4bd583" stroke="#2d804f" d="M2213 4469l-10 23 85-3 9-22z"/><path fill="#17ceb1" stroke="#0e7c6a" d="M2332 4574l-12 28 79-19 10-26z"/><path fill="#00006c" stroke="#000041" d="M2850 3900l12 0 1-1-12 0z"/><path fill="#00005b" stroke="#000037" d="M2806 3899l-11 0 1 1 11 0z"/><path fill="#745e00" stroke="#453900" d="M3567 3858l-9 31 68-65 8-33z"/><path fill="#000089" stroke="#000052" d="M2890 3888l14-5 1-3-14 5z"/><path fill="#000061" stroke="#00003a" d="M2767 3885l-14-5 0 3 14 5z"/><path fill="#001897" stroke="#000e5a" d="M2652 3807l-22-14-4 7 23 13z"/><path fill="#3de7a3" stroke="#248a62" d="M3183 3688l40-23-10-15-39 24z"/><path fill="#47e495" stroke="#2b895a" d="M2547 4811l0 24 39 15 0-25z"/><path fill="#91e24a" stroke="#57882c" d="M3265 3642l44-22-12-18-43 24z"/><path fill="#05c1c5" stroke="#037476" d="M2388 4610l-11 29 68-18 10-28z"/><path fill="#00007e" stroke="#00004c" d="M2877 3894l13-3 0-3-13 4z"/><path fill="#00005e" stroke="#000038" d="M2780 3892l-13-4 1 2 13 4z"/><path fill="#00005d" stroke="#000038" d="M2821 3901l-8 3 2 0 7-3z"/><path fill="#000064" stroke="#00003c" d="M2836 3901l7 3 1 0-7-3z"/><path fill="#65e579" stroke="#3c8948" d="M3223 3665l42-23-11-16-41 24z"/><path fill="#000089" stroke="#000052" d="M2707 3849l-18-11-1 5 18 10z"/><path fill="#00005d" stroke="#000038" d="M2822 3901l-7 3 1 1 7-4z"/><path fill="#000063" stroke="#00003c" d="M2835 3901l6 4 2-1-7-3z"/><path fill="#0000d6" stroke="#000080" d="M2952 3853l18-10-1-6-18 11z"/><path fill="#00006c" stroke="#000041" d="M2849 3901l11 0 2-1-12 0z"/><path fill="#00005c" stroke="#000037" d="M2807 3900l-11 0 2 1 10 0z"/><path fill="#00056b" stroke="#000340" d="M3154 4475l7 19 3-31-7-18z"/><path fill="#000070" stroke="#000043" d="M2739 3870l-16-8 0 5 15 7z"/><path fill="#0000a9" stroke="#000066" d="M2919 3874l16-7 0-5-16 8z"/><path fill="#0029ec" stroke="#00198e" d="M3010 3811l23-15-3-9-23 16z"/><path fill="#00005e" stroke="#000038" d="M2823 3901l-7 4 2 0 6-3z"/><path fill="#000063" stroke="#00003b" d="M2834 3902l5 3 2 0-6-4z"/><path fill="#000f79" stroke="#000949" d="M3258 4162l-11 15 40-21 12-17z"/><path fill="#00bfcf" stroke="#00727c" d="M2435 4649l-9 30 57-13 9-29z"/><path fill="#000073" stroke="#000045" d="M2863 3899l12-1 1-2-12 1z"/><path fill="#00005b" stroke="#000036" d="M2794 3897l-12-1 1 1 12 2z"/><path fill="#00005e" stroke="#000038" d="M2824 3902l-6 3 2 1z"/><path fill="#24cfa4" stroke="#167c62" d="M2279 4512l-11 25 85-13 10-23z"/><path fill="#00005e" stroke="#000039" d="M2824 3902l-4 4 2 0 3-4z"/><path fill="#000062" stroke="#00003b" d="M2832 3902l4 4 2 0-5-4z"/><path fill="#002b97" stroke="#001a5b" d="M2630 3793l-24-16-5 8 25 15z"/><path fill="#940000" stroke="#590000" d="M3583 3592l33 10 4-47-35-6z"/><path fill="#00005f" stroke="#000039" d="M2825 3902l-3 4 2 0 2-4z"/><path fill="#000062" stroke="#00003b" d="M2831 3902l3 4 2 0-4-4z"/><path fill="#00006b" stroke="#000040" d="M2848 3902l10 1 2-2-11 0z"/><path fill="#00005c" stroke="#000037" d="M2808 3901l-10 0 1 2 10-1z"/><path fill="#7eba35" stroke="#4c6f20" d="M2333 3669l-27 2-30 0 31 0z"/><path fill="#000060" stroke="#000039" d="M2827 3902l-1 5 2 0 0-5z"/><path fill="#000061" stroke="#00003a" d="M2829 3902l1 5 2 0-2-5z"/><path fill="#000060" stroke="#00003a" d="M2828 3902l0 5 2 0-1-5z"/><path fill="#08cecc" stroke="#057c7a" d="M2475 4696l-7 30 49-6 6-30z"/><path fill="#000097" stroke="#00005a" d="M2904 3883l15-5 0-4-14 6z"/><path fill="#000069" stroke="#00003f" d="M2753 3880l-15-6 1 4 14 5z"/><path fill="#21e1b8" stroke="#14876e" d="M2511 4750l-4 29 42 4 4-29z"/><path fill="#00007e" stroke="#00004b" d="M2876 3896l12-3 2-2-13 3z"/><path fill="#02bbc5" stroke="#017076" d="M2343 4548l-11 26 77-17 10-24z"/><path fill="#00005d" stroke="#000038" d="M2781 3894l-13-4 1 3 13 3z"/><path fill="#82f066" stroke="#4e903d" d="M2125 4288l2 20 40 25-3-19z"/><path fill="#000088" stroke="#000052" d="M2890 3891l13-5 1-3-14 5z"/><path fill="#000060" stroke="#00003a" d="M2767 3888l-14-5 1 3 14 4z"/><path fill="#554b00" stroke="#332d00" d="M3231 4918l-4 23 13-68 2-25z"/><path fill="#000069" stroke="#00003f" d="M3148 4457l6 18 3-30-6-16z"/><path fill="#000095" stroke="#00005a" d="M2689 3838l-19-12-2 6 20 11z"/><path fill="#00006b" stroke="#000040" d="M2847 3902l10 2 1-1-10-1z"/><path fill="#00005c" stroke="#000037" d="M2809 3902l-10 1 2 1 9-2z"/><path fill="#000072" stroke="#000045" d="M2862 3900l11-1 2-1-12 1z"/><path fill="#00005b" stroke="#000037" d="M2795 3899l-12-2 2 2 11 1z"/><path fill="#00a3cf" stroke="#00627c" d="M2399 4583l-11 27 67-17 9-26z"/><path fill="#5fe67f" stroke="#398a4c" d="M2586 4850l1 20 38 24-2-19z"/><path fill="#0000eb" stroke="#00008d" d="M2970 3843l20-12-2-6-19 12z"/><path fill="#004aec" stroke="#002d8e" d="M3033 3796l26-16-4-10-25 17z"/><path fill="#077870" stroke="#044843" d="M3393 4047l-15 22 65-41 15-25z"/><path fill="#00007c" stroke="#00004a" d="M2723 3862l-17-9 0 5 17 9z"/><path fill="#0000bf" stroke="#000073" d="M2935 3867l17-9 0-5-17 9z"/><path fill="#003e98" stroke="#00255b" d="M2606 3777l-26-15-5 7 26 16z"/><path fill="#3dd390" stroke="#257f56" d="M2221 4447l-8 22 84-2 7-20z"/><path fill="#00006a" stroke="#000040" d="M2846 3903l9 2 2-1-10-2z"/><path fill="#00005c" stroke="#000037" d="M2810 3902l-9 2 2 1 9-2z"/><path fill="#1e6544" stroke="#123d29" d="M3222 4726l7 32 4-57-8-30z"/><path fill="#00a0d5" stroke="#006080" d="M2445 4621l-10 28 57-12 8-28z"/><path fill="#5fdf79" stroke="#398648" d="M2166 4372l-4 21 70 13 3-19z"/><path fill="#00007d" stroke="#00004b" d="M2875 3898l12-3 1-2-12 3z"/><path fill="#7ae160" stroke="#49873a" d="M2625 4894l3 15 38 31-4-12z"/><path fill="#00005d" stroke="#000038" d="M2812 3903l-9 2 2 1 8-2z"/><path fill="#000069" stroke="#00003f" d="M2844 3904l8 2 3-1-9-2z"/><path fill="#000063" stroke="#00003b" d="M3143 4441l5 16 3-28-5-15z"/><path fill="#0000a8" stroke="#000065" d="M2919 3878l15-7 1-4-16 7z"/><path fill="#00006f" stroke="#000043" d="M2738 3874l-15-7 0 4 16 7z"/><path fill="#14cdb2" stroke="#0c7b6b" d="M2288 4489l-9 23 84-11 8-21z"/><path fill="#000070" stroke="#000043" d="M3217 4196l-9 13 29-18 10-14z"/><path fill="#00a3cc" stroke="#00627a" d="M2353 4524l-10 24 76-15 9-23z"/><path fill="#6ab343" stroke="#406b28" d="M2363 3671l-30-2-26 2 34 4z"/><path fill="#00559a" stroke="#00335c" d="M2580 3762l-28-16-6 8 29 15z"/><path fill="#000795" stroke="#000459" d="M2670 3826l-21-13-2 7 21 12z"/><path fill="#000087" stroke="#000051" d="M2888 3893l14-4 1-3-13 5z"/><path fill="#000060" stroke="#00003a" d="M2768 3890l-14-4 2 3 13 4z"/><path fill="#00005d" stroke="#000038" d="M2813 3904l-8 2 3 1 7-3z"/><path fill="#000069" stroke="#00003f" d="M2843 3904l7 3 2-1-8-2z"/><path fill="#006ceb" stroke="#00418d" d="M3059 3780l28-18-4-11-28 19z"/><path fill="#0088ce" stroke="#00527c" d="M2409 4557l-10 26 65-16 9-24z"/><path fill="#000096" stroke="#00005a" d="M2903 3886l15-5 1-3-15 5z"/><path fill="#781200" stroke="#480b00" d="M3626 3702l9 27 41-65-12-26z"/><path fill="#000069" stroke="#00003f" d="M2753 3883l-14-5 1 3 14 5z"/><path fill="#000cec" stroke="#00078d" d="M2990 3831l21-12-1-8-22 14z"/><path fill="#00b0db" stroke="#006983" d="M2483 4666l-8 30 48-6 8-29z"/><path fill="#000071" stroke="#000044" d="M2858 3903l11 0 2-2-11 0z"/><path fill="#00005b" stroke="#000037" d="M2798 3901l-11 0 2 2 10 0z"/><path fill="#000088" stroke="#000051" d="M2706 3853l-18-10 0 6 18 9z"/><path fill="#0000d5" stroke="#000080" d="M2952 3858l18-9 0-6-18 10z"/><path fill="#00447b" stroke="#00294a" d="M3324 4102l-13 20 53-31 14-22z"/><path fill="#00005e" stroke="#000038" d="M2815 3904l-7 3 2 1 6-3z"/><path fill="#000068" stroke="#00003e" d="M2841 3905l7 3 2-1-7-3z"/><path fill="#00005e" stroke="#000038" d="M2783 3897l-12-2 2 3 12 1z"/><path fill="#0082d4" stroke="#004e7f" d="M2455 4593l-10 28 55-12 9-27z"/><path fill="#00005e" stroke="#000039" d="M2816 3905l-6 3 3 0 5-3z"/><path fill="#000067" stroke="#00003e" d="M2839 3905l6 3 3 0-7-3z"/><path fill="#00005b" stroke="#000036" d="M3139 4426l4 15 3-27-5-14z"/><path fill="#006e9b" stroke="#00425d" d="M2552 3746l-29-16-8 8 31 16z"/><path fill="#31e7ae" stroke="#1d8b69" d="M2549 4783l-2 28 39 14 1-27z"/><path fill="#08d5d3" stroke="#05807e" d="M2517 4720l-6 30 42 4 5-30z"/><path fill="#00005f" stroke="#000039" d="M2818 3905l-5 3 3 1 4-3z"/><path fill="#55ad53" stroke="#336832" d="M2395 3678l-32-7-22 4 36 8z"/><path fill="#000066" stroke="#00003d" d="M2836 3906l3 3 3 0-4-3z"/><path fill="#0071cd" stroke="#00447b" d="M2419 4533l-10 24 64-14 9-22z"/><path fill="#0094eb" stroke="#00598d" d="M3087 3762l31-18-4-13-31 20z"/><path fill="#0000be" stroke="#000072" d="M2934 3871l17-7 1-6-17 9z"/><path fill="#32d299" stroke="#1e7e5c" d="M2227 4426l-6 21 83 0 5-19z"/><path fill="#b71500" stroke="#6e0d00" d="M3544 3589l39 3 2-43-41-1z"/><path fill="#008fca" stroke="#005679" d="M2363 4501l-10 23 75-14 8-20z"/><path fill="#00007b" stroke="#00004a" d="M2723 3867l-17-9 0 5 17 8z"/><path fill="#001895" stroke="#000e59" d="M2649 3813l-23-13-2 7 23 13z"/><path fill="#000086" stroke="#000051" d="M2887 3895l13-3 2-3-14 4z"/><path fill="#126752" stroke="#0b3e31" d="M3213 4695l9 31 3-55-10-30z"/><path fill="#00889d" stroke="#00525e" d="M2523 3730l-31-16-10 8 33 16z"/><path fill="#000060" stroke="#00003a" d="M2769 3893l-13-4 2 3 13 3z"/><path fill="#000060" stroke="#00003a" d="M2822 3906l-4 3 3 1 3-4z"/><path fill="#000065" stroke="#00003c" d="M2834 3906l2 4 3-1-3-3z"/><path fill="#4b792a" stroke="#2d4819" d="M3486 3948l-13 28 72-56 13-31z"/><path fill="#000061" stroke="#00003a" d="M2824 3906l-3 4 3 0 2-3z"/><path fill="#000064" stroke="#00003c" d="M2832 3907l1 3 3 0-2-4z"/><path fill="#07c0be" stroke="#047372" d="M2297 4467l-9 22 83-9 7-20z"/><path fill="#000062" stroke="#00003b" d="M2826 3907l-2 3 3 0 1-3z"/><path fill="#000063" stroke="#00003c" d="M2830 3907l0 3 3 0-1-3z"/><path fill="#000062" stroke="#00003b" d="M2828 3907l-1 3 3 0 0-3z"/><path fill="#0029ec" stroke="#00198d" d="M3011 3819l24-14-2-9-23 15z"/><path fill="#00007b" stroke="#00004a" d="M2871 3901l11-1 3-2-12 1z"/><path fill="#00005e" stroke="#000038" d="M2785 3899l-12-1 2 2 12 1z"/><path fill="#00006f" stroke="#000043" d="M2855 3905l9 1 2-2-9 0z"/><path fill="#00005c" stroke="#000037" d="M2801 3904l-10 0 3 2 9-1z"/><path fill="#0091db" stroke="#005783" d="M2492 4637l-9 29 48-5 7-29z"/><path fill="#0067d3" stroke="#003e7f" d="M2464 4567l-9 26 54-11 9-24z"/><path fill="#001c78" stroke="#001148" d="M3269 4146l-11 16 41-23 12-17z"/><path fill="#0000a8" stroke="#000065" d="M2918 3881l15-5 1-5-15 7z"/><path fill="#3da866" stroke="#25653d" d="M2427 3688l-32-10-18 5 35 11z"/><path fill="#000095" stroke="#000059" d="M2902 3889l14-4 2-4-15 5z"/><path fill="#00006f" stroke="#000043" d="M2739 3878l-16-7 1 4 16 6z"/><path fill="#000069" stroke="#00003f" d="M2754 3886l-14-5 2 4 14 4z"/><path fill="#12a18a" stroke="#0b6053" d="M2492 3714l-32-14-12 7 34 15z"/><path fill="#000094" stroke="#000059" d="M2688 3843l-20-11 0 6 20 11z"/><path fill="#000055" stroke="#000033" d="M3135 4411l4 15 2-26-3-14z"/><path fill="#0000eb" stroke="#00008d" d="M2970 3849l20-11 0-7-20 12z"/><path fill="#27a478" stroke="#176248" d="M2460 3700l-33-12-15 6 36 13z"/><path fill="#86ed5f" stroke="#508e39" d="M2121 4268l4 20 39 26-4-19z"/><path fill="#5cdd7b" stroke="#37854a" d="M2167 4353l-1 19 69 15 1-19z"/><path fill="#005dcc" stroke="#00387a" d="M2428 4510l-9 23 63-12 8-21z"/><path fill="#765200" stroke="#473100" d="M3574 3827l-7 31 67-67 3-32z"/><path fill="#00005d" stroke="#000038" d="M2803 3905l-9 1 3 1 8-1z"/><path fill="#00006e" stroke="#000042" d="M2852 3906l9 1 3-1-9-1z"/><path fill="#00bbea" stroke="#00708c" d="M3118 3744l34-20-5-14-33 21z"/><path fill="#00007a" stroke="#000049" d="M2869 3903l11-1 2-2-11 1z"/><path fill="#00005e" stroke="#000039" d="M2787 3901l-12-1 3 2 11 1z"/><path fill="#0050d2" stroke="#00307e" d="M2473 4543l-9 24 54-9 8-23z"/><path fill="#000085" stroke="#000050" d="M2885 3898l12-3 3-3-13 3z"/><path fill="#007ec9" stroke="#004c78" d="M2371 4480l-8 21 73-11 7-20z"/><path fill="#000060" stroke="#00003a" d="M2771 3895l-13-3 2 3 13 3z"/><path fill="#002a95" stroke="#00195a" d="M2626 3800l-25-15-3 7 26 15z"/><path fill="#00005d" stroke="#000038" d="M2805 3906l-8 1 3 1 8-1z"/><path fill="#00006d" stroke="#000042" d="M2850 3907l8 1 3-1-9-1z"/><path fill="#0072db" stroke="#004483" d="M2500 4609l-8 28 46-5 8-27z"/><path fill="#0000d4" stroke="#00007f" d="M2951 3864l18-9 1-6-18 9z"/><path fill="#00b6e2" stroke="#006d88" d="M2523 4690l-6 30 41 4 6-30z"/><path fill="#06665f" stroke="#043d39" d="M3204 4664l9 31 2-54-9-28z"/><path fill="#000087" stroke="#000051" d="M2706 3858l-18-9 0 5 18 9z"/><path fill="#545802" stroke="#323501" d="M3231 4891l0 27 11-70-2-28z"/><path fill="#4cea97" stroke="#2e8d5a" d="M2586 4825l0 25 37 25-1-24z"/><path fill="#0047ec" stroke="#002a8d" d="M3035 3805l26-15-2-10-26 16z"/><path fill="#00afc9" stroke="#006979" d="M2304 4447l-7 20 81-7 6-18z"/><path fill="#0049ca" stroke="#002c79" d="M2436 4490l-8 20 62-10 7-20z"/><path fill="#000094" stroke="#000059" d="M2900 3892l14-3 2-4-14 4z"/><path fill="#00005e" stroke="#000039" d="M2808 3907l-8 1 4 2 6-2z"/><path fill="#00006c" stroke="#000041" d="M2848 3908l6 2 4-2-8-1z"/><path fill="#000069" stroke="#00003f" d="M2756 3889l-14-4 2 3 14 4z"/><path fill="#000272" stroke="#000144" d="M3227 4182l-10 14 30-19 11-15z"/><path fill="#0038d1" stroke="#00227e" d="M2482 4521l-9 22 53-8 7-22z"/><path fill="#2cd09d" stroke="#1a7d5e" d="M2232 4406l-5 20 82 2 5-18z"/><path fill="#000793" stroke="#000458" d="M2668 3832l-21-12-1 7 22 11z"/><path fill="#0000bd" stroke="#000072" d="M2933 3876l17-7 1-5-17 7z"/><path fill="#157b62" stroke="#0d4a3b" d="M3407 4022l-14 25 65-44 15-27z"/><path fill="#000ceb" stroke="#00078d" d="M2990 3838l21-11 0-8-21 12z"/><path fill="#00007a" stroke="#000049" d="M2723 3871l-17-8 2 5 16 7z"/><path fill="#0000a6" stroke="#000064" d="M2916 3885l15-5 2-4-15 5z"/><path fill="#14e8cd" stroke="#0c8b7b" d="M3152 3724l36-20-5-16-36 22z"/><path fill="#c33900" stroke="#752200" d="M3501 3591l43-2 0-41-45 6z"/><path fill="#00006f" stroke="#000042" d="M2740 3881l-16-6 2 4 16 6z"/><path fill="#00005f" stroke="#000039" d="M2810 3908l-6 2 3 1 6-3z"/><path fill="#0056da" stroke="#003483" d="M2509 4582l-9 27 46-4 8-26z"/><path fill="#17e8ca" stroke="#0e8b79" d="M2553 4754l-4 29 38 15 4-30z"/><path fill="#000084" stroke="#00004f" d="M2882 3900l13-2 2-3-12 3z"/><path fill="#006ec7" stroke="#004277" d="M2378 4460l-7 20 72-10 6-18z"/><path fill="#000060" stroke="#000039" d="M2813 3908l-6 3 4 0 5-2z"/><path fill="#004096" stroke="#00265a" d="M2601 3785l-26-16-4 8 27 15z"/><path fill="#0024d0" stroke="#00167d" d="M2490 4500l-8 21 51-8 7-20z"/><path fill="#000078" stroke="#000048" d="M2864 3906l9 0 4-2-11 0z"/><path fill="#00005f" stroke="#000039" d="M2791 3904l-10 0 4 2 9 0z"/><path fill="#0039c9" stroke="#002279" d="M2443 4470l-7 20 61-10 6-18z"/><path fill="#005869" stroke="#00353f" d="M3195 4635l9 29 2-51-10-27z"/><path fill="#840f00" stroke="#4f0900" d="M3611 3679l15 23 38-64-21-21z"/><path fill="#000061" stroke="#00003a" d="M2816 3909l-5 2 4 1 3-3z"/><path fill="#0096e3" stroke="#005a88" d="M2531 4661l-8 29 41 4 7-30z"/><path fill="#003eda" stroke="#002583" d="M2518 4558l-9 24 45-3 7-24z"/><path fill="#000062" stroke="#00003b" d="M2818 3909l-3 3 4 0 2-2z"/><path fill="#3ae7a6" stroke="#238a63" d="M3188 3704l40-21-5-18-40 23z"/><path fill="#00557a" stroke="#003349" d="M3338 4082l-14 20 54-33 15-22z"/><path fill="#006beb" stroke="#00408d" d="M3061 3790l28-16-2-12-28 18z"/><path fill="#0000e9" stroke="#00008c" d="M2969 3855l20-10 1-7-20 11z"/><path fill="#72e96f" stroke="#458c43" d="M2623 4875l2 19 37 34-2-18z"/><path fill="#000093" stroke="#000058" d="M2897 3895l14-3 3-3-14 3z"/><path fill="#000063" stroke="#00003b" d="M2821 3910l-2 2 4 1 1-3z"/><path fill="#000069" stroke="#00003f" d="M2758 3892l-14-4 3 4 13 3z"/><path fill="#000093" stroke="#000058" d="M2688 3849l-20-11 0 6 20 10z"/><path fill="#0014cf" stroke="#000c7c" d="M2497 4480l-7 20 50-7 6-18z"/><path fill="#000061" stroke="#00003a" d="M2775 3900l-12-2 4 3 11 1z"/><path fill="#00a4c8" stroke="#006278" d="M2309 4428l-5 19 80-5 5-18z"/><path fill="#5bdc7a" stroke="#378449" d="M2167 4333l0 20 69 15 0-18z"/><path fill="#000060" stroke="#00003a" d="M2794 3906l-9 0 3 2 9-1z"/><path fill="#0026d9" stroke="#001782" d="M2526 4535l-8 23 43-3 7-23z"/><path fill="#cd6200" stroke="#7b3b00" d="M3455 3599l46-8-2-37-47 11z"/><path fill="#001793" stroke="#000e58" d="M2647 3820l-23-13-1 7 23 13z"/><path fill="#96e144" stroke="#5a8729" d="M2662 4928l4 12 40 40-3-9z"/><path fill="#0029eb" stroke="#00198d" d="M3011 3827l24-13 0-9-24 14z"/><path fill="#0060c5" stroke="#003a76" d="M2384 4442l-6 18 71-8 5-17z"/><path fill="#002cc7" stroke="#001a77" d="M2449 4452l-6 18 60-8 5-17z"/><path fill="#0000a5" stroke="#000063" d="M2914 3889l14-5 3-4-15 5z"/><path fill="#004b6a" stroke="#002d3f" d="M3186 4607l9 28 1-49-10-25z"/><path fill="#0000d3" stroke="#00007e" d="M2950 3869l17-8 2-6-18 9z"/><path fill="#8dea55" stroke="#558c33" d="M2114 4248l7 20 39 27-6-19z"/><path fill="#00006f" stroke="#000042" d="M2742 3885l-16-6 3 4 15 5z"/><path fill="#62e47c" stroke="#3b894a" d="M3228 3683l42-20-5-21-42 23z"/><path fill="#000086" stroke="#000050" d="M2706 3863l-18-9 2 6 18 8z"/><path fill="#005697" stroke="#00345b" d="M2575 3769l-29-15-5 8 30 15z"/><path fill="#0076e3" stroke="#004788" d="M2538 4632l-7 29 40 3 6-28z"/><path fill="#0000b8" stroke="#00006e" d="M2931 3880l16-6 3-5-17 7z"/><path fill="#002b77" stroke="#001a47" d="M3282 4129l-13 17 42-24 13-20z"/><path fill="#27cea1" stroke="#177c61" d="M2235 4387l-3 19 82 4 2-18z"/><path fill="#0007cd" stroke="#00047b" d="M2503 4462l-6 18 49-5 5-17z"/><path fill="#000ed8" stroke="#000882" d="M2533 4513l-7 22 42-3 7-21z"/><path fill="#000061" stroke="#00003a" d="M2797 3907l-9 1 4 1 8-1z"/><path fill="#00007a" stroke="#000049" d="M2724 3875l-16-7 2 5 16 6z"/><path fill="#00cde5" stroke="#007b8a" d="M2558 4724l-5 30 38 14 4-30z"/><path fill="#000082" stroke="#00004e" d="M2877 3904l10-1 4-2-11 1z"/><path fill="#000062" stroke="#00003b" d="M2778 3902l-11-1 3 2 11 1z"/><path fill="#597a1d" stroke="#354911" d="M3497 3919l-11 29 72-59 9-31z"/><path fill="#d49400" stroke="#7f5900" d="M3408 3611l47-12-3-34-48 16z"/><path fill="#000091" stroke="#000057" d="M2895 3898l12-3 4-3-14 3z"/><path fill="#8be24f" stroke="#548730" d="M3270 3663l44-19-5-24-44 22z"/><path fill="#000069" stroke="#00003f" d="M2760 3895l-13-3 3 3 13 3z"/><path fill="#0000d7" stroke="#000081" d="M2540 4493l-7 20 42-2 6-19z"/><path fill="#000062" stroke="#00003b" d="M2800 3908l-8 1 5 2 7-1z"/><path fill="#003d69" stroke="#00253f" d="M3177 4581l9 26 0-46-9-24z"/><path fill="#0090ea" stroke="#00568d" d="M3089 3774l31-17-2-13-31 18z"/><path fill="#0022c5" stroke="#001576" d="M2454 4435l-5 17 59-7 4-15z"/><path fill="#0059e2" stroke="#003688" d="M2546 4605l-8 27 39 4 7-28z"/><path fill="#0000cb" stroke="#00007a" d="M2508 4445l-5 17 48-4 5-16z"/><path fill="#35edb0" stroke="#208e6a" d="M2587 4798l-1 27 36 26 1-28z"/><path fill="#b6de21" stroke="#6d8514" d="M3314 3644l47-18-5-27-47 21z"/><path fill="#dac800" stroke="#837800" d="M3361 3626l47-15-4-30-48 18z"/><path fill="#000bea" stroke="#00078c" d="M2989 3845l21-10 1-8-21 11z"/><path fill="#0056c3" stroke="#003475" d="M2389 4424l-5 18 70-7 4-16z"/><path fill="#4e5c0b" stroke="#2f3707" d="M3229 4861l2 30 9-71-4-30z"/><path fill="#0099c6" stroke="#005c77" d="M2314 4410l-5 18 80-4 4-16z"/><path fill="#000792" stroke="#000458" d="M2668 3838l-22-11 1 6 21 11z"/><path fill="#0000ce" stroke="#00007c" d="M2546 4475l-6 18 41-1 5-18z"/><path fill="#000063" stroke="#00003b" d="M2804 3910l-7 1 4 1 6-1z"/><path fill="#794800" stroke="#492b00" d="M3575 3797l-1 30 63-68-2-30z"/><path fill="#007199" stroke="#00445c" d="M2546 3754l-31-16-6 8 32 16z"/><path fill="#000e71" stroke="#000944" d="M3238 4166l-11 16 31-20 11-16z"/><path fill="#000080" stroke="#00004d" d="M2873 3906l10-1 4-2-10 1z"/><path fill="#000063" stroke="#00003b" d="M2781 3904l-11-1 5 2 10 1z"/><path fill="#002c94" stroke="#001b59" d="M2624 3807l-26-15-1 8 26 14z"/><path fill="#0000a4" stroke="#000062" d="M2911 3892l14-4 3-4-14 5z"/><path fill="#0046eb" stroke="#002a8d" d="M3035 3814l25-13 1-11-26 15z"/><path fill="#003de2" stroke="#002488" d="M2554 4579l-8 26 38 3 7-25z"/><path fill="#00006f" stroke="#000043" d="M2744 3888l-15-5 4 4 14 5z"/><path fill="#003269" stroke="#001e3f" d="M3169 4557l8 24 0-44-8-22z"/><path fill="#0000c6" stroke="#000077" d="M2512 4430l-4 15 48-3 4-15z"/><path fill="#0000be" stroke="#000072" d="M2551 4458l-5 17 40-1 4-17z"/><path fill="#0000e8" stroke="#00008b" d="M2967 3861l20-9 2-7-20 10z"/><path fill="#000090" stroke="#000056" d="M2891 3901l12-3 4-3-12 3z"/><path fill="#00006a" stroke="#000040" d="M2763 3898l-13-3 4 3 13 3z"/><path fill="#0019c3" stroke="#000f75" d="M2458 4419l-4 16 58-5 4-15z"/><path fill="#0000b6" stroke="#00006d" d="M2928 3884l16-5 3-5-16 6z"/><path fill="#000092" stroke="#000058" d="M2688 3854l-20-10 2 7 20 9z"/><path fill="#0020e2" stroke="#001388" d="M2561 4555l-7 24 37 4 7-24z"/><path fill="#00adea" stroke="#00688c" d="M2564 4694l-6 30 37 14 5-30z"/><path fill="#00007a" stroke="#000049" d="M2726 3879l-16-6 3 5 16 5z"/><path fill="#0000cd" stroke="#00007b" d="M2947 3874l18-7 2-6-17 8z"/><path fill="#5dda76" stroke="#388347" d="M2164 4314l3 19 69 17-2-17z"/><path fill="#000064" stroke="#00003c" d="M2785 3906l-10-1 4 3 9 0z"/><path fill="#921500" stroke="#580d00" d="M3589 3660l22 19 32-62-27-15z"/><path fill="#000086" stroke="#000050" d="M2708 3868l-18-8 2 5 18 8z"/><path fill="#24cda2" stroke="#157b61" d="M2236 4368l-1 19 81 5 2-16z"/><path fill="#002768" stroke="#00183e" d="M3161 4534l8 23 0-42-8-21z"/><path fill="#257b52" stroke="#164a31" d="M3420 3997l-13 25 66-46 13-28z"/><path fill="#00b7e9" stroke="#006e8c" d="M3120 3757l33-17-1-16-34 20z"/><path fill="#0000ae" stroke="#000068" d="M2556 4442l-5 16 39-1 4-15z"/><path fill="#000be2" stroke="#000787" d="M2568 4532l-7 23 37 4 6-23z"/><path fill="#004fc2" stroke="#003074" d="M2393 4408l-4 16 69-5 4-14z"/><path fill="#008b97" stroke="#00545b" d="M2515 3738l-33-16-8 8 35 16z"/><path fill="#0000b9" stroke="#00006f" d="M2516 4415l-4 15 48-3 3-14z"/><path fill="#0000e1" stroke="#000087" d="M2575 4511l-7 21 36 4 5-21z"/><path fill="#0094c5" stroke="#005976" d="M2316 4392l-2 18 79-2 2-16z"/><path fill="#0000a2" stroke="#000061" d="M2907 3895l14-3 4-4-14 4z"/><path fill="#0025ea" stroke="#00168c" d="M3010 3835l23-11 2-10-24 13z"/><path fill="#001d66" stroke="#00113d" d="M3155 4513l6 21 0-40-7-19z"/><path fill="#00008e" stroke="#000055" d="M2887 3903l12-2 4-3-12 3z"/><path fill="#00006f" stroke="#000043" d="M2747 3892l-14-5 4 4 13 4z"/><path fill="#000068" stroke="#00003e" d="M2767 3901l-13-3 5 3 11 2z"/><path fill="#0000a1" stroke="#000061" d="M2560 4427l-4 15 38 0 4-14z"/><path fill="#0013c1" stroke="#000b74" d="M2462 4405l-4 14 58-4 3-13z"/><path fill="#00647a" stroke="#003c49" d="M3352 4060l-14 22 55-35 14-25z"/><path fill="#0000cd" stroke="#00007b" d="M2581 4492l-6 19 34 4 5-19z"/><path fill="#001a92" stroke="#000f58" d="M2646 3827l-23-13 0 7 24 12z"/><path fill="#004295" stroke="#002759" d="M2598 3792l-27-15-2 9 28 14z"/><path fill="#60ee87" stroke="#398f51" d="M2622 4851l1 24 37 35-1-23z"/><path fill="#008cea" stroke="#00548c" d="M2571 4664l-7 30 36 14 6-30z"/><path fill="#97e748" stroke="#5b8b2b" d="M2106 4227l8 21 40 28-8-20z"/><path fill="#0067ea" stroke="#003e8d" d="M3060 3801l28-14 1-13-28 16z"/><path fill="#000068" stroke="#00003e" d="M3205 4198l-9 14 21-16 10-14z"/><path fill="#1deec9" stroke="#128f79" d="M2591 4768l-4 30 36 25 3-29z"/><path fill="#0000b8" stroke="#00006f" d="M2586 4474l-5 18 33 4 5-18z"/><path fill="#159e83" stroke="#0d5f4f" d="M2482 3722l-34-15-10 8 36 15z"/><path fill="#0000b0" stroke="#00006a" d="M2519 4402l-3 13 47-2 2-12z"/><path fill="#000066" stroke="#00003d" d="M2792 3909l-8 0 6 2 7 0z"/><path fill="#001665" stroke="#000d3c" d="M3149 4494l6 19-1-38-6-18z"/><path fill="#0000b4" stroke="#00006c" d="M2925 3888l15-5 4-4-16 5z"/><path fill="#003a76" stroke="#002347" d="M3295 4110l-13 19 42-27 14-20z"/><path fill="#0ee2d2" stroke="#08887e" d="M3153 3740l36-18-1-18-36 20z"/><path fill="#466017" stroke="#2a390e" d="M3224 4828l5 33 7-71-7-32z"/><path fill="#000099" stroke="#00005c" d="M2563 4413l-3 14 38 1 2-13z"/><path fill="#000be9" stroke="#00078c" d="M2987 3852l21-9 2-8-21 10z"/><path fill="#00007a" stroke="#000049" d="M2729 3883l-16-5 4 4 16 5z"/><path fill="#0049c0" stroke="#002c73" d="M2395 4392l-2 16 69-3 2-15z"/><path fill="#0000a8" stroke="#000065" d="M2590 4457l-4 17 33 4 4-16z"/><path fill="#000069" stroke="#00003f" d="M2770 3903l-11-2 5 3 11 1z"/><path fill="#006bea" stroke="#00408c" d="M2577 4636l-6 28 35 14 6-29z"/><path fill="#000992" stroke="#000657" d="M2668 3844l-21-11 2 7 21 11z"/><path fill="#0000cb" stroke="#00007a" d="M2944 3879l17-6 4-6-18 7z"/><path fill="#0000e6" stroke="#00008a" d="M2965 3867l19-8 3-7-20 9z"/><path fill="#000cbf" stroke="#000773" d="M2464 4390l-2 15 57-3 1-13z"/><path fill="#0000a0" stroke="#000060" d="M2903 3898l13-2 5-4-14 3z"/><path fill="#000086" stroke="#000050" d="M2710 3873l-18-8 4 6 17 7z"/><path fill="#000070" stroke="#000043" d="M2750 3895l-13-4 5 4 12 3z"/><path fill="#00009b" stroke="#00005d" d="M2594 4442l-4 15 33 5 3-15z"/><path fill="#23cba1" stroke="#157a61" d="M2236 4350l0 18 82 8-1-17z"/><path fill="#001062" stroke="#00093b" d="M3144 4476l5 18-1-37-5-16z"/><path fill="#000092" stroke="#000058" d="M2690 3860l-20-9 3 6 19 8z"/><path fill="#2ea16e" stroke="#1c6142" d="M2448 3707l-36-13-12 7 38 14z"/><path fill="#90ea52" stroke="#568c31" d="M2660 4910l2 18 41 43-2-15z"/><path fill="#0090c3" stroke="#005675" d="M2318 4376l-2 16 79 0 1-15z"/><path fill="#bedd18" stroke="#72850f" d="M2703 4971l3 9 45 45-3-4z"/><path fill="#687b0f" stroke="#3e4a09" d="M3506 3890l-9 29 70-61 7-31z"/><path fill="#000090" stroke="#000056" d="M2565 4401l-2 12 37 2 2-13z"/><path fill="#004eea" stroke="#002f8c" d="M2584 4608l-7 28 35 13 5-28z"/><path fill="#0000ab" stroke="#000066" d="M2520 4389l-1 13 46-1 1-12z"/><path fill="#93b61d" stroke="#586d12" d="M2307 3671l-31 0-30 0 37 2z"/><path fill="#001b70" stroke="#001043" d="M3250 4150l-12 16 31-20 13-17z"/><path fill="#a32100" stroke="#621400" d="M3560 3647l29 13 27-58-33-10z"/><path fill="#62d86f" stroke="#3b8143" d="M2160 4295l4 19 70 19-4-18z"/><path fill="#0042ea" stroke="#00288c" d="M3033 3824l25-12 2-11-25 13z"/><path fill="#005a96" stroke="#00365a" d="M2571 3777l-30-15-3 8 31 16z"/><path fill="#00008f" stroke="#000056" d="M2598 4428l-4 14 32 5 3-14z"/><path fill="#00006a" stroke="#000040" d="M2775 3905l-11-1 6 3 9 1z"/><path fill="#7f4100" stroke="#4c2700" d="M3572 3769l3 28 60-68-9-27z"/><path fill="#008cea" stroke="#00548c" d="M3088 3787l31-15 1-15-31 17z"/><path fill="#47a559" stroke="#2a6336" d="M2412 3694l-35-11-16 6 39 12z"/><path fill="#0030ea" stroke="#001d8c" d="M2591 4583l-7 25 33 13 6-26z"/><path fill="#002c93" stroke="#001a58" d="M2623 3814l-26-14 0 8 26 13z"/><path fill="#34e6ab" stroke="#1f8a67" d="M3189 3722l39-18 0-21-40 21z"/><path fill="#000960" stroke="#00063a" d="M3139 4459l5 17-1-35-4-15z"/><path fill="#7ab030" stroke="#49691d" d="M2341 3675l-34-4-24 2 39 6z"/><path fill="#02dae5" stroke="#01838a" d="M2595 4738l-4 30 35 26 3-31z"/><path fill="#0000b2" stroke="#00006b" d="M2921 3892l14-4 5-5-15 5z"/><path fill="#60aa44" stroke="#3a6629" d="M2377 3683l-36-8-19 4 39 10z"/><path fill="#0048be" stroke="#002b72" d="M2396 4377l-1 15 69-2 1-13z"/><path fill="#00007b" stroke="#00004a" d="M2733 3887l-16-5 5 5 15 4z"/><path fill="#0016ea" stroke="#000d8c" d="M2598 4559l-7 24 32 12 6-25z"/><path fill="#00009e" stroke="#00005f" d="M2899 3901l12-2 5-3-13 2z"/><path fill="#000cbd" stroke="#000772" d="M2465 4377l-1 13 56-1 1-13z"/><path fill="#00008b" stroke="#000053" d="M2566 4389l-1 12 37 1 1-11z"/><path fill="#000086" stroke="#000051" d="M2600 4415l-2 13 31 5 2-13z"/><path fill="#000071" stroke="#000044" d="M2754 3898l-12-3 5 4 12 2z"/><path fill="#0000ea" stroke="#00008d" d="M2604 4536l-6 23 31 11 5-23z"/><path fill="#00006b" stroke="#000040" d="M2779 3908l-9-1 6 2 8 0z"/><path fill="#3d6222" stroke="#243b15" d="M3218 4795l6 33 5-70-7-32z"/><path fill="#0025e9" stroke="#00168c" d="M3008 3843l22-10 3-9-23 11z"/><path fill="#0000a5" stroke="#000063" d="M2521 4376l-1 13 46 0 1-12z"/><path fill="#0000de" stroke="#000085" d="M2609 4515l-5 21 30 11 5-21z"/><path fill="#0000c9" stroke="#000079" d="M2940 3883l16-5 5-5-17 6z"/><path fill="#00055e" stroke="#000338" d="M3136 4443l3 16 0-33-4-15z"/><path fill="#337b44" stroke="#1f4a29" d="M3432 3970l-12 27 66-49 11-29z"/><path fill="#0000c9" stroke="#000078" d="M2614 4496l-5 19 30 11 4-19z"/><path fill="#4bf19e" stroke="#2d915f" d="M2623 4823l-1 28 37 36 1-26z"/><path fill="#000086" stroke="#000050" d="M2713 3878l-17-7 5 5 16 6z"/><path fill="#001992" stroke="#000f57" d="M2647 3833l-24-12 2 8 24 11z"/><path fill="#000be7" stroke="#00078a" d="M2984 3859l20-8 4-8-21 9z"/><path fill="#00007e" stroke="#00004b" d="M2602 4402l-2 13 31 5 2-12z"/><path fill="#0000e4" stroke="#000089" d="M2961 3873l18-7 5-7-19 8z"/><path fill="#5ce481" stroke="#37894d" d="M3228 3704l41-17 1-24-42 20z"/><path fill="#008fc1" stroke="#005674" d="M2317 4359l1 17 78 1 0-14z"/><path fill="#a4e539" stroke="#638922" d="M2096 4206l10 21 40 29-9-20z"/><path fill="#0000b4" stroke="#00006c" d="M2619 4478l-5 18 29 11 4-18z"/><path fill="#000a68" stroke="#00063e" d="M3216 4184l-11 14 22-16 11-16z"/><path fill="#00006d" stroke="#000041" d="M2784 3909l-8 0 6 2 8 0z"/><path fill="#26c99d" stroke="#17795e" d="M2234 4333l2 17 81 9-1-15z"/><path fill="#007298" stroke="#00455b" d="M2541 3762l-32-16-4 9 33 15z"/><path fill="#000092" stroke="#000058" d="M2692 3865l-19-8 4 6 19 8z"/><path fill="#000086" stroke="#000050" d="M2567 4377l-1 12 37 2 1-11z"/><path fill="#00b5f0" stroke="#006d90" d="M2600 4708l-5 30 34 25 4-31z"/><path fill="#b23700" stroke="#6b2100" d="M3526 3639l34 8 23-55-39-3z"/><path fill="#000991" stroke="#000657" d="M2670 3851l-21-11 3 7 21 10z"/><path fill="#00009c" stroke="#00005d" d="M2894 3904l11-2 6-3-12 2z"/><path fill="#000072" stroke="#000044" d="M2759 3901l-12-2 6 3 11 2z"/><path fill="#07776e" stroke="#044742" d="M3365 4036l-13 24 55-38 13-25z"/><path fill="#0000a3" stroke="#000062" d="M2623 4462l-4 16 28 11 4-17z"/><path fill="#00b3e9" stroke="#006c8c" d="M3119 3772l32-15 2-17-33 17z"/><path fill="#0000b0" stroke="#00006a" d="M2916 3896l14-4 5-4-14 4z"/><path fill="#0063e9" stroke="#003c8c" d="M3058 3812l28-13 2-12-28 14z"/><path fill="#00007c" stroke="#00004a" d="M2737 3891l-15-4 6 4 14 4z"/><path fill="#0047bc" stroke="#002b71" d="M2396 4363l0 14 69 0-1-13z"/><path fill="#000cbb" stroke="#000770" d="M2464 4364l1 13 56-1 0-11z"/><path fill="#00025b" stroke="#000137" d="M3133 4428l3 15-1-32-2-13z"/><path fill="#0000a4" stroke="#000062" d="M2521 4365l0 11 46 1 0-11z"/><path fill="#004194" stroke="#002759" d="M2597 3800l-28-14 0 8 28 14z"/><path fill="#000097" stroke="#00005b" d="M2626 4447l-3 15 28 10 3-16z"/><path fill="#000079" stroke="#000049" d="M2603 4391l-1 11 31 6 1-12z"/><path fill="#004876" stroke="#002b47" d="M3308 4090l-13 20 43-28 14-22z"/><path fill="#82e158" stroke="#4e8735" d="M3269 3687l43-16 2-27-44 19z"/><path fill="#316430" stroke="#1d3c1d" d="M3211 4761l7 34 4-69-9-31z"/><path fill="#69d666" stroke="#3f803d" d="M2154 4276l6 19 70 20-5-18z"/><path fill="#00008a" stroke="#000053" d="M2629 4433l-3 14 28 9 2-14z"/><path fill="#0093f0" stroke="#005890" d="M2606 4678l-6 30 33 24 5-31z"/><path fill="#000073" stroke="#000045" d="M2764 3904l-11-2 6 3 11 2z"/><path fill="#0000c7" stroke="#000077" d="M2935 3888l16-5 5-5-16 5z"/><path fill="#000084" stroke="#00004f" d="M2567 4366l0 11 37 3 0-11z"/><path fill="#0042e8" stroke="#00288b" d="M3030 3833l25-10 3-11-25 12z"/><path fill="#000087" stroke="#000051" d="M2717 3882l-16-6 5 6 16 5z"/><path fill="#c05600" stroke="#733400" d="M3487 3637l39 2 18-50-43 2z"/><path fill="#002970" stroke="#001843" d="M3262 4132l-12 18 32-21 13-19z"/><path fill="#873f00" stroke="#512600" d="M3562 3744l10 25 54-67-15-23z"/><path fill="#0000ae" stroke="#000068" d="M2911 3899l13-3 6-4-14 4z"/><path fill="#000078" stroke="#000048" d="M2604 4380l-1 11 31 5 1-11z"/><path fill="#000082" stroke="#00004e" d="M2631 4420l-2 13 27 9 2-13z"/><path fill="#777c03" stroke="#474a02" d="M3511 3861l-5 29 68-63 1-30z"/><path fill="#a7dd2f" stroke="#64851c" d="M3312 3671l44-13 5-32-47 18z"/><path fill="#0091c0" stroke="#005773" d="M2316 4344l1 15 79 4-2-14z"/><path fill="#00007d" stroke="#00004b" d="M2742 3895l-14-4 6 5 13 3z"/><path fill="#038f91" stroke="#025657" d="M2509 3746l-35-16-5 9 36 16z"/><path fill="#0000e2" stroke="#000087" d="M2956 3878l18-6 5-6-18 7z"/><path fill="#84ef63" stroke="#4f8f3b" d="M2659 4887l1 23 41 46-2-21z"/><path fill="#0071f0" stroke="#004490" d="M2612 4649l-6 29 32 23 5-30z"/><path fill="#002e92" stroke="#001c58" d="M2623 3821l-26-13 2 9 26 12z"/><path fill="#08dad8" stroke="#058381" d="M3151 3757l35-15 3-20-36 18z"/><path fill="#000cba" stroke="#00076f" d="M2463 4352l1 12 57 1-1-12z"/><path fill="#0025e7" stroke="#00168a" d="M3004 3851l22-9 4-9-22 10z"/><path fill="#30f2ba" stroke="#1d9170" d="M2626 4794l-3 29 37 38 1-30z"/><path fill="#0000a5" stroke="#000063" d="M2520 4353l1 12 46 1-1-11z"/><path fill="#0047bb" stroke="#002a70" d="M2394 4349l2 14 68 1-1-12z"/><path fill="#0008e5" stroke="#000589" d="M2979 3866l20-7 5-8-20 8z"/><path fill="#000075" stroke="#000046" d="M2770 3907l-11-2 7 3 10 1z"/><path fill="#573400" stroke="#341f00" d="M3216 4971l-2 25 17-78 0-27z"/><path fill="#000092" stroke="#000058" d="M2696 3871l-19-8 6 7 18 6z"/><path fill="#ca7c00" stroke="#794a00" d="M3445 3639l42-2 14-46-46 8z"/><path fill="#25663d" stroke="#163d25" d="M3202 4728l9 33 2-66-9-31z"/><path fill="#cdd605" stroke="#7b8103" d="M3356 3658l45-11 7-36-47 15z"/><path fill="#2ac897" stroke="#19785b" d="M2230 4315l4 18 82 11-4-16z"/><path fill="#0087e9" stroke="#00518c" d="M3086 3799l29-12 4-15-31 15z"/><path fill="#000079" stroke="#000049" d="M2633 4408l-2 12 27 9 1-12z"/><path fill="#0053f0" stroke="#003290" d="M2617 4621l-5 28 31 22 5-28z"/><path fill="#d3a800" stroke="#7e6500" d="M3401 3647l44-8 10-40-47 12z"/><path fill="#001991" stroke="#000f57" d="M2649 3840l-24-11 4 8 23 10z"/><path fill="#000991" stroke="#000657" d="M2673 3857l-21-10 5 8 20 8z"/><path fill="#000086" stroke="#000050" d="M2566 4355l1 11 37 3-1-10z"/><path fill="#005b95" stroke="#003759" d="M2569 3786l-31-16 0 10 31 14z"/><path fill="#0035f0" stroke="#002090" d="M2623 4595l-6 26 31 22 5-27z"/><path fill="#000076" stroke="#000047" d="M2604 4369l0 11 31 5 0-10z"/><path fill="#0000c4" stroke="#000076" d="M2930 3892l15-4 6-5-16 5z"/><path fill="#0000ab" stroke="#000067" d="M2905 3902l12-2 7-4-13 3z"/><path fill="#bde722" stroke="#728b15" d="M2701 4956l2 15 45 50-2-11z"/><path fill="#000077" stroke="#000047" d="M2776 3909l-10-1 8 2 8 1z"/><path fill="#00007e" stroke="#00004c" d="M2747 3899l-13-3 7 3 12 3z"/><path fill="#001bf1" stroke="#001090" d="M2629 4570l-6 25 30 21 4-26z"/><path fill="#001568" stroke="#000d3e" d="M3227 4168l-11 16 22-18 12-16z"/><path fill="#000088" stroke="#000051" d="M2722 3887l-16-5 7 5 15 4z"/><path fill="#b4e327" stroke="#6c8818" d="M2084 4184l12 22 41 30-12-21z"/><path fill="#0000f1" stroke="#000091" d="M2634 4547l-5 23 28 20 5-23z"/><path fill="#000074" stroke="#000046" d="M2634 4396l-1 12 26 9 1-12z"/><path fill="#437c35" stroke="#284b20" d="M3443 3943l-11 27 65-51 9-29z"/><path fill="#1a674a" stroke="#0f3e2c" d="M3194 4696l8 32 2-64-9-29z"/><path fill="#1b9c7c" stroke="#105e4a" d="M2474 3730l-36-15-7 9 38 15z"/><path fill="#0000e9" stroke="#00008c" d="M2639 4526l-5 21 28 20 4-23z"/><path fill="#0000d4" stroke="#00007f" d="M2643 4507l-4 19 27 18 4-20z"/><path fill="#0063e8" stroke="#003b8b" d="M3055 3823l26-11 5-13-28 13z"/><path fill="#0000a7" stroke="#000064" d="M2518 4342l2 11 46 2-2-10z"/><path fill="#2ee5b0" stroke="#1b8a6a" d="M3186 3742l38-15 4-23-39 18z"/><path fill="#0012b8" stroke="#000b6f" d="M2461 4339l2 13 57 1-2-11z"/><path fill="#73d45b" stroke="#457f36" d="M2146 4256l8 20 71 21-7-17z"/><path fill="#0000be" stroke="#000072" d="M2647 4489l-4 18 27 17 3-19z"/><path fill="#0093be" stroke="#005872" d="M2312 4328l4 16 78 5-2-14z"/><path fill="#157a61" stroke="#0d493a" d="M3377 4012l-12 24 55-39 12-27z"/><path fill="#0000df" stroke="#000086" d="M2951 3883l17-5 6-6-18 6z"/><path fill="#15f3d7" stroke="#0c9281" d="M2629 4763l-3 31 35 37 3-31z"/><path fill="#004cb9" stroke="#002e6f" d="M2392 4335l2 14 69 3-2-13z"/><path fill="#0000ae" stroke="#000068" d="M2651 4472l-4 17 26 16 3-17z"/><path fill="#000075" stroke="#000046" d="M2603 4359l1 10 31 6-1-10z"/><path fill="#0e6756" stroke="#083e33" d="M3185 4666l9 30 1-61-9-28z"/><path fill="#000093" stroke="#000058" d="M2701 3876l-18-6 6 6 17 6z"/><path fill="#000088" stroke="#000052" d="M2564 4345l2 10 37 4-1-10z"/><path fill="#000074" stroke="#000045" d="M2635 4385l-1 11 26 9 1-11z"/><path fill="#000080" stroke="#00004d" d="M2753 3902l-12-3 7 4 11 2z"/><path fill="#005976" stroke="#003547" d="M3321 4068l-13 22 44-30 13-24z"/><path fill="#924200" stroke="#572700" d="M3546 3723l16 21 49-65-22-19z"/><path fill="#00abe8" stroke="#00678b" d="M3115 3787l32-13 4-17-32 15z"/><path fill="#003ee7" stroke="#00258a" d="M3026 3842l24-9 5-10-25 10z"/><path fill="#004393" stroke="#002858" d="M2597 3808l-28-14 2 10 28 13z"/><path fill="#0000a1" stroke="#000061" d="M2654 4456l-3 16 25 16 3-16z"/><path fill="#0008e2" stroke="#000588" d="M2974 3872l19-6 6-7-20 7z"/><path fill="#0000c1" stroke="#000074" d="M2924 3896l14-4 7-4-15 4z"/><path fill="#0021e5" stroke="#001489" d="M2999 3859l21-8 6-9-22 9z"/><path fill="#000089" stroke="#000052" d="M2728 3891l-15-4 7 5 14 4z"/><path fill="#2fc791" stroke="#1c7757" d="M2225 4297l5 18 82 13-4-16z"/><path fill="#000094" stroke="#000059" d="M2656 4442l-2 14 25 16 2-15z"/><path fill="#046160" stroke="#023a3a" d="M3177 4637l8 29 1-59-9-26z"/><path fill="#369f64" stroke="#20603c" d="M2438 3715l-38-14-9 8 40 15z"/><path fill="#00386f" stroke="#002243" d="M3275 4113l-13 19 33-22 13-20z"/><path fill="#000992" stroke="#000657" d="M2677 3863l-20-8 6 7 20 8z"/><path fill="#007696" stroke="#00475a" d="M2538 3770l-33-15-1 10 34 15z"/><path fill="#827300" stroke="#4e4500" d="M3511 3833l0 28 64-64-3-28z"/><path fill="#71f27a" stroke="#449149" d="M2660 4861l-1 26 40 48 0-25z"/><path fill="#002e92" stroke="#001c57" d="M2625 3829l-26-12 5 9 25 11z"/><path fill="#00007f" stroke="#00004c" d="M2759 3905l-11-2 8 3 10 2z"/><path fill="#50e38c" stroke="#308854" d="M3224 3727l39-14 6-26-41 17z"/><path fill="#000072" stroke="#000045" d="M2635 4375l0 10 26 9 0-10z"/><path fill="#00d3f3" stroke="#007e92" d="M2633 4732l-4 31 35 37 3-32z"/><path fill="#001991" stroke="#000f57" d="M2652 3847l-23-10 5 8 23 10z"/><path fill="#00008c" stroke="#000054" d="M2658 4429l-2 13 25 15 1-14z"/><path fill="#0000ac" stroke="#000067" d="M2515 4331l3 11 46 3-2-10z"/><path fill="#5b3f00" stroke="#362600" d="M3216 4941l0 30 15-80-2-30z"/><path fill="#005466" stroke="#00323d" d="M3169 4610l8 27 0-56-8-24z"/><path fill="#0017b7" stroke="#000e6e" d="M2458 4327l3 12 57 3-3-11z"/><path fill="#000077" stroke="#000047" d="M2602 4349l1 10 31 6-1-9z"/><path fill="#0000dc" stroke="#000084" d="M2945 3888l16-5 7-5-17 5z"/><path fill="#00008d" stroke="#000055" d="M2562 4335l2 10 38 4-2-9z"/><path fill="#0083e7" stroke="#004f8b" d="M3081 3812l29-11 5-14-29 12z"/><path fill="#0051b8" stroke="#00316f" d="M2388 4321l4 14 69 4-3-12z"/><path fill="#009bbd" stroke="#005d72" d="M2308 4312l4 16 80 7-4-14z"/><path fill="#000094" stroke="#000059" d="M2706 3882l-17-6 7 6 17 5z"/><path fill="#0000be" stroke="#000072" d="M2917 3900l13-4 8-4-14 4z"/><path fill="#000083" stroke="#00004e" d="M2659 4417l-1 12 24 14 2-13z"/><path fill="#00008b" stroke="#000053" d="M2734 3896l-14-4 8 4 13 3z"/><path fill="#004865" stroke="#002b3d" d="M3162 4585l7 25 0-53-8-23z"/><path fill="#000081" stroke="#00004d" d="M2766 3908l-10-2 9 3 9 1z"/><path fill="#50a34e" stroke="#30622f" d="M2400 3701l-39-12-12 7 42 13z"/><path fill="#00b0f4" stroke="#006a92" d="M2638 4701l-5 31 34 36 3-32z"/><path fill="#002267" stroke="#00153e" d="M3239 4151l-12 17 23-18 12-18z"/><path fill="#02d2dd" stroke="#017e84" d="M3147 3774l34-13 5-19-35 15z"/><path fill="#9f4c00" stroke="#5f2e00" d="M3524 3706l22 17 43-63-29-13z"/><path fill="#000071" stroke="#000044" d="M2634 4365l1 10 26 9-1-10z"/><path fill="#c7e213" stroke="#77870c" d="M2070 4160l14 24 41 31-12-23z"/><path fill="#0007df" stroke="#000486" d="M2968 3878l18-6 7-6-19 6z"/><path fill="#003e64" stroke="#00253c" d="M3155 4561l7 24-1-51-6-21z"/><path fill="#76e062" stroke="#47863b" d="M3263 3713l41-11 8-31-43 16z"/><path fill="#80d34d" stroke="#4d7f2e" d="M2137 4236l9 20 72 24-9-19z"/><path fill="#517e29" stroke="#314c19" d="M3450 3915l-7 28 63-53 5-29z"/><path fill="#005ee6" stroke="#00398a" d="M3050 3833l26-9 5-12-26 11z"/><path fill="#00007e" stroke="#00004c" d="M2660 4405l-1 12 25 13 0-12z"/><path fill="#005b94" stroke="#003659" d="M2569 3794l-31-14 2 10 31 14z"/><path fill="#000083" stroke="#00004f" d="M2774 3910l-9-1 9 3 8 0z"/><path fill="#008ef4" stroke="#005593" d="M2643 4671l-5 30 32 35 4-31z"/><path fill="#000792" stroke="#000458" d="M2683 3870l-20-8 7 7 19 7z"/><path fill="#0020e2" stroke="#001388" d="M2993 3866l21-7 6-8-21 8z"/><path fill="#00007d" stroke="#00004b" d="M2600 4340l2 9 31 7-2-10z"/><path fill="#07928c" stroke="#045854" d="M2505 3755l-36-16-2 10 37 16z"/><path fill="#003de4" stroke="#002589" d="M3020 3851l23-8 7-10-24 9z"/><path fill="#b4ee32" stroke="#6c8f1e" d="M2699 4935l2 21 45 54-1-17z"/><path fill="#39c686" stroke="#227751" d="M2218 4280l7 17 83 15-6-16z"/><path fill="#003563" stroke="#00203b" d="M3149 4539l6 22 0-48-6-19z"/><path fill="#0000b5" stroke="#00006d" d="M2511 4320l4 11 47 4-3-10z"/><path fill="#6ca837" stroke="#416521" d="M2361 3689l-39-10-16 6 43 11z"/><path fill="#00008c" stroke="#000054" d="M2741 3899l-13-3 8 5 12 2z"/><path fill="#237a53" stroke="#154932" d="M3388 3986l-11 26 55-42 11-27z"/><path fill="#0000d8" stroke="#000082" d="M2938 3892l15-4 8-5-16 5z"/><path fill="#0020b6" stroke="#00136d" d="M2453 4315l5 12 57 4-4-11z"/><path fill="#006cf4" stroke="#004193" d="M2648 4643l-5 28 31 34 4-30z"/><path fill="#56f497" stroke="#33925a" d="M2661 4831l-1 30 39 49 1-29z"/><path fill="#000093" stroke="#000058" d="M2559 4325l3 10 38 5-3-10z"/><path fill="#000095" stroke="#00005a" d="M2713 3887l-17-5 9 5 15 5z"/><path fill="#e1c100" stroke="#877400" d="M2746 5010l2 11 52 54-1-6z"/><path fill="#016b71" stroke="#014044" d="M3333 4045l-12 23 44-32 12-24z"/><path fill="#00007d" stroke="#00004b" d="M2661 4394l-1 11 24 13 1-11z"/><path fill="#001991" stroke="#000f57" d="M2657 3855l-23-10 7 9 22 8z"/><path fill="#98dc3d" stroke="#5b8424" d="M3304 3702l41-10 11-34-44 13z"/><path fill="#004df5" stroke="#002e93" d="M2653 4616l-5 27 30 32 4-28z"/><path fill="#004392" stroke="#002858" d="M2599 3817l-28-13 5 10 28 12z"/><path fill="#ad6000" stroke="#683900" d="M3496 3693l28 13 36-59-34-8z"/><path fill="#002c61" stroke="#001b3a" d="M3144 4519l5 20 0-45-5-18z"/><path fill="#550c00" stroke="#330700" d="M3186 5074l-8 15 30-73 6-20z"/><path fill="#000073" stroke="#000045" d="M2633 4356l1 9 26 9-1-10z"/><path fill="#876e00" stroke="#514200" d="M3507 3806l4 27 61-64-10-25z"/><path fill="#8aad1e" stroke="#536812" d="M2322 3679l-39-6-20 4 43 8z"/><path fill="#005ab7" stroke="#00366e" d="M2383 4307l5 14 70 6-5-12z"/><path fill="#0032f5" stroke="#001e93" d="M2657 4590l-4 26 29 31 4-27z"/><path fill="#5e4d00" stroke="#392e00" d="M3214 4909l2 32 13-80-5-33z"/><path fill="#00a7e6" stroke="#00648a" d="M3110 3801l30-10 7-17-32 13z"/><path fill="#002e92" stroke="#001c57" d="M2629 3837l-25-11 6 9 24 10z"/><path fill="#0018f6" stroke="#000e93" d="M2662 4567l-5 23 29 30 4-25z"/><path fill="#25e4b8" stroke="#16896e" d="M3181 3761l35-11 8-23-38 15z"/><path fill="#00a3bc" stroke="#006271" d="M2302 4296l6 16 80 9-5-14z"/><path fill="#baa300" stroke="#706200" d="M2246 3671l-34 3-31 0 40 0z"/><path fill="#00466f" stroke="#002a43" d="M3287 4093l-12 20 33-23 13-22z"/><path fill="#0000f6" stroke="#000094" d="M2666 4544l-4 23 28 28 3-24z"/><path fill="#a7b406" stroke="#646c04" d="M2283 3673l-37-2-25 3 42 3z"/><path fill="#00008c" stroke="#000054" d="M2748 3903l-12-2 10 3 10 2z"/><path fill="#0000ee" stroke="#00008f" d="M2670 4524l-4 20 27 27 3-22z"/><path fill="#00275f" stroke="#001739" d="M3140 4500l4 19 0-43-5-17z"/><path fill="#0007dc" stroke="#000484" d="M2961 3883l17-4 8-7-18 6z"/><path fill="#0000dd" stroke="#000084" d="M2673 4505l-3 19 26 25 3-20z"/><path fill="#b5d71a" stroke="#6d8110" d="M3345 3692l41-6 15-39-45 11z"/><path fill="#00007c" stroke="#00004a" d="M2661 4384l0 10 24 13 0-11z"/><path fill="#bb7800" stroke="#704800" d="M3463 3686l33 7 30-54-39-2z"/><path fill="#0000cc" stroke="#00007a" d="M2676 4488l-3 17 26 24 2-18z"/><path fill="#000082" stroke="#00004e" d="M2597 4330l3 10 31 6-2-9z"/><path fill="#000793" stroke="#000458" d="M2689 3876l-19-7 9 7 17 6z"/><path fill="#0000d5" stroke="#000080" d="M2930 3896l14-3 9-5-15 4z"/><path fill="#0000ba" stroke="#000070" d="M2679 4472l-3 16 25 23 2-17z"/><path fill="#000097" stroke="#00005b" d="M2720 3892l-15-5 9 6 14 3z"/><path fill="#007ee5" stroke="#004c8a" d="M3076 3824l27-9 7-14-29 11z"/><path fill="#cfc100" stroke="#7c7400" d="M3386 3686l40-2 19-45-44 8z"/><path fill="#c79900" stroke="#775c00" d="M3426 3684l37 2 24-49-42 2z"/><path fill="#0000b8" stroke="#00006e" d="M2507 4309l4 11 48 5-4-10z"/><path fill="#219b75" stroke="#145d46" d="M2469 3739l-38-15-3 10 39 15z"/><path fill="#00225d" stroke="#001438" d="M3136 4482l4 18-1-41-3-16z"/><path fill="#0020df" stroke="#001386" d="M2986 3872l20-5 8-8-21 7z"/><path fill="#007896" stroke="#00485a" d="M2538 3780l-34-15 2 11 34 14z"/><path fill="#000079" stroke="#000049" d="M2631 4346l2 10 26 8-1-9z"/><path fill="#00008e" stroke="#000055" d="M2756 3906l-10-2 10 4 9 1z"/><path fill="#3af5b3" stroke="#23936b" d="M2664 4800l-3 31 39 50 1-32z"/><path fill="#0000ad" stroke="#000068" d="M2681 4457l-2 15 24 22 2-16z"/><path fill="#00009c" stroke="#00005e" d="M2555 4315l4 10 38 5-3-9z"/><path fill="#002f67" stroke="#001c3e" d="M3251 4133l-12 18 23-19 13-19z"/><path fill="#0028b5" stroke="#00186d" d="M2448 4302l5 13 58 5-4-11z"/><path fill="#8fd23d" stroke="#567e24" d="M2125 4215l12 21 72 25-10-19z"/><path fill="#005ae4" stroke="#003689" d="M3043 3843l25-8 8-11-26 9z"/><path fill="#003de1" stroke="#002487" d="M3014 3859l22-7 7-9-23 8z"/><path fill="#60811d" stroke="#3a4e11" d="M3453 3887l-3 28 61-54 0-28z"/><path fill="#45c57a" stroke="#2a7649" d="M2209 4261l9 19 84 16-8-16z"/><path fill="#00007a" stroke="#000049" d="M2660 4374l1 10 24 12-1-10z"/><path fill="#ddd500" stroke="#858000" d="M2055 4136l15 24 43 32-15-23z"/><path fill="#47e294" stroke="#2a8759" d="M3216 3750l37-10 10-27-39 14z"/><path fill="#0000a5" stroke="#000063" d="M2682 4443l-1 14 24 21 2-15z"/><path fill="#001a92" stroke="#000f58" d="M2663 3862l-22-8 9 8 20 7z"/><path fill="#5e5d00" stroke="#393800" d="M3209 4874l5 35 10-81-6-33z"/><path fill="#00c9e1" stroke="#007987" d="M3140 3791l33-10 8-20-34 13z"/><path fill="#001d5a" stroke="#001136" d="M3134 4466l2 16 0-39-3-15z"/><path fill="#0065b7" stroke="#003c6e" d="M2376 4293l7 14 70 8-5-13z"/><path fill="#907100" stroke="#564400" d="M3496 3783l11 23 55-62-16-21z"/><path fill="#000091" stroke="#000057" d="M2765 3909l-9-1 10 2 8 2z"/><path fill="#0007d8" stroke="#000482" d="M2953 3888l16-4 9-5-17 4z"/><path fill="#000099" stroke="#00005c" d="M2728 3896l-14-3 10 5 12 3z"/><path fill="#0000d1" stroke="#00007e" d="M2921 3900l13-3 10-4-14 3z"/><path fill="#a4f145" stroke="#63912a" d="M2699 4910l0 25 46 58-1-24z"/><path fill="#327c46" stroke="#1e4a2a" d="M3397 3959l-9 27 55-43 7-28z"/><path fill="#005d94" stroke="#003859" d="M2571 3804l-31-14 5 11 31 13z"/><path fill="#00009b" stroke="#00005d" d="M2684 4430l-2 13 25 20 1-14z"/><path fill="#07b1af" stroke="#046a69" d="M2294 4280l8 16 81 11-7-14z"/><path fill="#00008c" stroke="#000054" d="M2594 4321l3 9 32 7-3-9z"/><path fill="#000795" stroke="#000459" d="M2696 3882l-17-6 9 7 17 4z"/><path fill="#002e92" stroke="#001c57" d="M2634 3845l-24-10 8 10 23 9z"/><path fill="#1ef6cf" stroke="#12937c" d="M2667 4768l-3 32 37 49 2-32z"/><path fill="#004392" stroke="#002858" d="M2604 3826l-28-12 7 10 27 11z"/><path fill="#0f7664" stroke="#09473c" d="M3344 4020l-11 25 44-33 11-26z"/><path fill="#00007f" stroke="#00004c" d="M2629 4337l2 9 27 9-2-9z"/><path fill="#001a58" stroke="#001035" d="M3132 4450l2 16-1-38-1-14z"/><path fill="#00007d" stroke="#00004b" d="M2659 4364l1 10 24 12-1-10z"/><path fill="#3c9e5e" stroke="#245f38" d="M2431 3724l-40-15-5 10 42 15z"/><path fill="#0006b7" stroke="#00046e" d="M2501 4297l6 12 48 6-5-11z"/><path fill="#000097" stroke="#00005a" d="M2684 4418l0 12 24 19 0-12z"/><path fill="#009ee4" stroke="#005f89" d="M3103 3815l29-8 8-16-30 10z"/><path fill="#d67300" stroke="#814500" d="M2799 5069l1 6 59 51 1 0z"/><path fill="#001fdb" stroke="#001384" d="M2978 3879l19-5 9-7-20 5z"/><path fill="#67de70" stroke="#3e8543" d="M3253 3740l38-8 13-30-41 11z"/><path fill="#0000a9" stroke="#000065" d="M2550 4304l5 11 39 6-5-10z"/><path fill="#00566f" stroke="#003343" d="M3299 4071l-12 22 34-25 12-23z"/><path fill="#00009c" stroke="#00005e" d="M2736 3901l-12-3 10 4 12 2z"/><path fill="#00235f" stroke="#001539" d="M3223 4167l-11 17 15-16 12-17z"/><path fill="#55630b" stroke="#333c07" d="M3203 4839l6 35 9-79-7-34z"/><path fill="#0033b5" stroke="#001f6d" d="M2441 4289l7 13 59 7-6-12z"/><path fill="#581100" stroke="#350a00" d="M3190 5052l-4 22 28-78 2-25z"/><path fill="#0b9688" stroke="#075a51" d="M2504 3765l-37-16 2 12 37 15z"/><path fill="#02e0ec" stroke="#01878d" d="M2670 4736l-3 32 36 49 3-33z"/><path fill="#001a93" stroke="#000f58" d="M2670 3869l-20-7 9 8 20 6z"/><path fill="#e9d200" stroke="#8c7e00" d="M2745 4993l1 17 53 59 0-13z"/><path fill="#9b7700" stroke="#5d4800" d="M3480 3763l16 20 50-60-22-17z"/><path fill="#003cde" stroke="#002485" d="M3006 3867l21-6 9-9-22 7z"/><path fill="#000ad5" stroke="#000680" d="M2944 3893l15-4 10-5-16 4z"/><path fill="#0079e3" stroke="#004988" d="M3068 3835l26-7 9-13-27 9z"/><path fill="#000091" stroke="#000057" d="M2685 4407l-1 11 24 19 1-12z"/><path fill="#1ce3bf" stroke="#118873" d="M3173 3781l33-8 10-23-35 11z"/><path fill="#000797" stroke="#00045b" d="M2705 3887l-17-4 10 6 16 4z"/><path fill="#0059e1" stroke="#003587" d="M3036 3852l23-6 9-11-25 8z"/><path fill="#6e8614" stroke="#42500c" d="M3453 3861l0 26 58-54-4-27z"/><path fill="#51c56d" stroke="#317641" d="M2199 4242l10 19 85 19-9-17z"/><path fill="#0073b7" stroke="#00456e" d="M2368 4278l8 15 72 9-7-13z"/><path fill="#a1d22a" stroke="#617e19" d="M2113 4192l12 23 74 27-12-20z"/><path fill="#000095" stroke="#000059" d="M2589 4311l5 10 32 7-4-10z"/><path fill="#00bef6" stroke="#007294" d="M2674 4705l-4 31 36 48 3-33z"/><path fill="#000083" stroke="#00004f" d="M2658 4355l1 9 24 12-1-9z"/><path fill="#00009f" stroke="#00005f" d="M2746 3904l-12-2 11 4 11 2z"/><path fill="#003e67" stroke="#00253e" d="M3262 4113l-11 20 24-20 12-20z"/><path fill="#84da4f" stroke="#4f8330" d="M3291 3732l38-5 16-35-41 10z"/><path fill="#000089" stroke="#000052" d="M2626 4328l3 9 27 9-3-9z"/><path fill="#4a6518" stroke="#2c3d0e" d="M3196 4803l7 36 8-78-9-33z"/><path fill="#002c93" stroke="#001a58" d="M2641 3854l-23-9 9 9 23 8z"/><path fill="#12bca3" stroke="#0b7162" d="M2285 4263l9 17 82 13-8-15z"/><path fill="#5aa243" stroke="#366128" d="M2391 3709l-42-13-7 10 44 13z"/><path fill="#8df45f" stroke="#559239" d="M2700 4881l-1 29 45 59 0-27z"/><path fill="#009bf7" stroke="#005d94" d="M2678 4675l-4 30 35 46 2-32z"/><path fill="#000090" stroke="#000056" d="M2685 4396l0 11 24 18 0-12z"/><path fill="#e1b700" stroke="#876e00" d="M2039 4109l16 27 43 33-15-25z"/><path fill="#007895" stroke="#004859" d="M2540 3790l-34-14 6 12 33 13z"/><path fill="#a88600" stroke="#655000" d="M3458 3747l22 16 44-57-28-13z"/><path fill="#001fd8" stroke="#001381" d="M2969 3884l18-4 10-6-19 5z"/><path fill="#3f7e3b" stroke="#264c23" d="M3402 3933l-5 26 53-44 3-28z"/><path fill="#0079f7" stroke="#004894" d="M2682 4647l-4 28 33 44 3-30z"/><path fill="#0012b7" stroke="#000b6e" d="M2495 4285l6 12 49 7-6-11z"/><path fill="#000899" stroke="#00055c" d="M2714 3893l-16-4 12 6 14 3z"/><path fill="#0000b5" stroke="#00006d" d="M2544 4293l6 11 39 7-4-10z"/><path fill="#00c1e3" stroke="#007488" d="M3132 3807l31-8 10-18-33 10z"/><path fill="#004393" stroke="#002858" d="M2610 3835l-27-11 9 11 26 10z"/><path fill="#005ef8" stroke="#003895" d="M2686 4620l-4 27 32 42 3-29z"/><path fill="#000ad1" stroke="#00067d" d="M2934 3897l14-3 11-5-15 4z"/><path fill="#9ed430" stroke="#5f7f1d" d="M3329 3727l36-1 21-40-41 6z"/><path fill="#001895" stroke="#000e59" d="M2679 3876l-20-6 11 8 18 5z"/><path fill="#0043f8" stroke="#002895" d="M2690 4595l-4 25 31 40 3-28z"/><path fill="#005d93" stroke="#003858" d="M2576 3814l-31-13 8 12 30 11z"/><path fill="#3e6625" stroke="#253d16" d="M3188 4768l8 35 6-75-8-32z"/><path fill="#0027f9" stroke="#001895" d="M2693 4571l-3 24 30 37 3-25z"/><path fill="#1c7757" stroke="#114734" d="M3353 3995l-9 25 44-34 9-27z"/><path fill="#0010f9" stroke="#000a95" d="M2696 4549l-3 22 30 36 2-23z"/><path fill="#3be09e" stroke="#23865f" d="M3206 3773l35-7 12-26-37 10z"/><path fill="#c52b00" stroke="#761a00" d="M2860 5126l-1 0 65 40 4 6z"/><path fill="#0042b5" stroke="#00276d" d="M2433 4276l8 13 60 8-6-12z"/><path fill="#0000fa" stroke="#000096" d="M2699 4529l-3 20 29 35 2-22z"/><path fill="#b59c00" stroke="#6d5d00" d="M3431 3735l27 12 38-54-33-7z"/><path fill="#000089" stroke="#000052" d="M2656 4346l2 9 24 12-2-10z"/><path fill="#000093" stroke="#000058" d="M2684 4386l1 10 24 17-1-11z"/><path fill="#0000f6" stroke="#000093" d="M2701 4511l-2 18 28 33 2-21z"/><path fill="#b1cc14" stroke="#6a7a0c" d="M3365 3726l35 2 26-44-40 2z"/><path fill="#003bdb" stroke="#002383" d="M2997 3874l20-5 10-8-21 6z"/><path fill="#259a71" stroke="#165c44" d="M2467 3749l-39-15 2 13 39 14z"/><path fill="#0000a5" stroke="#000063" d="M2766 3910l-9-1 13 2 7 2z"/><path fill="#bcba00" stroke="#717000" d="M3400 3728l31 7 32-49-37-2z"/><path fill="#0099e2" stroke="#005c87" d="M3094 3828l28-6 10-15-29 8z"/><path fill="#0000e4" stroke="#000089" d="M2703 4494l-2 17 28 30 2-18z"/><path fill="#316732" stroke="#1d3e1e" d="M3180 4735l8 33 6-72-9-30z"/><path fill="#7a8d0e" stroke="#495408" d="M3447 3836l6 25 54-55-11-23z"/><path fill="#026769" stroke="#013e3f" d="M3310 4047l-11 24 34-26 11-25z"/><path fill="#0000a2" stroke="#000061" d="M2585 4301l4 10 33 7-4-10z"/><path fill="#00305f" stroke="#001d39" d="M3235 4149l-12 18 16-16 12-18z"/><path fill="#000092" stroke="#000058" d="M2622 4318l4 10 27 9-3-10z"/><path fill="#7aa627" stroke="#496418" d="M2349 3696l-43-11-10 10 46 11z"/><path fill="#0057dd" stroke="#003485" d="M3027 3861l23-6 9-9-23 6z"/><path fill="#00059c" stroke="#00035e" d="M2724 3898l-14-3 12 5 12 2z"/><path fill="#0081b7" stroke="#004e6e" d="M2359 4263l9 15 73 11-8-13z"/><path fill="#0074e0" stroke="#004686" d="M3059 3846l26-6 9-12-26 7z"/><path fill="#0000d7" stroke="#000081" d="M2705 4478l-2 16 28 29 1-18z"/><path fill="#5c1900" stroke="#370f00" d="M3192 5024l-2 28 26-81 0-30z"/><path fill="#002c94" stroke="#001b59" d="M2650 3862l-23-8 11 10 21 6z"/><path fill="#63c55b" stroke="#3b7637" d="M2187 4222l12 20 86 21-10-18z"/><path fill="#72f57b" stroke="#44934a" d="M2701 4849l-1 32 44 61 1-31z"/><path fill="#25673e" stroke="#163e25" d="M3173 4703l7 32 5-69-8-29z"/><path fill="#0022d4" stroke="#00147f" d="M2959 3889l17-4 11-5-18 4z"/><path fill="#0000ce" stroke="#00007c" d="M2707 4463l-2 15 27 27 1-16z"/><path fill="#001897" stroke="#000e5b" d="M2688 3883l-18-5 12 7 16 4z"/><path fill="#21bc95" stroke="#147159" d="M2275 4245l10 18 83 15-9-15z"/><path fill="#000095" stroke="#00005a" d="M2683 4376l1 10 24 16-1-10z"/><path fill="#b7d215" stroke="#6e7e0c" d="M2098 4169l15 23 74 30-13-21z"/><path fill="#e4e802" stroke="#898b01" d="M2744 4969l1 24 54 63-1-20z"/><path fill="#420000" stroke="#270000" d="M3142 5141l-8 11 44-63 8-15z"/><path fill="#59dc7d" stroke="#35844b" d="M3241 3766l34-4 16-30-38 8z"/><path fill="#13e1c6" stroke="#0c8777" d="M3163 3799l31-5 12-21-33 8z"/><path fill="#1b6648" stroke="#103d2b" d="M3165 4672l8 31 4-66-8-27z"/><path fill="#004c67" stroke="#002e3e" d="M3274 4091l-12 22 25-20 12-22z"/><path fill="#0020b7" stroke="#00136e" d="M2487 4273l8 12 49 8-6-11z"/><path fill="#0000bc" stroke="#000071" d="M2538 4282l6 11 41 8-6-11z"/><path fill="#0000c5" stroke="#000076" d="M2708 4449l-1 14 26 26 1-14z"/><path fill="#000093" stroke="#000058" d="M2653 4337l3 9 24 11-2-9z"/><path fill="#4d8231" stroke="#2e4e1d" d="M3404 3906l-2 27 51-46 0-26z"/><path fill="#00059f" stroke="#00035f" d="M2734 3902l-12-2 13 4 10 2z"/><path fill="#0d9785" stroke="#085b50" d="M2506 3776l-37-15 6 14 37 13z"/><path fill="#004393" stroke="#002858" d="M2618 3845l-26-10 11 11 24 8z"/><path fill="#9aac0c" stroke="#5c6707" d="M2306 3685l-43-8-14 9 47 9z"/><path fill="#e07c00" stroke="#874a00" d="M2799 5056l0 13 61 57 1-8z"/><path fill="#126651" stroke="#0b3d30" d="M3158 4644l7 28 4-62-7-25z"/><path fill="#889609" stroke="#525a05" d="M3436 3814l11 22 49-53-16-20z"/><path fill="#0053b5" stroke="#00326d" d="M2425 4261l8 15 62 9-8-12z"/><path fill="#003ad7" stroke="#002381" d="M2987 3880l19-5 11-6-20 5z"/><path fill="#e19700" stroke="#875a00" d="M2023 4082l16 27 44 35-16-26z"/><path fill="#0000c0" stroke="#000073" d="M2708 4437l0 12 26 26 0-14z"/><path fill="#096459" stroke="#053c35" d="M3152 4617l6 27 4-59-7-24z"/><path fill="#005d94" stroke="#003859" d="M2583 3824l-30-11 10 13 29 9z"/><path fill="#56f698" stroke="#34945b" d="M2703 4817l-2 32 44 62 1-34z"/><path fill="#0000a0" stroke="#000060" d="M2618 4308l4 10 28 9-4-10z"/><path fill="#007a95" stroke="#004959" d="M2545 3801l-33-13 9 14 32 11z"/><path fill="#419d57" stroke="#275e34" d="M2428 3734l-42-15 1 14 43 14z"/><path fill="#29794c" stroke="#19482e" d="M3360 3969l-7 26 44-36 5-26z"/><path fill="#00bbe0" stroke="#007086" d="M3122 3822l29-6 12-17-31 8z"/><path fill="#001899" stroke="#000f5c" d="M2698 3889l-16-4 13 6 15 4z"/><path fill="#0000b3" stroke="#00006b" d="M2579 4290l6 11 33 7-5-10z"/><path fill="#0021d0" stroke="#00147d" d="M2948 3894l16-4 12-5-17 4z"/><path fill="#72d85f" stroke="#448139" d="M3275 3762l34-1 20-34-38 5z"/><path fill="#002d95" stroke="#001b5a" d="M2659 3870l-21-6 13 9 19 5z"/><path fill="#00009c" stroke="#00005e" d="M2682 4367l1 9 24 16-1-10z"/><path fill="#0005a2" stroke="#000361" d="M2745 3906l-10-2 13 3 9 2z"/><path fill="#015a5f" stroke="#013639" d="M3146 4593l6 24 3-56-6-22z"/><path fill="#b29900" stroke="#6b5c00" d="M2263 3677l-42-3-18 7 46 5z"/><path fill="#0056da" stroke="#003383" d="M3017 3869l21-5 12-9-23 6z"/><path fill="#0093b7" stroke="#00586e" d="M2349 4247l10 16 74 13-8-15z"/><path fill="#0097df" stroke="#005a86" d="M3085 3840l26-5 11-13-28 6z"/><path fill="#0000ba" stroke="#000070" d="M2709 4425l-1 12 26 24 1-13z"/><path fill="#0f705d" stroke="#094338" d="M3319 4023l-9 24 34-27 9-25z"/><path fill="#0072dc" stroke="#004584" d="M3050 3855l24-4 11-11-26 6z"/><path fill="#2fdea8" stroke="#1c8565" d="M3194 3794l32-4 15-24-35 7z"/><path fill="#602600" stroke="#391700" d="M3191 4992l1 32 24-83-2-32z"/><path fill="#93a20a" stroke="#586106" d="M3419 3795l17 19 44-51-22-16z"/><path fill="#005161" stroke="#00313a" d="M3141 4570l5 23 3-54-5-20z"/><path fill="#003c5f" stroke="#002439" d="M3246 4129l-11 20 16-16 11-20z"/><path fill="#3af6b4" stroke="#23946c" d="M2706 4784l-3 33 43 60 1-34z"/><path fill="#00009d" stroke="#00005e" d="M2650 4327l3 10 25 11-3-10z"/><path fill="#0006a6" stroke="#000363" d="M2757 3909l-9-2 14 3 8 1z"/><path fill="#ba7f00" stroke="#6f4c00" d="M2221 3674l-40 0-23 6 45 1z"/><path fill="#ca5500" stroke="#793300" d="M2145 3680l-31 10-35 3 37-9z"/><path fill="#74c54a" stroke="#46762c" d="M2174 4201l13 21 88 23-12-18z"/><path fill="#86d144" stroke="#507d29" d="M3309 3761l33 2 23-37-36 1z"/><path fill="#c26800" stroke="#743f00" d="M2181 3674l-36 6-29 4 42-4z"/><path fill="#5a8729" stroke="#365118" d="M3402 3881l2 25 49-45-6-25z"/><path fill="#00169c" stroke="#000d5e" d="M2710 3895l-15-4 13 6 14 3z"/><path fill="#31bc85" stroke="#1e7150" d="M2263 4227l12 18 84 18-10-16z"/><path fill="#004194" stroke="#002759" d="M2627 3854l-24-8 12 11 23 7z"/><path fill="#0031b7" stroke="#001e6e" d="M2479 4259l8 14 51 9-7-12z"/><path fill="#000cbc" stroke="#000771" d="M2531 4270l7 12 41 8-6-11z"/><path fill="#00495f" stroke="#002c39" d="M3137 4548l4 22 3-51-4-19z"/><path fill="#0039d3" stroke="#00227f" d="M2976 3885l17-4 13-6-19 5z"/><path fill="#9aaf0f" stroke="#5d6909" d="M3398 3781l21 14 39-48-27-12z"/><path fill="#0000b9" stroke="#00006f" d="M2709 4413l0 12 26 23 0-13z"/><path fill="#0021cd" stroke="#00147b" d="M2937 3898l13-4 14-4-16 4z"/><path fill="#d2f118" stroke="#7e910e" d="M2744 4942l0 27 54 67 0-25z"/><path fill="#0000a2" stroke="#000061" d="M2680 4357l2 10 24 15-1-10z"/><path fill="#94c82d" stroke="#59781b" d="M3342 3763l29 7 29-42-35-2z"/><path fill="#cfc700" stroke="#7c7700" d="M2083 4144l15 25 76 32-14-23z"/><path fill="#002b97" stroke="#001a5b" d="M2670 3878l-19-5 13 8 18 4z"/><path fill="#1bf7d4" stroke="#10947f" d="M2709 4751l-3 33 41 59 2-34z"/><path fill="#9abc1c" stroke="#5c7111" d="M3371 3770l27 11 33-46-31-7z"/><path fill="#005b66" stroke="#00373d" d="M3285 4069l-11 22 25-20 11-24z"/><path fill="#289a6c" stroke="#185c41" d="M2469 3761l-39-14 6 15 39 13z"/><path fill="#0000b1" stroke="#00006a" d="M2613 4298l5 10 28 9-4-10z"/><path fill="#0064b6" stroke="#003c6d" d="M2415 4246l10 15 62 12-8-14z"/><path fill="#00435d" stroke="#002838" d="M3133 4528l4 20 3-48-4-18z"/><path fill="#0dd8c9" stroke="#088279" d="M3151 3816l30-3 13-19-31 5z"/><path fill="#61a13b" stroke="#3a6123" d="M2386 3719l-44-13-1 14 46 13z"/><path fill="#d12b00" stroke="#7d1a00" d="M2861 5118l-1 8 68 46 4-3z"/><path fill="#0000c4" stroke="#000075" d="M2573 4279l6 11 34 8-5-11z"/><path fill="#00def0" stroke="#008590" d="M2711 4719l-2 32 40 58 2-34z"/><path fill="#005b94" stroke="#003759" d="M2592 3835l-29-9 13 12 27 8z"/><path fill="#4ada89" stroke="#2c8352" d="M3226 3790l32-1 17-27-34 4z"/><path fill="#367c41" stroke="#214a27" d="M3363 3943l-3 26 42-36 2-27z"/><path fill="#0017a0" stroke="#000e60" d="M2722 3900l-14-3 15 5 12 2z"/><path fill="#0054d6" stroke="#003380" d="M3006 3875l20-4 12-7-21 5z"/><path fill="#0000bc" stroke="#000071" d="M2708 4402l1 11 26 22-1-12z"/><path fill="#00bbf8" stroke="#007095" d="M2714 4689l-3 30 40 56 2-33z"/><path fill="#470000" stroke="#2b0000" d="M3148 5122l-6 19 44-67 4-22z"/><path fill="#633400" stroke="#3b1f00" d="M3188 4957l3 35 23-83-5-35z"/><path fill="#0d9785" stroke="#085b50" d="M2512 3788l-37-13 10 15 36 12z"/><path fill="#003e5b" stroke="#002537" d="M3131 4509l2 19 3-46-2-16z"/><path fill="#007895" stroke="#00485a" d="M2553 3813l-32-11 12 14 30 10z"/><path fill="#009cf8" stroke="#005e95" d="M2717 4660l-3 29 39 53 2-32z"/><path fill="#0000ab" stroke="#000066" d="M2646 4317l4 10 25 11-3-10z"/><path fill="#00b4dd" stroke="#006c84" d="M3111 3835l28-3 12-16-29 6z"/><path fill="#678f24" stroke="#3e5616" d="M3394 3858l8 23 45-45-11-22z"/><path fill="#e37700" stroke="#884700" d="M2006 4052l17 30 44 36-16-28z"/><path fill="#007df9" stroke="#004b95" d="M2720 4632l-3 28 38 50 1-29z"/><path fill="#02a7b0" stroke="#01646a" d="M2338 4229l11 18 76 14-10-15z"/><path fill="#e78d00" stroke="#8b5500" d="M2798 5036l1 20 62 62 1-15z"/><path fill="#0066f9" stroke="#003d96" d="M2723 4607l-3 25 36 49 2-28z"/><path fill="#0070d8" stroke="#004382" d="M3038 3864l23-4 13-9-24 4z"/><path fill="#00299a" stroke="#00195c" d="M2682 3885l-18-4 15 7 16 3z"/><path fill="#004096" stroke="#00265a" d="M2638 3864l-23-7 14 11 22 5z"/><path fill="#004bfa" stroke="#002d96" d="M2725 4584l-2 23 35 46 1-26z"/><path fill="#0090db" stroke="#005783" d="M3074 3851l25-4 12-12-26 5z"/><path fill="#0000ac" stroke="#000067" d="M2678 4348l2 9 25 15-2-10z"/><path fill="#003bcf" stroke="#00237c" d="M2964 3890l16-4 13-5-17 4z"/><path fill="#1b7153" stroke="#104432" d="M3326 3998l-7 25 34-28 7-26z"/><path fill="#0037fa" stroke="#002196" d="M2727 4562l-2 22 34 43 2-24z"/><path fill="#8f0000" stroke="#560000" d="M2932 5169l-4 3 71 23 7 0z"/><path fill="#0017a3" stroke="#000e62" d="M2735 3904l-12-2 15 4 10 1z"/><path fill="#0024fb" stroke="#001696" d="M2729 4541l-2 21 34 41 1-23z"/><path fill="#60d46d" stroke="#3a7f42" d="M3258 3789l31 2 20-30-34 1z"/><path fill="#004a60" stroke="#002c39" d="M3257 4108l-11 21 16-16 12-22z"/><path fill="#003b59" stroke="#002336" d="M3129 4492l2 17 3-43-2-16z"/><path fill="#0021bc" stroke="#001471" d="M2523 4257l8 13 42 9-7-12z"/><path fill="#0014fb" stroke="#000c97" d="M2731 4523l-2 18 33 39 1-20z"/><path fill="#b8f334" stroke="#6e921f" d="M2745 4911l-1 31 54 69 0-30z"/><path fill="#8bc534" stroke="#53761f" d="M2160 4178l14 23 89 26-12-20z"/><path fill="#0046b8" stroke="#002a6e" d="M2470 4245l9 14 52 11-8-13z"/><path fill="#0000be" stroke="#000072" d="M2707 4392l1 10 26 21 0-11z"/><path fill="#42bd74" stroke="#287146" d="M2251 4207l12 20 86 20-11-18z"/><path fill="#29dbab" stroke="#188367" d="M3181 3813l30-1 15-22-32 4z"/><path fill="#0008fb" stroke="#000597" d="M2732 4505l-1 18 32 37 1-20z"/><path fill="#380000" stroke="#220000" d="M3083 5181l-8 9 59-38 8-11z"/><path fill="#0000c2" stroke="#000074" d="M2608 4287l5 11 29 9-4-10z"/><path fill="#83a51d" stroke="#4f6311" d="M2342 3706l-46-11-2 14 47 11z"/><path fill="#719a25" stroke="#445d16" d="M3382 3838l12 20 42-44-17-19z"/><path fill="#664300" stroke="#3d2800" d="M3184 4920l4 37 21-83-6-35z"/><path fill="#0018a7" stroke="#000e64" d="M2748 3907l-10-1 15 3 9 1z"/><path fill="#42803a" stroke="#284d23" d="M3363 3918l0 25 41-37-2-25z"/><path fill="#005996" stroke="#00365a" d="M2603 3846l-27-8 15 13 24 6z"/><path fill="#002a9d" stroke="#00195e" d="M2695 3891l-16-3 15 7 14 2z"/><path fill="#0079b6" stroke="#00486d" d="M2405 4230l10 16 64 13-9-14z"/><path fill="#0000fb" stroke="#000097" d="M2733 4489l-1 16 32 35 1-17z"/><path fill="#0a685a" stroke="#063e36" d="M3294 4045l-9 24 25-22 9-24z"/><path fill="#459d53" stroke="#295e32" d="M2430 3747l-43-14 7 16 42 13z"/><path fill="#71cd55" stroke="#447b33" d="M3289 3791l28 6 25-34-33-2z"/><path fill="#0056d2" stroke="#00347e" d="M2993 3881l20-3 13-7-20 4z"/><path fill="#000ac4" stroke="#000675" d="M2566 4267l7 12 35 8-6-11z"/><path fill="#003857" stroke="#002234" d="M3129 4475l0 17 3-42-1-15z"/><path fill="#d3ac00" stroke="#7f6700" d="M2067 4118l16 26 77 34-15-24z"/><path fill="#004198" stroke="#00275b" d="M2651 3873l-22-5 16 9 19 4z"/><path fill="#003acc" stroke="#00237a" d="M2950 3894l15-3 15-5-16 4z"/><path fill="#0000bc" stroke="#000071" d="M2642 4307l4 10 26 11-3-10z"/><path fill="#7aa828" stroke="#496518" d="M3365 3820l17 18 37-43-21-14z"/><path fill="#0000ba" stroke="#000070" d="M2675 4338l3 10 25 14-2-10z"/><path fill="#0000fb" stroke="#000096" d="M2734 4475l-1 14 32 34 0-17z"/><path fill="#0ad1c9" stroke="#067d78" d="M3139 3832l28-2 14-17-30 3z"/><path fill="#0018aa" stroke="#000f66" d="M2762 3910l-9-1 16 2 7 1z"/><path fill="#7ac242" stroke="#497527" d="M3317 3797l26 10 28-37-29-7z"/><path fill="#0000c4" stroke="#000076" d="M2706 4382l1 10 27 20-1-11z"/><path fill="#7eb632" stroke="#4b6d1e" d="M3343 3807l22 13 33-39-27-11z"/><path fill="#007696" stroke="#00475a" d="M2563 3826l-30-10 14 15 29 7z"/><path fill="#685500" stroke="#3e3300" d="M3178 4882l6 38 19-81-7-36z"/><path fill="#0071d4" stroke="#00447f" d="M3026 3871l22-3 13-8-23 4z"/><path fill="#9df450" stroke="#5e9330" d="M2746 4877l-1 34 53 70 0-34z"/><path fill="#40d68f" stroke="#278156" d="M3211 3812l29 1 18-24-32 1z"/><path fill="#14b89e" stroke="#0c6f5f" d="M2327 4211l11 18 77 17-10-16z"/><path fill="#277449" stroke="#17452c" d="M3331 3972l-5 26 34-29 3-26z"/><path fill="#28996c" stroke="#185c41" d="M2475 3775l-39-13 11 17 38 11z"/><path fill="#002ba0" stroke="#001a60" d="M2708 3897l-14-2 16 5 13 2z"/><path fill="#00aed9" stroke="#006882" d="M3099 3847l26-2 14-13-28 3z"/><path fill="#0000fa" stroke="#000096" d="M2734 4461l0 14 31 31 1-15z"/><path fill="#003756" stroke="#002133" d="M3129 4459l0 16 2-40 1-14z"/><path fill="#0091d6" stroke="#005781" d="M3061 3860l24-3 14-10-25 4z"/><path fill="#0d9785" stroke="#085b50" d="M2521 3802l-36-12 14 16 34 10z"/><path fill="#510000" stroke="#310000" d="M3151 5096l-3 26 42-70 2-28z"/><path fill="#a8a100" stroke="#656100" d="M2296 3695l-47-9-4 14 49 9z"/><path fill="#e55300" stroke="#893200" d="M1990 4021l16 31 45 38-16-30z"/><path fill="#4d8736" stroke="#2e5121" d="M3358 3894l5 24 39-37-8-23z"/><path fill="#eca500" stroke="#8e6300" d="M2798 5011l0 25 64 67 0-23z"/><path fill="#0036bd" stroke="#002071" d="M2515 4243l8 14 43 10-7-13z"/><path fill="#005ab9" stroke="#00366f" d="M2461 4230l9 15 53 12-8-14z"/><path fill="#da3300" stroke="#831f00" d="M2862 5103l-1 15 71 51 2-11z"/><path fill="#005897" stroke="#00355b" d="M2615 3857l-24-6 16 12 22 5z"/><path fill="#003cc8" stroke="#002478" d="M2936 3898l14-3 15-4-15 3z"/><path fill="#003f9b" stroke="#00265d" d="M2664 3881l-19-4 16 9 18 2z"/><path fill="#666500" stroke="#3d3d00" d="M3171 4844l7 38 18-79-8-35z"/><path fill="#02595b" stroke="#013536" d="M3267 4085l-10 23 17-17 11-22z"/><path fill="#0000cc" stroke="#00007b" d="M2602 4276l6 11 30 10-5-12z"/><path fill="#0058ce" stroke="#00357b" d="M2980 3886l18-3 15-5-20 3z"/><path fill="#0000f4" stroke="#000092" d="M2735 4448l-1 13 32 30 0-15z"/><path fill="#58bd5f" stroke="#357239" d="M2237 4186l14 21 87 22-11-18z"/><path fill="#a2c61d" stroke="#617712" d="M2145 4154l15 24 91 29-14-21z"/><path fill="#0000ca" stroke="#000079" d="M2705 4372l1 10 27 19-1-11z"/><path fill="#81f56c" stroke="#4e9341" d="M2747 4843l-1 34 52 70 1-35z"/><path fill="#002ca4" stroke="#001a62" d="M2723 3902l-13-2 17 5 11 1z"/><path fill="#54d076" stroke="#327d47" d="M3240 3813l28 5 21-27-31-2z"/><path fill="#0000c8" stroke="#000078" d="M2672 4328l3 10 26 14-3-11z"/><path fill="#003854" stroke="#002133" d="M3130 4444l-1 15 3-38 1-13z"/><path fill="#23d7ad" stroke="#158168" d="M3167 3830l28 0 16-18-30 1z"/><path fill="#001cc4" stroke="#001176" d="M2559 4254l7 13 36 9-6-13z"/><path fill="#5a6a0d" stroke="#364008" d="M3165 4808l6 36 17-76-8-33z"/><path fill="#16694f" stroke="#0d3f30" d="M3301 4020l-7 25 25-22 7-25z"/><path fill="#0090b7" stroke="#00576e" d="M2394 4213l11 17 65 15-9-15z"/><path fill="#65a036" stroke="#3d6021" d="M2387 3733l-46-13 7 18 46 11z"/><path fill="#0000ce" stroke="#00007c" d="M2638 4297l4 10 27 11-4-11z"/><path fill="#510000" stroke="#300000" d="M3011 5187l-5 8 69-5 8-9z"/><path fill="#589235" stroke="#355720" d="M3349 3873l9 21 36-36-12-20z"/><path fill="#0000f2" stroke="#000091" d="M2735 4435l0 13 31 28 0-14z"/><path fill="#007497" stroke="#00465b" d="M2576 3838l-29-7 17 14 27 6z"/><path fill="#b18300" stroke="#6a4f00" d="M2249 3686l-46-5-7 14 49 5z"/><path fill="#d48e00" stroke="#7f5500" d="M2051 4090l16 28 78 36-15-25z"/><path fill="#4e6a19" stroke="#2f400f" d="M3158 4773l7 35 15-73-7-32z"/><path fill="#0072d0" stroke="#00457d" d="M3013 3878l20-3 15-7-22 3z"/><path fill="#63f68b" stroke="#3b9353" d="M2749 4809l-2 34 52 69 0-36z"/><path fill="#337841" stroke="#1f4827" d="M3331 3947l0 25 32-29 0-25z"/><path fill="#003e9e" stroke="#00255f" d="M2679 3888l-18-2 17 7 16 2z"/><path fill="#002da8" stroke="#001b65" d="M2738 3906l-11-1 17 3 9 1z"/><path fill="#970000" stroke="#5b0000" d="M2934 5158l-2 11 74 26 5-8z"/><path fill="#62c75f" stroke="#3b7839" d="M3268 3818l25 8 24-29-28-6z"/><path fill="#0acdc5" stroke="#067b76" d="M3125 3845l27-1 15-14-28 2z"/><path fill="#005799" stroke="#00345c" d="M2629 3868l-22-5 17 11 21 3z"/><path fill="#416a25" stroke="#274016" d="M3151 4739l7 34 15-70-8-31z"/><path fill="#3c0000" stroke="#240000" d="M3088 5165l-5 16 59-40 6-19z"/><path fill="#629f38" stroke="#3b5f21" d="M3335 3854l14 19 33-35-17-18z"/><path fill="#27b98c" stroke="#186f54" d="M2314 4191l13 20 78 19-11-17z"/><path fill="#0056ca" stroke="#003479" d="M2965 3891l17-3 16-5-18 3z"/><path fill="#008ed2" stroke="#00557e" d="M3048 3868l23-2 14-9-24 3z"/><path fill="#0000d5" stroke="#000080" d="M2703 4362l2 10 27 18-2-11z"/><path fill="#47f6a7" stroke="#2b9464" d="M2751 4775l-2 34 50 67 1-36z"/><path fill="#00add4" stroke="#00687f" d="M3085 3857l25-1 15-11-26 2z"/><path fill="#68bc4e" stroke="#3e712f" d="M3293 3826l23 12 27-31-26-10z"/><path fill="#620300" stroke="#3b0200" d="M3151 5065l0 31 41-72-1-32z"/><path fill="#0b9688" stroke="#075a52" d="M2533 3816l-34-10 17 17 31 8z"/><path fill="#479c51" stroke="#2a5e30" d="M2436 3762l-42-13 12 19 41 11z"/><path fill="#366930" stroke="#213f1d" d="M3144 4707l7 32 14-67-7-28z"/><path fill="#0000f5" stroke="#000093" d="M2734 4423l1 12 31 27 0-13z"/><path fill="#67ae41" stroke="#3e6827" d="M3316 3838l19 16 30-34-22-13z"/><path fill="#002eac" stroke="#001c67" d="M2753 3909l-9-1 18 2 7 1z"/><path fill="#efbf00" stroke="#8f7300" d="M2798 4981l0 30 64 69 0-28z"/><path fill="#37d294" stroke="#217e59" d="M3195 3830l27 4 18-21-29-1z"/><path fill="#28f7c7" stroke="#189477" d="M2753 4742l-2 33 49 65 0-36z"/><path fill="#004bbe" stroke="#002d72" d="M2506 4228l9 15 44 11-8-14z"/><path fill="#269a6e" stroke="#175c42" d="M2485 3790l-38-11 16 18 36 9z"/><path fill="#b96400" stroke="#6f3c00" d="M2203 3681l-45-1-10 14 48 1z"/><path fill="#0072ba" stroke="#00446f" d="M2451 4213l10 17 54 13-9-15z"/><path fill="#2c6838" stroke="#1b3f22" d="M3138 4678l6 29 14-63-6-27z"/><path fill="#0014cc" stroke="#000c7b" d="M2596 4263l6 13 31 9-6-12z"/><path fill="#0040a2" stroke="#002661" d="M2694 3895l-16-2 18 7 14 0z"/><path fill="#0000d6" stroke="#000081" d="M2669 4318l3 10 26 13-3-11z"/><path fill="#0d6050" stroke="#083a30" d="M3275 4062l-8 23 18-16 9-24z"/><path fill="#0ff1e0" stroke="#099187" d="M2755 4710l-2 32 47 62 1-34z"/><path fill="#015256" stroke="#013133" d="M3246 4122l-10 21 10-14 11-21z"/><path fill="#e73300" stroke="#8b1e00" d="M1976 3989l14 32 45 39-14-31z"/><path fill="#6ebe4a" stroke="#42722c" d="M2223 4163l14 23 90 25-13-20z"/><path fill="#00d2f8" stroke="#007e95" d="M2756 4681l-1 29 46 60 1-33z"/><path fill="#236741" stroke="#153e27" d="M3133 4650l5 28 14-61-6-24z"/><path fill="#216b46" stroke="#14402a" d="M3305 3995l-4 25 25-22 5-26z"/><path fill="#3e7e3c" stroke="#254c24" d="M3328 3923l3 24 32-29-5-24z"/><path fill="#bac707" stroke="#6f7704" d="M2130 4129l15 25 92 32-14-23z"/><path fill="#00b4f8" stroke="#006c95" d="M2758 4653l-2 28 46 56 0-30z"/><path fill="#0000d5" stroke="#000080" d="M2633 4285l5 12 27 10-4-12z"/><path fill="#007399" stroke="#00455c" d="M2591 3851l-27-6 18 14 25 4z"/><path fill="#89a516" stroke="#52630d" d="M2341 3720l-47-11 7 19 47 10z"/><path fill="#00569c" stroke="#00345e" d="M2645 3877l-21-3 19 10 18 2z"/><path fill="#0099f9" stroke="#005c95" d="M2759 4627l-1 26 44 54 1-29z"/><path fill="#0035c5" stroke="#002076" d="M2551 4240l8 14 37 9-7-13z"/><path fill="#0085f9" stroke="#005096" d="M2761 4603l-2 24 44 51 0-27z"/><path fill="#04abaf" stroke="#026769" d="M2383 4194l11 19 67 17-10-17z"/><path fill="#0000f3" stroke="#000092" d="M2734 4412l0 11 32 26-1-12z"/><path fill="#c24700" stroke="#752a00" d="M2158 3680l-42 4-13 14 45-4z"/><path fill="#e14100" stroke="#872700" d="M2862 5080l0 23 72 55 2-20z"/><path fill="#0074cc" stroke="#00457a" d="M2998 3883l19-3 16-5-20 3z"/><path fill="#1c6546" stroke="#113d2a" d="M3128 4624l5 26 13-57-5-23z"/><path fill="#006efa" stroke="#004296" d="M2762 4580l-1 23 42 48 1-25z"/><path fill="#1fd2ac" stroke="#137e67" d="M3152 3844l26 2 17-16-28 0z"/><path fill="#4acb7a" stroke="#2c7a49" d="M3222 3834l26 7 20-23-28-5z"/><path fill="#0041a6" stroke="#002763" d="M2710 3900l-14 0 19 4 12 1z"/><path fill="#d81300" stroke="#820b00" d="M2079 3693l-32 15-21 13 36-14z"/><path fill="#0000e3" stroke="#000088" d="M2701 4352l2 10 27 17-1-11z"/><path fill="#005ffa" stroke="#003996" d="M2763 4560l-1 20 42 46 0-23z"/><path fill="#cd2a00" stroke="#7b1900" d="M2116 3684l-37 9-17 14 41-9z"/><path fill="#15634b" stroke="#0d3b2d" d="M3124 4600l4 24 13-54-4-22z"/><path fill="#004ffa" stroke="#002f96" d="M2764 4540l-1 20 41 43 1-22z"/><path fill="#6b1000" stroke="#400900" d="M3150 5030l1 35 40-73-3-35z"/><path fill="#d67000" stroke="#804300" d="M2035 4060l16 30 79 39-15-27z"/><path fill="#48873c" stroke="#2b5124" d="M3320 3901l8 22 30-29-9-21z"/><path fill="#07938d" stroke="#045854" d="M2547 3831l-31-8 19 17 29 5z"/><path fill="#efe000" stroke="#908600" d="M2798 4947l0 34 64 71 0-32z"/><path fill="#008ecd" stroke="#00557b" d="M3033 3875l22-2 16-7-23 2z"/><path fill="#0ac8c0" stroke="#067873" d="M3110 3856l26 0 16-12-27 1z"/><path fill="#0043fa" stroke="#002896" d="M2765 4523l-1 17 41 41 0-19z"/><path fill="#10614e" stroke="#093a2f" d="M3121 4578l3 22 13-52-4-20z"/><path fill="#3dba78" stroke="#247048" d="M2301 4170l13 21 80 22-11-19z"/><path fill="#0056a0" stroke="#003360" d="M2661 3886l-18-2 19 9 16 0z"/><path fill="#00adcf" stroke="#00687c" d="M3071 3866l24-1 15-9-25 1z"/><path fill="#0000f0" stroke="#000090" d="M2733 4401l1 11 31 25 0-13z"/><path fill="#55c166" stroke="#33743d" d="M3248 3841l23 10 22-25-25-8z"/><path fill="#570000" stroke="#340000" d="M3014 5170l-3 17 72-6 5-16z"/><path fill="#0043aa" stroke="#002866" d="M2727 3905l-12-1 19 4 10 0z"/><path fill="#0000dd" stroke="#000084" d="M2665 4307l4 11 26 12-3-11z"/><path fill="#00709b" stroke="#00435d" d="M2607 3863l-25-4 20 13 22 2z"/><path fill="#005ac5" stroke="#003676" d="M2933 3898l13-2 18-4-14 3z"/><path fill="#67a034" stroke="#3e601f" d="M2394 3749l-46-11 15 21 43 9z"/><path fill="#2b6e40" stroke="#1a4226" d="M3306 3970l-1 25 26-23 0-25z"/><path fill="#470000" stroke="#2a0000" d="M3091 5140l-3 25 60-43 3-26z"/><path fill="#0063bf" stroke="#003c73" d="M2497 4211l9 17 45 12-8-16z"/><path fill="#002acd" stroke="#00197b" d="M2589 4250l7 13 31 10-6-13z"/><path fill="#003bfa" stroke="#002496" d="M2765 4506l0 17 40 39 0-19z"/><path fill="#50953f" stroke="#305926" d="M3308 3881l12 20 29-28-14-19z"/><path fill="#176147" stroke="#0e3a2b" d="M3282 4037l-7 25 19-17 7-25z"/><path fill="#259a71" stroke="#165d44" d="M2499 3806l-36-9 20 20 33 6z"/><path fill="#008dbb" stroke="#005570" d="M2440 4195l11 18 55 15-9-17z"/><path fill="#a90000" stroke="#650000" d="M2936 5138l-2 20 77 29 3-17z"/><path fill="#0d5f4f" stroke="#08392f" d="M3119 4557l2 21 12-50-2-19z"/><path fill="#5bb454" stroke="#366c32" d="M3271 3851l20 13 25-26-23-12z"/><path fill="#0075c9" stroke="#004678" d="M2982 3888l18-3 17-5-19 3z"/><path fill="#aa9700" stroke="#665a00" d="M2294 3709l-49-9 8 21 48 7z"/><path fill="#0b5a4c" stroke="#07362d" d="M3255 4099l-9 23 11-14 10-23z"/><path fill="#59a446" stroke="#35632a" d="M3291 3864l17 17 27-27-19-16z"/><path fill="#459d53" stroke="#295e32" d="M2447 3779l-41-11 19 22 38 7z"/><path fill="#0018d4" stroke="#000e7f" d="M2627 4273l6 12 28 10-5-12z"/><path fill="#36cc90" stroke="#207a56" d="M3178 3846l26 5 18-17-27-4z"/><path fill="#85c035" stroke="#507320" d="M2209 4139l14 24 91 28-13-21z"/><path fill="#0000e5" stroke="#000089" d="M2698 4341l3 11 28 16-2-11z"/><path fill="#ea1100" stroke="#8c0a00" d="M1964 3955l12 34 45 40-12-32z"/><path fill="#0044ae" stroke="#002968" d="M2744 3908l-10 0 20 2 8 0z"/><path fill="#0037f9" stroke="#002195" d="M2766 4491l-1 15 40 37 0-17z"/><path fill="#6f2000" stroke="#421300" d="M3147 4992l3 38 38-73-4-37z"/><path fill="#004ec5" stroke="#002f76" d="M2543 4224l8 16 38 10-7-15z"/><path fill="#d5f115" stroke="#80910c" d="M2799 4912l-1 35 64 73 0-36z"/><path fill="#c8ac00" stroke="#786700" d="M2115 4102l15 27 93 34-14-24z"/><path fill="#0058a4" stroke="#003562" d="M2678 3893l-16 0 20 7 14 0z"/><path fill="#19ba9b" stroke="#0f705d" d="M2371 4174l12 20 68 19-11-18z"/><path fill="#0a5d4f" stroke="#063830" d="M3117 4537l2 20 12-48-2-17z"/><path fill="#a90000" stroke="#650000" d="M1952 3824l-1 33 0 30 2-34z"/><path fill="#e55700" stroke="#893400" d="M2862 5052l0 28 74 58 1-26z"/><path fill="#0008ee" stroke="#00058f" d="M2732 4390l1 11 32 23-1-12z"/><path fill="#039092" stroke="#025658" d="M2564 3845l-29-5 22 16 25 3z"/><path fill="#00709e" stroke="#00435f" d="M2624 3874l-22-2 21 11 20 1z"/><path fill="#0033f8" stroke="#001f95" d="M2766 4476l0 15 39 35 0-17z"/><path fill="#34743c" stroke="#1f4524" d="M3303 3946l3 24 25-23-3-24z"/><path fill="#0092ca" stroke="#005879" d="M3017 3880l21-2 17-5-22 2z"/><path fill="#21cca5" stroke="#147a63" d="M3136 3856l26 3 16-13-26-2z"/><path fill="#45c479" stroke="#297649" d="M3204 3851l25 8 19-18-26-7z"/><path fill="#b7f233" stroke="#6e911f" d="M2799 4876l0 36 63 72 0-38z"/><path fill="#713100" stroke="#441e00" d="M3142 4952l5 40 37-72-6-38z"/><path fill="#095b4f" stroke="#05362f" d="M3117 4518l0 19 12-45 0-17z"/><path fill="#0057a8" stroke="#003465" d="M2696 3900l-14 0 21 5 12-1z"/><path fill="#0015dc" stroke="#000d84" d="M2661 4295l4 12 27 12-3-12z"/><path fill="#d84e00" stroke="#812f00" d="M2021 4029l14 31 80 42-14-29z"/><path fill="#0076c6" stroke="#004777" d="M2964 3892l16-3 20-4-18 3z"/><path fill="#55bc61" stroke="#33713a" d="M2289 4147l12 23 82 24-12-20z"/><path fill="#21633e" stroke="#143b25" d="M3286 4012l-4 25 19-17 4-25z"/><path fill="#00accb" stroke="#00677a" d="M3055 3873l23-1 17-7-24 1z"/><path fill="#0cc6b9" stroke="#07776f" d="M3095 3865l24 1 17-10-26 0z"/><path fill="#b07300" stroke="#6a4500" d="M2245 3700l-49-5 8 22 49 4z"/><path fill="#1f9b77" stroke="#135d48" d="M2516 3823l-33-6 22 19 30 4z"/><path fill="#0033f6" stroke="#001e94" d="M2766 4462l0 14 39 33 0-15z"/><path fill="#8ba414" stroke="#53630c" d="M2348 3738l-47-10 17 24 45 7z"/><path fill="#0044cd" stroke="#00297b" d="M2582 4235l7 15 32 10-6-15z"/><path fill="#5a0000" stroke="#360000" d="M3092 5110l-1 30 60-44 0-31z"/><path fill="#007fc1" stroke="#004c74" d="M2487 4193l10 18 46 13-8-17z"/><path fill="#000fe3" stroke="#000988" d="M2695 4330l3 11 29 16-3-12z"/><path fill="#006ea2" stroke="#004261" d="M2643 3884l-20-1 21 10 18 0z"/><path fill="#99f352" stroke="#5c9231" d="M2800 4840l-1 36 63 70-1-38z"/><path fill="#3f7d3a" stroke="#264b23" d="M3296 3923l7 23 25-23-8-22z"/><path fill="#00a9b7" stroke="#00656e" d="M2430 4175l10 20 57 16-10-18z"/><path fill="#0013eb" stroke="#000b8d" d="M2730 4379l2 11 32 22-1-12z"/><path fill="#155a42" stroke="#0d3628" d="M3263 4075l-8 24 12-14 8-23z"/><path fill="#008d99" stroke="#00555c" d="M2582 3859l-25-3 22 15 23 1z"/><path fill="#734500" stroke="#452900" d="M3137 4913l5 39 36-70-7-38z"/><path fill="#002fd4" stroke="#001c7f" d="M2621 4260l6 13 29 10-5-14z"/><path fill="#670000" stroke="#3e0000" d="M3016 5146l-2 24 74-5 3-25z"/><path fill="#4fb964" stroke="#306f3c" d="M3229 3859l22 11 20-19-23-10z"/><path fill="#0056bd" stroke="#003471" d="M2858 3909l4-2 22-2-6 2z"/><path fill="#09594d" stroke="#05352e" d="M3117 4501l0 17 12-43 0-16z"/><path fill="#990000" stroke="#5c0000" d="M1959 3793l-7 31 1 29 9-31z"/><path fill="#419d57" stroke="#275e34" d="M2463 3797l-38-7 23 22 35 5z"/><path fill="#0059ac" stroke="#003667" d="M2715 3904l-12 1 21 4 10-1z"/><path fill="#bc0000" stroke="#710000" d="M2937 5112l-1 26 78 32 2-24z"/><path fill="#65a036" stroke="#3c6021" d="M2406 3768l-43-9 21 25 41 6z"/><path fill="#7df36e" stroke="#4b9242" d="M2800 4804l0 36 61 68-1-38z"/><path fill="#9ec11d" stroke="#5f7411" d="M2196 4113l13 26 92 31-12-23z"/><path fill="#c80000" stroke="#780000" d="M1955 3921l9 34 45 42-9-34z"/><path fill="#0067c7" stroke="#003e77" d="M2535 4207l8 17 39 11-7-16z"/><path fill="#e77200" stroke="#8b4500" d="M2862 5020l0 32 75 60 0-31z"/><path fill="#478a3e" stroke="#2b5325" d="M3285 3903l11 20 24-22-12-20z"/><path fill="#0036f4" stroke="#002093" d="M2766 4449l0 13 39 32 0-15z"/><path fill="#34c68c" stroke="#1f7754" d="M3162 3859l25 5 17-13-26-5z"/><path fill="#ca9000" stroke="#795600" d="M2101 4073l14 29 94 37-13-26z"/><path fill="#52ab54" stroke="#316732" d="M3251 3870l19 15 21-21-20-13z"/><path fill="#0078c3" stroke="#004875" d="M2946 3896l14-3 20-4-16 3z"/><path fill="#745600" stroke="#463400" d="M3131 4873l6 40 34-69-6-36z"/><path fill="#2fbb87" stroke="#1c7051" d="M2360 4153l11 21 69 21-10-20z"/><path fill="#5ff48d" stroke="#399255" d="M2801 4770l-1 34 60 66 0-37z"/><path fill="#0093c6" stroke="#005877" d="M3000 3885l19-2 19-5-21 2z"/><path fill="#509a46" stroke="#305d2a" d="M3270 3885l15 18 23-22-17-17z"/><path fill="#43f5a9" stroke="#289366" d="M2802 4737l-1 33 59 63-1-35z"/><path fill="#b85000" stroke="#6f3000" d="M2196 3695l-48-1 7 24 49-1z"/><path fill="#0f5644" stroke="#093329" d="M3240 4133l-10 23 6-13 10-21z"/><path fill="#0070a6" stroke="#004364" d="M2662 3893l-18 0 23 8 15-1z"/><path fill="#2b6637" stroke="#1a3d21" d="M3286 3987l0 25 19-17 1-25z"/><path fill="#005eb0" stroke="#00396a" d="M2734 3908l-10 1 22 2 8-1z"/><path fill="#756800" stroke="#463e00" d="M3125 4836l6 37 34-65-7-35z"/><path fill="#2bf5c3" stroke="#1a9375" d="M2802 4707l0 30 57 61-1-34z"/><path fill="#1b9d7d" stroke="#105e4b" d="M2535 3840l-30-4 25 19 27 1z"/><path fill="#0a574b" stroke="#06342d" d="M3118 4484l-1 17 12-42 1-15z"/><path fill="#15f6d9" stroke="#0d9382" d="M2803 4678l-1 29 56 57 0-32z"/><path fill="#008ba0" stroke="#005360" d="M2602 3872l-23-1 23 13 21-1z"/><path fill="#002ddb" stroke="#001b83" d="M2656 4283l5 12 28 12-4-13z"/><path fill="#02e1ec" stroke="#01878e" d="M2803 4651l0 27 55 54-1-30z"/><path fill="#0021e9" stroke="#00148c" d="M2729 4368l1 11 33 21-1-12z"/><path fill="#6b7506" stroke="#404603" d="M3119 4799l6 37 33-63-7-34z"/><path fill="#25c69b" stroke="#16775d" d="M3119 3866l25 3 18-10-26-3z"/><path fill="#900000" stroke="#560000" d="M1974 3765l-15 28 3 29 15-28z"/><path fill="#00caf7" stroke="#007994" d="M2804 4626l-1 25 54 51 0-27z"/><path fill="#0039f2" stroke="#002291" d="M2765 4437l1 12 39 30 0-14z"/><path fill="#00afc3" stroke="#006975" d="M3038 3878l21 0 19-6-23 1z"/><path fill="#700000" stroke="#430000" d="M3091 5075l1 35 59-45-1-35z"/><path fill="#da3000" stroke="#831d00" d="M2009 3997l12 32 80 44-13-30z"/><path fill="#0024e1" stroke="#001587" d="M2692 4319l3 11 29 15-2-12z"/><path fill="#6ebd4a" stroke="#42722c" d="M2276 4123l13 24 82 27-11-21z"/><path fill="#aa9400" stroke="#665900" d="M2301 3728l-48-7 18 27 47 4z"/><path fill="#00b7f7" stroke="#006e94" d="M2804 4603l0 23 53 49-1-26z"/><path fill="#5e7413" stroke="#38460b" d="M3114 4765l5 34 32-60-7-32z"/><path fill="#11c7af" stroke="#0a7769" d="M3078 3872l24 1 17-7-24-1z"/><path fill="#1f5b39" stroke="#123722" d="M3269 4050l-6 25 12-13 7-25z"/><path fill="#005ece" stroke="#00397c" d="M2575 4219l7 16 33 10-6-16z"/><path fill="#45bd72" stroke="#297245" d="M3187 3864l23 9 19-14-25-8z"/><path fill="#e99200" stroke="#8c5700" d="M2862 4984l0 36 75 61 0-36z"/><path fill="#0071ab" stroke="#004466" d="M2682 3900l-15 1 22 6 14-2z"/><path fill="#009cc2" stroke="#005d75" d="M2478 4174l9 19 48 14-8-18z"/><path fill="#c22d00" stroke="#751b00" d="M2148 3694l-45 4 7 25 45-5z"/><path fill="#3a9e60" stroke="#235f39" d="M2483 3817l-35-5 26 23 31 1z"/><path fill="#00a7f7" stroke="#006494" d="M2805 4581l-1 22 52 46 0-24z"/><path fill="#52731d" stroke="#314511" d="M3108 4732l6 33 30-58-6-29z"/><path fill="#15bea3" stroke="#0d7262" d="M2420 4154l10 21 57 18-9-19z"/><path fill="#004ad5" stroke="#002c80" d="M2615 4245l6 15 30 9-5-15z"/><path fill="#7f0000" stroke="#4c0000" d="M3017 5115l-1 31 75-6 1-30z"/><path fill="#346b33" stroke="#1f401f" d="M3283 3962l3 25 20-17-3-24z"/><path fill="#0c5648" stroke="#07342b" d="M3119 4468l-1 16 12-40 2-14z"/><path fill="#0097c4" stroke="#005b75" d="M2980 3889l18-1 21-5-19 2z"/><path fill="#477126" stroke="#2b4417" d="M3104 4702l4 30 30-54-5-28z"/><path fill="#d31600" stroke="#7f0d00" d="M2937 5081l0 31 79 34 1-31z"/><path fill="#0089a5" stroke="#005263" d="M2623 3883l-21 1 24 11 18-2z"/><path fill="#009cf7" stroke="#005d94" d="M2805 4562l0 19 51 44 0-22z"/><path fill="#950000" stroke="#5a0000" d="M1997 3741l-23 24 3 29 24-25z"/><path fill="#a90000" stroke="#650000" d="M1951 3887l4 34 45 42-5-33z"/><path fill="#16a085" stroke="#0d6050" d="M2557 3856l-27-1 25 17 24-1z"/><path fill="#0079c0" stroke="#004973" d="M2905 3902l10-2 23-3-12 2z"/><path fill="#b8c004" stroke="#6e7303" d="M2183 4086l13 27 93 34-13-24z"/><path fill="#5fa13c" stroke="#396024" d="M2425 3790l-41-6 27 25 37 3z"/><path fill="#0084c8" stroke="#004f78" d="M2527 4189l8 18 40 12-8-18z"/><path fill="#87a418" stroke="#51630f" d="M2363 3759l-45-7 25 28 41 4z"/><path fill="#0040f0" stroke="#002790" d="M2765 4424l0 13 40 28 0-14z"/><path fill="#ca0c00" stroke="#790700" d="M2103 3698l-41 9 6 26 42-10z"/><path fill="#3e6f2e" stroke="#25431c" d="M3099 4674l5 28 29-52-5-26z"/><path fill="#47bd70" stroke="#2b7143" d="M2349 4129l11 24 70 22-10-21z"/><path fill="#cc7100" stroke="#7a4400" d="M2088 4043l13 30 95 40-13-27z"/><path fill="#0090f7" stroke="#005694" d="M2805 4543l0 19 51 41 0-21z"/><path fill="#4eb25e" stroke="#2f6b38" d="M3210 3873l21 12 20-15-22-11z"/><path fill="#860c00" stroke="#510700" d="M3089 5037l2 38 59-45-3-38z"/><path fill="#9f0000" stroke="#5f0000" d="M2026 3721l-29 20 4 28 30-21z"/><path fill="#0074af" stroke="#004669" d="M2703 3905l-14 2 24 4 11-2z"/><path fill="#19563a" stroke="#0f3423" d="M3248 4110l-8 23 6-11 9-23z"/><path fill="#eab400" stroke="#8c6c00" d="M2862 4946l0 38 75 61-2-38z"/><path fill="#b10000" stroke="#6a0000" d="M2062 3707l-36 14 5 27 37-15z"/><path fill="#0033e7" stroke="#001f8b" d="M2727 4357l2 11 33 20-2-12z"/><path fill="#0078bf" stroke="#004873" d="M2884 3905l7-2 24-3-10 2z"/><path fill="#356d34" stroke="#20411f" d="M3096 4648l3 26 29-50-4-24z"/><path fill="#3d7333" stroke="#25451e" d="M3276 3940l7 22 20-16-7-23z"/><path fill="#3ac080" stroke="#23734d" d="M3144 3869l25 6 18-11-25-5z"/><path fill="#0045db" stroke="#002983" d="M2651 4269l5 14 29 11-4-15z"/><path fill="#0075be" stroke="#004672" d="M2862 3907l4-1 25-3-7 2z"/><path fill="#008cf6" stroke="#005494" d="M2805 4526l0 17 51 39-1-20z"/><path fill="#0074bd" stroke="#004571" d="M2840 3909l1-1 25-2-4 1z"/><path fill="#003ce0" stroke="#002487" d="M2689 4307l3 12 30 14-3-13z"/><path fill="#008aa9" stroke="#005366" d="M2644 3893l-18 2 25 9 16-3z"/><path fill="#02b2bb" stroke="#016b70" d="M3019 3883l20 0 20-5-21 0z"/><path fill="#0e5645" stroke="#083329" d="M3122 4452l-3 16 13-38 2-15z"/><path fill="#34a067" stroke="#1f603e" d="M2505 3836l-31-1 28 21 28-1z"/><path fill="#52a34c" stroke="#31622d" d="M3231 3885l19 15 20-15-19-15z"/><path fill="#b07000" stroke="#6a4300" d="M2253 3721l-49-4 21 30 46 1z"/><path fill="#295d31" stroke="#18381d" d="M3271 4024l-2 26 13-13 4-25z"/><path fill="#2f6b38" stroke="#1c4022" d="M3093 4623l3 25 28-48-3-22z"/><path fill="#10a48e" stroke="#0a6255" d="M2579 3871l-24 1 26 15 21-3z"/><path fill="#458037" stroke="#2a4d21" d="M3265 3919l11 21 20-17-11-20z"/><path fill="#0099c2" stroke="#005c74" d="M2960 3893l15-2 23-3-18 1z"/><path fill="#dd1300" stroke="#840c00" d="M2000 3963l9 34 79 46-10-32z"/><path fill="#84bf35" stroke="#4f7320" d="M2265 4097l11 26 84 30-11-24z"/><path fill="#4f913e" stroke="#2f5725" d="M3250 3900l15 19 20-16-15-18z"/><path fill="#ebd700" stroke="#8d8100" d="M2861 4908l1 38 73 61-1-39z"/><path fill="#0079b3" stroke="#00496c" d="M2724 3909l-11 2 24 2 9-2z"/><path fill="#004bee" stroke="#002d8f" d="M2764 4412l1 12 40 27-1-13z"/><path fill="#892000" stroke="#521300" d="M3086 4996l3 41 58-45-5-40z"/><path fill="#29c292" stroke="#197458" d="M3102 3873l24 3 18-7-25-3z"/><path fill="#9b0000" stroke="#5d0000" d="M3017 5080l0 35 75-5-1-35z"/><path fill="#d63200" stroke="#801e00" d="M2937 5045l0 36 80 34 0-35z"/><path fill="#007cd0" stroke="#004b7d" d="M2567 4201l8 18 34 10-6-17z"/><path fill="#18c3a5" stroke="#0e7563" d="M3059 3878l23 1 20-6-24-1z"/><path fill="#0087f5" stroke="#005193" d="M2805 4509l0 17 50 36 0-18z"/><path fill="#07b9b7" stroke="#046f6e" d="M2470 4153l8 21 49 15-8-20z"/><path fill="#2a683b" stroke="#193e23" d="M3091 4600l2 23 28-45-2-21z"/><path fill="#8d0000" stroke="#540000" d="M1953 3853l-2 34 44 43 0-33z"/><path fill="#2bc08f" stroke="#1a7356" d="M2410 4132l10 22 58 20-8-21z"/><path fill="#0065d5" stroke="#003d80" d="M2609 4229l6 16 31 9-5-16z"/><path fill="#58a245" stroke="#356129" d="M2448 3812l-37-3 30 26 33 0z"/><path fill="#d0ec14" stroke="#7d8d0c" d="M2860 4870l1 38 73 60-2-40z"/><path fill="#008cae" stroke="#005469" d="M2667 3901l-16 3 25 6 13-3z"/><path fill="#a99900" stroke="#665c00" d="M2318 3752l-47-4 29 31 43 1z"/><path fill="#c4a600" stroke="#766300" d="M2172 4058l11 28 93 37-11-26z"/><path fill="#0045e5" stroke="#00298a" d="M2724 4345l3 12 33 19-1-13z"/><path fill="#00a2ca" stroke="#006179" d="M2519 4169l8 20 40 12-7-19z"/><path fill="#4ab768" stroke="#2c6e3e" d="M3169 3875l23 9 18-11-23-9z"/><path fill="#007fb7" stroke="#004c6e" d="M2746 3911l-9 2 25 1 7-2z"/><path fill="#8c3500" stroke="#542000" d="M3082 4956l4 40 56-44-5-39z"/><path fill="#2da371" stroke="#1b6244" d="M2530 3855l-28 1 29 19 24-3z"/><path fill="#0ca696" stroke="#07645a" d="M2602 3884l-21 3 27 12 18-4z"/><path fill="#26663c" stroke="#173d24" d="M3090 4578l1 22 28-43-2-20z"/><path fill="#81a51f" stroke="#4d6312" d="M2384 3784l-41-4 31 29 37 0z"/><path fill="#b3ec32" stroke="#6b8e1e" d="M2860 4833l0 37 72 58-2-39z"/><path fill="#125540" stroke="#0b3327" d="M3126 4436l-4 16 12-37 4-14z"/><path fill="#5ebf5b" stroke="#387337" d="M2339 4105l10 24 71 25-10-22z"/><path fill="#0086f4" stroke="#005192" d="M2805 4494l0 15 50 35 0-17z"/><path fill="#009bc1" stroke="#005d74" d="M2938 3897l13-2 24-4-15 2z"/><path fill="#ce5700" stroke="#7b3400" d="M2078 4011l10 32 95 43-11-28z"/><path fill="#235731" stroke="#15341d" d="M3255 4085l-7 25 7-11 8-24z"/><path fill="#31602b" stroke="#1e391a" d="M3271 3999l0 25 15-12 0-25z"/><path fill="#b84b00" stroke="#6e2d00" d="M2204 3717l-49 1 25 32 45-3z"/><path fill="#98ed4d" stroke="#5b8e2e" d="M2859 4798l1 35 70 56-2-38z"/><path fill="#d75100" stroke="#813100" d="M2935 5007l2 38 80 35-2-38z"/><path fill="#07b6b5" stroke="#046d6c" d="M2998 3888l18-1 23-4-20 0z"/><path fill="#0059eb" stroke="#00358d" d="M2763 4400l1 12 40 26 0-13z"/><path fill="#b11500" stroke="#6a0c00" d="M3015 5042l2 38 74-5-2-38z"/><path fill="#0061db" stroke="#003a83" d="M2646 4254l5 15 30 10-4-15z"/><path fill="#8d4c00" stroke="#552d00" d="M3077 4915l5 41 55-43-6-40z"/><path fill="#7eee69" stroke="#4b8f3f" d="M2858 4764l1 34 69 53-2-37z"/><path fill="#0055df" stroke="#003386" d="M2685 4294l4 13 30 13-3-14z"/><path fill="#0084ba" stroke="#004f70" d="M2769 3912l-7 2 26-1 4-1z"/><path fill="#24633c" stroke="#163c24" d="M3089 4558l1 20 27-41 0-19z"/><path fill="#66ef81" stroke="#3d8f4d" d="M2858 4732l0 32 68 50-2-34z"/><path fill="#0093b3" stroke="#00586c" d="M2689 3907l-13 3 25 4 12-3z"/><path fill="#810000" stroke="#4d0000" d="M1962 3822l-9 31 42 44 7-32z"/><path fill="#bf0000" stroke="#730000" d="M1995 3930l5 33 78 48-7-31z"/><path fill="#51ef97" stroke="#31905a" d="M2857 4702l1 30 66 48-2-33z"/><path fill="#4ea450" stroke="#2f6230" d="M2474 3835l-33 0 33 24 28-3z"/><path fill="#0089f2" stroke="#005291" d="M2805 4479l0 15 50 33 0-16z"/><path fill="#009dc0" stroke="#005e73" d="M2915 3900l10-2 26-3-13 2z"/><path fill="#8e6100" stroke="#553a00" d="M3072 4876l5 39 54-42-6-37z"/><path fill="#9ec11d" stroke="#5f7411" d="M2256 4070l9 27 84 32-10-24z"/><path fill="#54ab52" stroke="#326731" d="M3192 3884l21 12 18-11-21-12z"/><path fill="#08a6a0" stroke="#056460" d="M2626 3895l-18 4 27 10 16-5z"/><path fill="#26a77c" stroke="#17644b" d="M2555 3872l-24 3 29 17 21-5z"/><path fill="#3fbb76" stroke="#267047" d="M3126 3876l24 6 19-7-25-6z"/><path fill="#3ff0a9" stroke="#269066" d="M2857 4675l0 27 65 45-1-30z"/><path fill="#396528" stroke="#223c18" d="M3267 3974l4 25 15-12-3-25z"/><path fill="#008bbc" stroke="#005371" d="M2792 3912l-4 1 27-2 2-1z"/><path fill="#009bd2" stroke="#005d7e" d="M2560 4182l7 19 36 11-6-19z"/><path fill="#20c6a0" stroke="#137760" d="M2462 4131l8 22 49 16-7-21z"/><path fill="#8e7500" stroke="#554600" d="M3068 4838l4 38 53-40-6-37z"/><path fill="#2df1bc" stroke="#1b9071" d="M2856 4649l1 26 64 42-2-28z"/><path fill="#d97100" stroke="#824400" d="M2934 4968l1 39 80 35-2-41z"/><path fill="#1fc09b" stroke="#13735d" d="M3039 3883l22 0 21-4-23-1z"/><path fill="#44c278" stroke="#297548" d="M2402 4108l8 24 60 21-8-22z"/><path fill="#17553b" stroke="#0e3323" d="M3130 4420l-4 16 12-35 5-15z"/><path fill="#0084d7" stroke="#004f81" d="M2603 4212l6 17 32 9-6-18z"/><path fill="#b42f00" stroke="#6c1c00" d="M3013 5001l2 41 74-5-3-41z"/><path fill="#c12700" stroke="#741800" d="M2155 3718l-45 5 27 35 43-8z"/><path fill="#009cbf" stroke="#005e73" d="M2891 3903l7-1 27-4-10 2z"/><path fill="#23613b" stroke="#153a23" d="M3089 4539l0 19 28-40 0-17z"/><path fill="#32be86" stroke="#1e7250" d="M3082 3879l24 3 20-6-24-3z"/><path fill="#898700" stroke="#525100" d="M3063 4802l5 36 51-39-5-34z"/><path fill="#21f1c8" stroke="#149178" d="M2856 4625l0 24 63 40-1-26z"/><path fill="#005de4" stroke="#003889" d="M2722 4333l2 12 35 18-2-14z"/><path fill="#75a62c" stroke="#46641a" d="M2411 3809l-37 0 35 29 32-3z"/><path fill="#af7500" stroke="#694600" d="M2271 3748l-46-1 34 35 41-3z"/><path fill="#0096b8" stroke="#005a6e" d="M2713 3911l-12 3 27 3 9-4z"/><path fill="#2c5829" stroke="#1a3518" d="M3259 4059l-4 26 8-10 6-25z"/><path fill="#c68d00" stroke="#775500" d="M2164 4028l8 30 93 39-9-27z"/><path fill="#569c41" stroke="#345e27" d="M3213 3896l19 16 18-12-19-15z"/><path fill="#0099bf" stroke="#005c73" d="M2866 3906l4-1 28-3-7 1z"/><path fill="#7a8c0e" stroke="#495408" d="M3059 4768l4 34 51-37-6-33z"/><path fill="#07c1bf" stroke="#047473" d="M2512 4148l7 21 41 13-6-20z"/><path fill="#0067e9" stroke="#003e8c" d="M2762 4388l1 12 41 25 0-14z"/><path fill="#0096be" stroke="#005a72" d="M2841 3908l2 0 27-3-4 1z"/><path fill="#426e28" stroke="#284218" d="M3259 3951l8 23 16-12-7-22z"/><path fill="#7c0000" stroke="#4a0000" d="M1977 3794l-15 28 40 43 14-29z"/><path fill="#008cf0" stroke="#005490" d="M2805 4465l0 14 50 32 1-16z"/><path fill="#75c146" stroke="#46742a" d="M2331 4079l8 26 71 27-8-24z"/><path fill="#0cbbae" stroke="#077069" d="M2975 3891l17-1 24-3-18 1z"/><path fill="#15f1d5" stroke="#0c9180" d="M2856 4603l0 22 62 38-1-25z"/><path fill="#a3a502" stroke="#626301" d="M2343 3780l-43-1 37 33 37-3z"/><path fill="#d03d00" stroke="#7d2400" d="M2071 3980l7 31 94 47-8-30z"/><path fill="#da9200" stroke="#835700" d="M2932 4928l2 40 79 33-3-40z"/><path fill="#45a75c" stroke="#2a6437" d="M2502 3856l-28 3 32 22 25-6z"/><path fill="#08aba5" stroke="#056763" d="M2651 3904l-16 5 27 7 14-6z"/><path fill="#20ac87" stroke="#136751" d="M2581 3887l-21 5 29 13 19-6z"/><path fill="#6c8b1a" stroke="#415310" d="M3055 4736l4 32 49-36-4-30z"/><path fill="#528b34" stroke="#31531f" d="M3232 3912l15 18 18-11-15-19z"/><path fill="#b54d00" stroke="#6d2e00" d="M3010 4961l3 40 73-5-4-40z"/><path fill="#4c7b2b" stroke="#2d4a1a" d="M3247 3930l12 21 17-11-11-21z"/><path fill="#be0300" stroke="#720200" d="M2110 3723l-42 10 30 37 39-12z"/><path fill="#0eebda" stroke="#098d83" d="M2856 4582l0 21 61 35 0-23z"/><path fill="#618924" stroke="#3a5216" d="M3051 4706l4 30 49-34-5-28z"/><path fill="#246039" stroke="#163922" d="M3090 4520l-1 19 28-38 1-17z"/><path fill="#a90000" stroke="#660000" d="M1995 3897l0 33 76 50-2-33z"/><path fill="#dbb200" stroke="#836b00" d="M2930 4889l2 39 78 33-4-41z"/><path fill="#006ddf" stroke="#004186" d="M2681 4279l4 15 31 12-3-16z"/><path fill="#0080dc" stroke="#004d84" d="M2641 4238l5 16 31 10-5-17z"/><path fill="#7d0000" stroke="#4b0000" d="M2001 3769l-24 25 39 42 20-26z"/><path fill="#009fbb" stroke="#005f70" d="M2737 3913l-9 4 27 0 7-3z"/><path fill="#51b25c" stroke="#306b37" d="M3150 3882l23 9 19-7-23-9z"/><path fill="#b76800" stroke="#6e3e00" d="M3006 4920l4 41 72-5-5-41z"/><path fill="#b6c307" stroke="#6d7504" d="M2249 4042l7 28 83 35-8-26z"/><path fill="#56872c" stroke="#34511a" d="M3049 4678l2 28 48-32-3-26z"/><path fill="#a30000" stroke="#620000" d="M2068 3733l-37 15 33 40 34-18z"/><path fill="#d5d300" stroke="#807e00" d="M2928 4851l2 38 76 31-3-39z"/><path fill="#6aa839" stroke="#406522" d="M2441 3835l-32 3 37 27 28-6z"/><path fill="#8c0000" stroke="#540000" d="M2031 3748l-30 21 35 41 28-22z"/><path fill="#1d5536" stroke="#113320" d="M3135 4403l-5 17 13-34 5-14z"/><path fill="#08e2e0" stroke="#058886" d="M2855 4562l1 20 61 33-1-21z"/><path fill="#0095ed" stroke="#005a8e" d="M2805 4451l0 14 51 30 0-16z"/><path fill="#3cac6a" stroke="#24673f" d="M2531 3875l-25 6 33 18 21-7z"/><path fill="#37c98b" stroke="#217954" d="M2455 4107l7 24 50 17-7-23z"/><path fill="#bddc18" stroke="#71840f" d="M2926 4814l2 37 75 30-3-38z"/><path fill="#59c565" stroke="#35763d" d="M2396 4083l6 25 60 23-7-24z"/><path fill="#1db290" stroke="#116b56" d="M2608 3899l-19 6 30 11 16-7z"/><path fill="#b88300" stroke="#6e4e00" d="M3003 4881l3 39 71-5-5-39z"/><path fill="#09b1a9" stroke="#056a66" d="M2676 3910l-14 6 28 4 11-6z"/><path fill="#10c0a9" stroke="#0a7365" d="M2951 3895l14-1 27-4-17 1z"/><path fill="#b75500" stroke="#6e3300" d="M2225 3747l-45 3 38 38 41-6z"/><path fill="#00bbd0" stroke="#00707d" d="M2554 4162l6 20 37 11-6-21z"/><path fill="#4e8432" stroke="#2f4f1e" d="M3046 4653l3 25 47-30-3-25z"/><path fill="#355922" stroke="#203614" d="M3260 4033l-1 26 10-9 2-26z"/><path fill="#26bf92" stroke="#177258" d="M3016 3887l20 0 25-4-22 0z"/><path fill="#a4dd32" stroke="#63851e" d="M2924 4780l2 34 74 29-4-36z"/><path fill="#0072e3" stroke="#004588" d="M2719 4320l3 13 35 16-1-14z"/><path fill="#007ce7" stroke="#004a8b" d="M2760 4376l2 12 42 23-1-14z"/><path fill="#00a3d9" stroke="#006282" d="M2597 4193l6 19 32 8-4-19z"/><path fill="#95ab11" stroke="#59670a" d="M2374 3809l-37 3 40 32 32-6z"/><path fill="#b89e00" stroke="#6e5f00" d="M3000 4843l3 38 69-5-4-38z"/><path fill="#c87700" stroke="#784800" d="M2159 3998l5 30 92 42-7-28z"/><path fill="#00a7bb" stroke="#006470" d="M2762 3914l-7 3 29-2 4-2z"/><path fill="#265e35" stroke="#173920" d="M3092 4503l-2 17 28-36 1-16z"/><path fill="#8ede48" stroke="#55852b" d="M2922 4747l2 33 72 27-3-34z"/><path fill="#05dde2" stroke="#038587" d="M2855 4544l0 18 61 32 0-20z"/><path fill="#d22800" stroke="#7e1800" d="M2069 3947l2 33 93 48-5-30z"/><path fill="#8cc331" stroke="#54751d" d="M2326 4052l5 27 71 29-6-25z"/><path fill="#4ab868" stroke="#2c6e3e" d="M3106 3882l23 6 21-6-24-6z"/><path fill="#b08700" stroke="#695100" d="M2300 3779l-41 3 42 36 36-6z"/><path fill="#1fcfaa" stroke="#137c66" d="M2505 4125l7 23 42 14-6-23z"/><path fill="#2e5424" stroke="#1b3316" d="M3243 4119l-7 25 4-11 8-23z"/><path fill="#478135" stroke="#2b4d20" d="M3045 4628l1 25 47-30-2-23z"/><path fill="#aeb604" stroke="#696d02" d="M2996 4807l4 36 68-5-5-36z"/><path fill="#7edf59" stroke="#4c8636" d="M2921 4717l1 30 71 26-3-32z"/><path fill="#3bbc7b" stroke="#23714a" d="M3061 3883l22 3 23-4-24-3z"/><path fill="#970000" stroke="#5a0000" d="M2002 3865l-7 32 74 50 4-31z"/><path fill="#5dac49" stroke="#38672c" d="M2474 3859l-28 6 37 24 23-8z"/><path fill="#9cb917" stroke="#5d6f0e" d="M2993 4773l3 34 67-5-4-34z"/><path fill="#5ca745" stroke="#376429" d="M3173 3891l21 13 19-8-21-12z"/><path fill="#6ddf6b" stroke="#428640" d="M2919 4689l2 28 69 24-2-30z"/><path fill="#35b176" stroke="#206a47" d="M2560 3892l-21 7 32 15 18-9z"/><path fill="#10c0a9" stroke="#0a7365" d="M2925 3898l11 0 29-4-14 1z"/><path fill="#009feb" stroke="#005f8d" d="M2804 4438l1 13 51 28 0-15z"/><path fill="#8bb827" stroke="#546f17" d="M2990 4741l3 32 66-5-4-32z"/><path fill="#02aeb7" stroke="#01696e" d="M2788 3913l-4 2 30-2 1-2z"/><path fill="#1bb897" stroke="#106f5b" d="M2635 3909l-16 7 29 7 14-7z"/><path fill="#0bb8ab" stroke="#076e67" d="M2701 3914l-11 6 28 2 10-5z"/><path fill="#437e37" stroke="#284c21" d="M3043 4606l2 22 46-28-1-22z"/><path fill="#5fe079" stroke="#398649" d="M2918 4663l1 26 69 22-2-27z"/><path fill="#05dce0" stroke="#038487" d="M2855 4527l0 17 61 30 0-19z"/><path fill="#3e5d1c" stroke="#253811" d="M3258 4007l2 26 11-9 0-25z"/><path fill="#c4ae00" stroke="#766900" d="M2245 4013l4 29 82 37-5-27z"/><path fill="#bf3200" stroke="#731e00" d="M2180 3750l-43 8 44 41 37-11z"/><path fill="#008ddf" stroke="#005486" d="M2677 4264l4 15 32 11-3-17z"/><path fill="#00a0dd" stroke="#006084" d="M2635 4220l6 18 31 9-4-19z"/><path fill="#7db835" stroke="#4b6e20" d="M2988 4711l2 30 65-5-4-30z"/><path fill="#24552e" stroke="#16331c" d="M3141 4387l-6 16 13-31 6-16z"/><path fill="#85ad23" stroke="#506815" d="M2409 3838l-32 6 42 31 27-10z"/><path fill="#295e31" stroke="#19381e" d="M3094 4485l-2 18 27-35 3-16z"/><path fill="#54e084" stroke="#32864f" d="M2917 4638l1 25 68 21-2-26z"/><path fill="#6ec752" stroke="#427731" d="M2392 4057l4 26 59 24-4-25z"/><path fill="#4dcc79" stroke="#2e7a48" d="M2451 4082l4 25 50 18-4-24z"/><path fill="#52b159" stroke="#316a35" d="M2506 3881l-23 8 36 21 20-11z"/><path fill="#10c0a9" stroke="#0a7366" d="M2898 3902l8 0 30-4-11 0z"/><path fill="#07b5b3" stroke="#046d6c" d="M2815 3911l-1 2 30-3-1-2z"/><path fill="#71b740" stroke="#446e27" d="M2986 4684l2 27 63-5-2-28z"/><path fill="#930000" stroke="#580000" d="M2016 3836l-14 29 71 51 9-30z"/><path fill="#2bbe8d" stroke="#1a7255" d="M2992 3890l17 1 27-4-20 0z"/><path fill="#008de6" stroke="#00558a" d="M2759 4363l1 13 43 21 0-15z"/><path fill="#609934" stroke="#3a5c1f" d="M3194 3904l20 15 18-7-19-16z"/><path fill="#15d7bb" stroke="#0d8170" d="M2548 4139l6 23 37 10-4-22z"/><path fill="#407b38" stroke="#264a21" d="M3043 4585l0 21 47-28-1-20z"/><path fill="#ca6400" stroke="#793c00" d="M2158 3967l1 31 90 44-4-29z"/><path fill="#d41600" stroke="#7f0d00" d="M2073 3916l-4 31 90 51-1-31z"/><path fill="#b19d00" stroke="#6a5e00" d="M2337 3812l-36 6 46 36 30-10z"/><path fill="#33b880" stroke="#1e6f4d" d="M2589 3905l-18 9 32 12 16-10z"/><path fill="#0ebeac" stroke="#087267" d="M2870 3905l5 1 31-4-8 0z"/><path fill="#b66700" stroke="#6d3e00" d="M2259 3782l-41 6 49 41 34-11z"/><path fill="#9fc520" stroke="#5f7613" d="M2324 4024l2 28 70 31-4-26z"/><path fill="#4cdf8d" stroke="#2d8654" d="M2917 4615l0 23 67 20-1-24z"/><path fill="#008ee2" stroke="#005588" d="M2716 4306l3 14 37 15-2-16z"/><path fill="#67b649" stroke="#3e6d2c" d="M2984 4658l2 26 63-6-3-25z"/><path fill="#08dedb" stroke="#058584" d="M2855 4511l0 16 61 28 0-18z"/><path fill="#476319" stroke="#2a3b0f" d="M3253 3982l5 25 13-8-4-25z"/><path fill="#c91200" stroke="#790b00" d="M2137 3758l-39 12 49 45 34-16z"/><path fill="#10c0a9" stroke="#0a7366" d="M2728 3917l-10 5 30 0 7-5z"/><path fill="#02c8d2" stroke="#01787e" d="M2591 4172l6 21 34 8-5-21z"/><path fill="#37d395" stroke="#217e59" d="M2501 4101l4 24 43 14-4-23z"/><path fill="#37551c" stroke="#213311" d="M3248 4093l-5 26 5-9 7-25z"/><path fill="#1fbe99" stroke="#12725c" d="M2662 3916l-14 7 30 5 12-8z"/><path fill="#76b135" stroke="#476a20" d="M2446 3865l-27 10 42 26 22-12z"/><path fill="#5db04d" stroke="#38692e" d="M3129 3888l23 8 21-5-23-9z"/><path fill="#00ace9" stroke="#00678c" d="M2804 4425l0 13 52 26 1-15z"/><path fill="#950000" stroke="#590000" d="M2036 3810l-20 26 66 50 15-27z"/><path fill="#5f8926" stroke="#395217" d="M3214 3919l16 18 17-7-15-18z"/><path fill="#4cb866" stroke="#2e6e3d" d="M2539 3899l-20 11 35 16 17-12z"/><path fill="#5fb44f" stroke="#396c30" d="M2983 4634l1 24 62-5-1-25z"/><path fill="#46de92" stroke="#2a8557" d="M2916 4594l1 21 66 19-1-23z"/><path fill="#4f6c1a" stroke="#2f410f" d="M3243 3959l10 23 14-8-8-23z"/><path fill="#b50000" stroke="#6c0000" d="M2098 3770l-34 18 55 47 28-20z"/><path fill="#c69e00" stroke="#775f00" d="M2246 3985l-1 28 81 39-2-28z"/><path fill="#3e7937" stroke="#254821" d="M3043 4564l0 21 46-27 0-19z"/><path fill="#a10000" stroke="#600000" d="M2064 3788l-28 22 61 49 22-24z"/><path fill="#58791d" stroke="#354911" d="M3230 3937l13 22 16-8-12-21z"/><path fill="#42bb73" stroke="#277045" d="M3036 3887l21 3 26-4-22-3z"/><path fill="#2e5d2d" stroke="#1b381b" d="M3097 4468l-3 17 28-33 4-16z"/><path fill="#a0b30d" stroke="#606b08" d="M2377 3844l-30 10 47 33 25-12z"/><path fill="#81c942" stroke="#4e7927" d="M2391 4030l1 27 59 25-2-25z"/><path fill="#55b65c" stroke="#336d37" d="M3083 3886l23 6 23-4-23-6z"/><path fill="#d00c00" stroke="#7d0700" d="M2082 3886l-9 30 85 51 5-29z"/><path fill="#32c087" stroke="#1e7351" d="M2619 3916l-16 10 31 8 14-11z"/><path fill="#6ab747" stroke="#406e2b" d="M2483 3889l-22 12 39 23 19-14z"/><path fill="#60cf68" stroke="#3a7c3e" d="M2449 4057l2 25 50 19-3-24z"/><path fill="#2c5627" stroke="#1b3317" d="M3147 4369l-6 18 13-31 7-16z"/><path fill="#0ee3d3" stroke="#08887f" d="M2856 4495l-1 16 61 26 1-17z"/><path fill="#be4b00" stroke="#722d00" d="M2218 3788l-37 11 55 44 31-14z"/><path fill="#cb5600" stroke="#7a3300" d="M2163 3938l-5 29 87 46 1-28z"/><path fill="#30be89" stroke="#1d7252" d="M2965 3894l15 0 29-3-17-1z"/><path fill="#15c2a6" stroke="#0d7564" d="M2755 3917l-7 5 31-2 5-5z"/><path fill="#5ab253" stroke="#366b32" d="M2982 4611l1 23 62-6-2-22z"/><path fill="#b78500" stroke="#6e5000" d="M2301 3818l-34 11 52 39 28-14z"/><path fill="#00ade0" stroke="#006886" d="M2672 4247l5 17 33 9-3-18z"/><path fill="#afc711" stroke="#69770a" d="M2325 3997l-1 27 68 33-1-27z"/><path fill="#00c0de" stroke="#007385" d="M2631 4201l4 19 33 8-4-20z"/><path fill="#42dd93" stroke="#288558" d="M2916 4574l0 20 66 17 0-21z"/><path fill="#22c39b" stroke="#14755d" d="M2690 3920l-12 8 31 2 9-8z"/><path fill="#8db725" stroke="#546e16" d="M2419 3875l-25 12 47 29 20-15z"/><path fill="#46c074" stroke="#2a7346" d="M2571 3914l-17 12 34 13 15-13z"/><path fill="#2edaa5" stroke="#1c8363" d="M2544 4116l4 23 39 11-4-24z"/><path fill="#00a5e4" stroke="#006389" d="M2757 4349l2 14 44 19-1-15z"/><path fill="#3f7734" stroke="#26471f" d="M3044 4545l-1 19 46-25 1-19z"/><path fill="#4bd684" stroke="#2d814f" d="M2498 4077l3 24 43 15-2-25z"/><path fill="#c79400" stroke="#785900" d="M2251 3957l-5 28 78 39 1-27z"/><path fill="#405713" stroke="#27340c" d="M3251 4066l-3 27 7-8 4-26z"/><path fill="#cc0900" stroke="#7a0600" d="M2097 3859l-15 27 81 52 10-28z"/><path fill="#00bde7" stroke="#00718a" d="M2804 4411l0 14 53 24 0-15z"/><path fill="#c53400" stroke="#761f00" d="M2181 3799l-34 16 62 47 27-19z"/><path fill="#56b054" stroke="#346932" d="M2982 4590l0 21 61-5 0-21z"/><path fill="#60bf59" stroke="#3a7335" d="M2519 3910l-19 14 38 17 16-15z"/><path fill="#b9a900" stroke="#6f6600" d="M2347 3854l-28 14 54 36 21-17z"/><path fill="#6aa536" stroke="#406320" d="M3152 3896l22 12 20-4-21-13z"/><path fill="#00abe2" stroke="#006688" d="M2713 4290l3 16 38 13-2-17z"/><path fill="#1bdebb" stroke="#108570" d="M2587 4150l4 22 35 8-4-23z"/><path fill="#1dc3a0" stroke="#117560" d="M2784 3915l-5 5 33-4 2-3z"/><path fill="#92cb33" stroke="#587a1e" d="M2393 4004l-2 26 58 27 0-26z"/><path fill="#42db92" stroke="#278358" d="M2916 4555l0 19 66 16 0-20z"/><path fill="#cb4d00" stroke="#7a2e00" d="M2173 3910l-10 28 83 47 5-28z"/><path fill="#bd7100" stroke="#724400" d="M2267 3829l-31 14 59 43 24-18z"/><path fill="#7cbe3b" stroke="#4b7224" d="M2461 3901l-20 15 43 24 16-16z"/><path fill="#32bf87" stroke="#1e7351" d="M2936 3898l12 0 32-4-15 0z"/><path fill="#d10f00" stroke="#7d0900" d="M2119 3835l-22 24 76 51 15-26z"/><path fill="#14e6cb" stroke="#0c8a7a" d="M2856 4479l0 16 61 25 1-17z"/><path fill="#bac807" stroke="#707804" d="M2330 3971l-5 26 66 33 2-26z"/><path fill="#345d27" stroke="#1f3817" d="M3101 4451l-4 17 29-32 4-16z"/><path fill="#71d25a" stroke="#447e36" d="M2449 4031l0 26 49 20 0-26z"/><path fill="#cc1e00" stroke="#7b1200" d="M2147 3815l-28 20 69 49 21-22z"/><path fill="#34c68c" stroke="#1f7754" d="M2648 3923l-14 11 32 5 12-11z"/><path fill="#a2bd15" stroke="#61720d" d="M2394 3887l-21 17 50 31 18-19z"/><path fill="#c78b00" stroke="#785400" d="M2261 3930l-10 27 74 40 5-26z"/><path fill="#bf9b00" stroke="#725d00" d="M2319 3868l-24 18 59 38 19-20z"/><path fill="#cb4d00" stroke="#7a2e00" d="M2188 3884l-15 26 78 47 10-27z"/><path fill="#55ad53" stroke="#336832" d="M2982 4570l0 20 61-5 0-21z"/><path fill="#417531" stroke="#27461d" d="M3045 4527l-1 18 46-25 2-17z"/><path fill="#4bbb6a" stroke="#2d7040" d="M3009 3891l19 2 29-3-21-3z"/><path fill="#2ac696" stroke="#19775a" d="M2718 3922l-9 8 32-1 7-7z"/><path fill="#c35e00" stroke="#753800" d="M2236 3843l-27 19 67 45 19-21z"/><path fill="#24c399" stroke="#16755c" d="M2814 3913l-2 3 34-4-2-2z"/><path fill="#46c87b" stroke="#2a784a" d="M2603 3926l-15 13 34 8 12-13z"/><path fill="#3d5414" stroke="#25320c" d="M3232 4154l-7 26 3-12 8-24z"/><path fill="#9bcd2b" stroke="#5d7b1a" d="M2400 3979l-7 25 56 27 4-25z"/><path fill="#c0c302" stroke="#737501" d="M2340 3946l-10 25 63 33 7-25z"/><path fill="#35561e" stroke="#203412" d="M3154 4351l-7 18 14-29 7-16z"/><path fill="#5bc967" stroke="#36783e" d="M2554 3926l-16 15 37 14 13-16z"/><path fill="#c85100" stroke="#783100" d="M2209 3862l-21 22 73 46 15-23z"/><path fill="#32c088" stroke="#1e7351" d="M2906 3902l9 1 33-5-12 0z"/><path fill="#71c750" stroke="#447730" d="M2500 3924l-16 16 41 19 13-18z"/><path fill="#8dc431" stroke="#55761d" d="M2441 3916l-18 19 48 25 13-20z"/><path fill="#60da73" stroke="#398345" d="M2498 4051l0 26 44 14-1-24z"/><path fill="#b3c309" stroke="#6b7506" d="M2373 3904l-19 20 56 32 13-21z"/><path fill="#c68a00" stroke="#775300" d="M2276 3907l-15 23 69 41 10-25z"/><path fill="#44d98e" stroke="#298255" d="M2916 4537l0 18 66 15 1-19z"/><path fill="#c39100" stroke="#755700" d="M2295 3886l-19 21 64 39 14-22z"/><path fill="#49590d" stroke="#2c3508" d="M3250 4039l1 27 8-7 1-26z"/><path fill="#46de92" stroke="#2a8557" d="M2542 4091l2 25 39 10-2-24z"/><path fill="#bec102" stroke="#727401" d="M2354 3924l-14 22 60 33 10-23z"/><path fill="#80d44d" stroke="#4d7f2e" d="M2453 4006l-4 25 49 20 2-25z"/><path fill="#2cc391" stroke="#1a7557" d="M2844 3910l2 2 34-5-5-1z"/><path fill="#13e1c6" stroke="#0c8777" d="M2626 4180l5 21 33 7-3-22z"/><path fill="#6aaf40" stroke="#3f6926" d="M3106 3892l23 8 23-4-23-8z"/><path fill="#02cdd8" stroke="#017b82" d="M2668 4228l4 19 35 8-3-20z"/><path fill="#30c28b" stroke="#1d7453" d="M2875 3906l5 1 35-4-9-1z"/><path fill="#719822" stroke="#445b15" d="M3174 3908l21 15 19-4-20-15z"/><path fill="#9dcc29" stroke="#5e7a18" d="M2410 3956l-10 23 53 27 7-24z"/><path fill="#98c92b" stroke="#5b791a" d="M2423 3935l-13 21 50 26 11-22z"/><path fill="#00c1e3" stroke="#007488" d="M2756 4335l1 14 45 18-1-16z"/><path fill="#02d0db" stroke="#017d83" d="M2803 4397l1 14 53 23 1-16z"/><path fill="#60b650" stroke="#3a6d30" d="M3057 3890l22 4 27-2-23-6z"/><path fill="#1fe4bd" stroke="#138972" d="M2856 4464l0 15 62 24 1-17z"/><path fill="#7fce48" stroke="#4c7c2b" d="M2484 3940l-13 20 43 20 11-21z"/><path fill="#56ab4f" stroke="#336630" d="M2983 4551l-1 19 61-6 1-19z"/><path fill="#33e1a8" stroke="#1e8765" d="M2583 4126l4 24 35 7-3-24z"/><path fill="#3acb8a" stroke="#237a53" d="M2678 3928l-12 11 33 1 10-10z"/><path fill="#86d548" stroke="#50802b" d="M2460 3982l-7 24 47 20 6-24z"/><path fill="#3b5d20" stroke="#233813" d="M3106 4433l-5 18 29-31 5-17z"/><path fill="#88d345" stroke="#517f29" d="M2471 3960l-11 22 46 20 8-22z"/><path fill="#45742c" stroke="#29461a" d="M3047 4508l-2 19 47-24 2-18z"/><path fill="#6cd25f" stroke="#417e39" d="M2538 3941l-13 18 38 14 12-18z"/><path fill="#6fde67" stroke="#43853e" d="M2500 4026l-2 25 43 16 2-25z"/><path fill="#32c88f" stroke="#1e7856" d="M2748 3922l-7 7 34-3 4-6z"/><path fill="#00cbdc" stroke="#007a84" d="M2710 4273l3 17 39 12-2-19z"/><path fill="#515d09" stroke="#313805" d="M3246 4012l4 27 10-6-2-26z"/><path fill="#48d687" stroke="#2b8051" d="M2917 4520l-1 17 67 14 1-19z"/><path fill="#4bcf7d" stroke="#2d7c4b" d="M2634 3934l-12 13 33 5 11-13z"/><path fill="#5ad272" stroke="#367e44" d="M2588 3939l-13 16 35 9 12-17z"/><path fill="#718a14" stroke="#44530c" d="M3195 3923l17 19 18-5-16-18z"/><path fill="#58e383" stroke="#35884f" d="M2541 4067l1 24 39 11-1-25z"/><path fill="#50bd66" stroke="#30713d" d="M2980 3894l16 2 32-3-19-2z"/><path fill="#79e060" stroke="#498639" d="M2506 4002l-6 24 43 16 4-25z"/><path fill="#76da5d" stroke="#478338" d="M2525 3959l-11 21 40 14 9-21z"/><path fill="#48550a" stroke="#2b3306" d="M3237 4128l-5 26 4-10 7-25z"/><path fill="#5b6406" stroke="#363c04" d="M3238 3987l8 25 12-5-5-25z"/><path fill="#7bdf5c" stroke="#4a8637" d="M2514 3980l-8 22 41 15 7-23z"/><path fill="#59a84a" stroke="#35652c" d="M2984 4532l-1 19 61-6 1-18z"/><path fill="#6c7b0a" stroke="#414a06" d="M3212 3942l15 21 16-4-13-22z"/><path fill="#3f5715" stroke="#26340c" d="M3162 4331l-8 20 14-27 8-18z"/><path fill="#2ae1b0" stroke="#198769" d="M2857 4449l-1 15 63 22 1-16z"/><path fill="#646e07" stroke="#3c4204" d="M3227 3963l11 24 15-5-10-23z"/><path fill="#2de4af" stroke="#1b8969" d="M2622 4157l4 23 35 6-3-24z"/><path fill="#3cc886" stroke="#247850" d="M2779 3920l-4 6 35-4 2-6z"/><path fill="#13e3c8" stroke="#0c8878" d="M2803 4382l0 15 55 21 0-16z"/><path fill="#43cd84" stroke="#287b4f" d="M2709 3930l-10 10 34-1 8-10z"/><path fill="#4be693" stroke="#2d8a58" d="M2581 4102l2 24 36 7-1-24z"/><path fill="#1ce3c0" stroke="#118873" d="M2664 4208l4 20 36 7-3-22z"/><path fill="#7ba625" stroke="#4a6416" d="M3129 3900l22 11 23-3-22-12z"/><path fill="#6cdd69" stroke="#41853f" d="M2575 3955l-12 18 37 10 10-19z"/><path fill="#4fd37d" stroke="#307f4b" d="M2918 4503l-1 17 67 12 1-18z"/><path fill="#4a7326" stroke="#2c4517" d="M3050 4491l-3 17 47-23 3-17z"/><path fill="#6be774" stroke="#408b46" d="M2543 4042l-2 25 39 10 2-25z"/><path fill="#0eddce" stroke="#08857c" d="M2754 4319l2 16 45 16 0-18z"/><path fill="#435e17" stroke="#28380e" d="M3111 4415l-5 18 29-30 6-16z"/><path fill="#54bf65" stroke="#32723c" d="M2948 3898l13 3 35-5-16-2z"/><path fill="#60da73" stroke="#398345" d="M2622 3947l-12 17 35 5 10-17z"/><path fill="#6ab847" stroke="#406e2b" d="M3028 3893l20 4 31-3-22-4z"/><path fill="#52d47b" stroke="#317f4a" d="M2666 3939l-11 13 35 2 9-14z"/><path fill="#495509" stroke="#2c3306" d="M3209 4219l-7 24 6-17 9-22z"/><path fill="#76e668" stroke="#478a3e" d="M2563 3973l-9 21 38 10 8-21z"/><path fill="#76ea6d" stroke="#478d41" d="M2547 4017l-4 25 39 10 4-25z"/><path fill="#46c77b" stroke="#2a784a" d="M2812 3916l-2 6 38-5-2-5z"/><path fill="#5ea643" stroke="#386328" d="M2985 4514l-1 18 61-5 2-19z"/><path fill="#19e3c3" stroke="#0f8875" d="M2707 4255l3 18 40 10-2-20z"/><path fill="#7ab031" stroke="#496a1d" d="M3079 3894l22 8 28-2-23-8z"/><path fill="#7cea67" stroke="#4a8d3e" d="M2554 3994l-7 23 39 10 6-23z"/><path fill="#515502" stroke="#313301" d="M3240 4100l-3 28 6-9 5-26z"/><path fill="#55c166" stroke="#33743d" d="M2915 3903l9 3 37-5-13-3z"/><path fill="#61ea82" stroke="#3a8d4e" d="M2580 4077l1 25 37 7 0-26z"/><path fill="#3adf9d" stroke="#23865e" d="M2857 4434l0 15 63 21 2-17z"/><path fill="#4dc672" stroke="#2e7745" d="M2846 3912l2 5 38-6-6-4z"/><path fill="#59d070" stroke="#357d43" d="M2919 4486l-1 17 67 11 2-17z"/><path fill="#4ece7a" stroke="#2f7c49" d="M2741 3929l-8 10 37-4 5-9z"/><path fill="#48e798" stroke="#2b8b5b" d="M2619 4133l3 24 36 5-2-25z"/><path fill="#53c36a" stroke="#32753f" d="M2880 3907l6 4 38-5-9-3z"/><path fill="#51731e" stroke="#314512" d="M3053 4473l-3 18 47-23 4-17z"/><path fill="#70e56d" stroke="#438942" d="M2610 3964l-10 19 36 5 9-19z"/><path fill="#4a570b" stroke="#2c3406" d="M3169 4309l-7 22 14-25 9-20z"/><path fill="#879b0f" stroke="#515d09" d="M3151 3911l21 15 23-3-21-15z"/><path fill="#27e2b3" stroke="#18876c" d="M2802 4367l1 15 55 20 1-17z"/><path fill="#36e5a8" stroke="#218a65" d="M2661 4186l3 22 37 5-2-23z"/><path fill="#72ef75" stroke="#448f46" d="M2582 4052l-2 25 38 6 2-25z"/><path fill="#4c5e0f" stroke="#2e3909" d="M3117 4396l-6 19 30-28 6-18z"/><path fill="#65a439" stroke="#3c6222" d="M2987 4497l-2 17 62-6 3-17z"/><path fill="#25e3b7" stroke="#16886e" d="M2752 4302l2 17 47 14-1-19z"/><path fill="#5ed671" stroke="#398144" d="M2699 3940l-9 14 36-2 7-13z"/><path fill="#6adf6d" stroke="#408641" d="M2655 3952l-10 17 36 1 9-16z"/><path fill="#7eee69" stroke="#4b8f3f" d="M2600 3983l-8 21 37 5 7-21z"/><path fill="#73ba41" stroke="#457027" d="M2996 3896l17 5 35-4-20-4z"/><path fill="#584e00" stroke="#352f00" d="M3240 4071l0 29 8-7 3-27z"/><path fill="#535200" stroke="#323100" d="M3216 4193l-7 26 8-15 8-24z"/><path fill="#7df26e" stroke="#4b9142" d="M2586 4027l-4 25 38 6 3-25z"/><path fill="#83f368" stroke="#4f923e" d="M2592 4004l-6 23 37 6 6-24z"/><path fill="#5bce6d" stroke="#367c41" d="M2775 3926l-5 9 39-5 1-8z"/><path fill="#36e4a7" stroke="#218964" d="M2704 4235l3 20 41 8-2-22z"/><path fill="#5fec85" stroke="#398d50" d="M2618 4109l1 24 37 4 0-25z"/><path fill="#65cd62" stroke="#3c7b3b" d="M2920 4470l-1 16 68 11 2-18z"/><path fill="#4bdd8b" stroke="#2d8453" d="M2858 4418l-1 16 65 19 1-18z"/><path fill="#8a8800" stroke="#535200" d="M3172 3926l19 18 21-2-17-19z"/><path fill="#5a7316" stroke="#36450d" d="M3057 4454l-4 19 48-22 5-18z"/><path fill="#8fa915" stroke="#56650d" d="M3101 3902l22 11 28-2-22-11z"/><path fill="#88b326" stroke="#516c17" d="M3048 3897l21 7 32-2-22-8z"/><path fill="#5b4a00" stroke="#372c00" d="M3237 4043l3 28 11-5-1-27z"/><path fill="#7ee964" stroke="#4c8c3c" d="M2645 3969l-9 19 37 1 8-19z"/><path fill="#52e88f" stroke="#318b56" d="M2658 4162l3 24 38 4-2-25z"/><path fill="#6ea22f" stroke="#42611c" d="M2989 4479l-2 18 63-6 3-18z"/><path fill="#555400" stroke="#333200" d="M3177 4286l-8 23 16-23 8-20z"/><path fill="#3ee19c" stroke="#25875d" d="M2801 4351l1 16 57 18 0-19z"/><path fill="#7abe3e" stroke="#497225" d="M2961 3901l14 4 38-4-17-5z"/><path fill="#67cc5f" stroke="#3e7a39" d="M2810 3922l-1 8 40-6-1-7z"/><path fill="#6cd664" stroke="#41813c" d="M2733 3939l-7 13 39-5 5-12z"/><path fill="#76f073" stroke="#479045" d="M2618 4083l0 26 38 3 0-27z"/><path fill="#806e00" stroke="#4d4200" d="M3191 3944l17 21 19-2-15-21z"/><path fill="#575f05" stroke="#343903" d="M3123 4376l-6 20 30-27 7-18z"/><path fill="#76e063" stroke="#47873b" d="M2690 3954l-9 16 38-2 7-16z"/><path fill="#41e39a" stroke="#27885d" d="M2750 4283l2 19 48 12-1-21z"/><path fill="#604b00" stroke="#3a2d00" d="M3231 4015l6 28 13-4-4-27z"/><path fill="#564600" stroke="#342a00" d="M3222 4165l-6 28 9-13 7-26z"/><path fill="#8cf35e" stroke="#549239" d="M2636 3988l-7 21 38 2 6-22z"/><path fill="#73cb51" stroke="#457a31" d="M2922 4453l-2 17 69 9 3-18z"/><path fill="#735c00" stroke="#453700" d="M3208 3965l13 24 17-2-11-24z"/><path fill="#685000" stroke="#3e3000" d="M3221 3989l10 26 15-3-8-25z"/><path fill="#72c951" stroke="#447930" d="M2848 3917l1 7 43-7-6-6z"/><path fill="#7cc23f" stroke="#4b7426" d="M2924 3906l10 4 41-5-14-4z"/><path fill="#84f568" stroke="#4f933f" d="M2620 4058l-2 25 38 2 2-26z"/><path fill="#51e68e" stroke="#308a55" d="M2701 4213l3 22 42 6-1-24z"/><path fill="#5ddb76" stroke="#388347" d="M2858 4402l0 16 65 17 2-18z"/><path fill="#65740b" stroke="#3c4507" d="M3061 4435l-4 19 49-21 5-18z"/><path fill="#7ac645" stroke="#49772a" d="M2886 3911l6 6 42-7-10-4z"/><path fill="#92f75d" stroke="#589438" d="M2629 4009l-6 24 39 1 5-23z"/><path fill="#8ff860" stroke="#56953a" d="M2623 4033l-3 25 38 1 4-25z"/><path fill="#6eec77" stroke="#428e47" d="M2656 4137l2 25 39 3-1-27z"/><path fill="#79a022" stroke="#496014" d="M2992 4461l-3 18 64-6 4-19z"/><path fill="#9f9500" stroke="#5f5900" d="M3123 3913l22 14 27-1-21-15z"/><path fill="#7bd553" stroke="#4a8032" d="M2770 3935l-5 12 42-6 2-11z"/><path fill="#96b81b" stroke="#5a6e10" d="M3013 3901l19 7 37-4-21-7z"/><path fill="#584800" stroke="#352b00" d="M3184 4262l-7 24 16-20 9-23z"/><path fill="#57e082" stroke="#34874e" d="M2801 4333l0 18 58 15 1-20z"/><path fill="#91eb52" stroke="#578d31" d="M2681 3970l-8 19 40-3 6-18z"/><path fill="#605500" stroke="#393300" d="M3129 4355l-6 21 31-25 8-20z"/><path fill="#573d00" stroke="#342400" d="M3225 4136l-3 29 10-11 5-26z"/><path fill="#a4ac04" stroke="#636702" d="M3069 3904l21 11 33-2-22-11z"/><path fill="#8ae04e" stroke="#53862f" d="M2726 3952l-7 16 41-6 5-15z"/><path fill="#5ce481" stroke="#37894d" d="M2748 4263l2 20 49 10 0-23z"/><path fill="#81c941" stroke="#4d7827" d="M2923 4435l-1 18 70 8 3-19z"/><path fill="#85f064" stroke="#50903c" d="M2656 4112l0 25 40 1 0-27z"/><path fill="#6ce975" stroke="#418c46" d="M2699 4190l2 23 44 4-2-25z"/><path fill="#73da60" stroke="#458339" d="M2859 4385l-1 17 67 15 2-19z"/><path fill="#717000" stroke="#444300" d="M3066 4416l-5 19 50-20 6-19z"/><path fill="#a3f449" stroke="#62922c" d="M2673 3989l-6 22 41-3 5-22z"/><path fill="#8cd23f" stroke="#547e26" d="M2809 3930l-2 11 44-8-2-9z"/><path fill="#879f14" stroke="#51600c" d="M2995 4442l-3 19 65-7 4-19z"/><path fill="#947200" stroke="#594500" d="M3145 3927l20 18 26-1-19-18z"/><path fill="#9fbd17" stroke="#60710e" d="M2975 3905l15 7 42-4-19-7z"/><path fill="#97f556" stroke="#5a9334" d="M2656 4085l0 27 40-1 1-27z"/><path fill="#593500" stroke="#352000" d="M3226 4106l-1 30 12-8 3-28z"/><path fill="#593a00" stroke="#352300" d="M3190 4235l-6 27 18-19 7-24z"/><path fill="#adf945" stroke="#689629" d="M2667 4011l-5 23 41-2 5-24z"/><path fill="#74e166" stroke="#45873d" d="M2800 4314l1 19 59 13 1-21z"/><path fill="#a6f84b" stroke="#63952d" d="M2658 4059l-2 26 41-1 3-27z"/><path fill="#99cd2e" stroke="#5c7b1c" d="M2849 3924l2 9 47-8-6-8z"/><path fill="#aefb45" stroke="#689629" d="M2662 4034l-4 25 42-2 3-25z"/><path fill="#604700" stroke="#3a2b00" d="M3136 4332l-7 23 33-24 7-22z"/><path fill="#94c72d" stroke="#59771b" d="M2925 4417l-2 18 72 7 3-19z"/><path fill="#a7e93a" stroke="#648c23" d="M2719 3968l-6 18 43-5 4-19z"/><path fill="#9fdd37" stroke="#5f8421" d="M2765 3947l-5 15 45-7 2-14z"/><path fill="#a2c21a" stroke="#617510" d="M2934 3910l10 8 46-6-15-7z"/><path fill="#88ec5c" stroke="#528d37" d="M2697 4165l2 25 44 2 0-27z"/><path fill="#79e665" stroke="#498a3d" d="M2746 4241l2 22 51 7-1-24z"/><path fill="#a1c820" stroke="#617813" d="M2892 3917l6 8 46-7-10-8z"/><path fill="#885700" stroke="#513400" d="M3165 3945l17 21 26-1-17-21z"/><path fill="#b4a500" stroke="#6c6300" d="M3032 3908l18 10 40-3-21-11z"/><path fill="#a68500" stroke="#645000" d="M3090 3915l20 13 35-1-22-14z"/><path fill="#8bd947" stroke="#54822a" d="M2859 4366l0 19 68 13 2-21z"/><path fill="#756100" stroke="#463a00" d="M3071 4395l-5 21 51-20 6-20z"/><path fill="#5b2e00" stroke="#371c00" d="M3224 4076l2 30 14-6 0-29z"/><path fill="#969d04" stroke="#5a5e02" d="M2998 4423l-3 19 66-7 5-19z"/><path fill="#7b4400" stroke="#4a2900" d="M3182 3966l16 24 23-1-13-24z"/><path fill="#5f2c00" stroke="#391b00" d="M3218 4046l6 30 16-5-3-28z"/><path fill="#a3ef45" stroke="#629029" d="M2696 4138l1 27 46 0-1-28z"/><path fill="#592f00" stroke="#361c00" d="M3196 4207l-6 28 19-16 7-26z"/><path fill="#c0f22a" stroke="#739119" d="M2713 3986l-5 22 44-6 4-21z"/><path fill="#8ee14c" stroke="#55872e" d="M2799 4293l1 21 61 11 1-24z"/><path fill="#b1d820" stroke="#6a8213" d="M2807 3941l-2 14 48-9-2-13z"/><path fill="#6f3500" stroke="#432000" d="M3198 3990l12 27 21-2-10-26z"/><path fill="#662e00" stroke="#3d1c00" d="M3210 4017l8 29 19-3-6-28z"/><path fill="#aac616" stroke="#66770d" d="M2927 4398l-2 19 73 6 4-20z"/><path fill="#95e84b" stroke="#598b2d" d="M2745 4217l1 24 52 5 0-26z"/><path fill="#613a00" stroke="#3a2300" d="M3142 4307l-6 25 33-23 8-23z"/><path fill="#bfe61f" stroke="#738a13" d="M2760 3962l-4 19 47-9 2-17z"/><path fill="#bba300" stroke="#706200" d="M2990 3912l15 10 45-4-18-10z"/><path fill="#b8f334" stroke="#6e921f" d="M2696 4111l0 27 46-1 1-29z"/><path fill="#a4d92e" stroke="#62821c" d="M2860 4346l-1 20 70 11 3-22z"/><path fill="#cff922" stroke="#7c9514" d="M2708 4008l-5 24 46-6 3-24z"/><path fill="#765000" stroke="#473000" d="M3076 4373l-5 22 52-19 6-21z"/><path fill="#9f8800" stroke="#5f5200" d="M3002 4403l-4 20 68-7 5-21z"/><path fill="#9e6000" stroke="#5f3a00" d="M3110 3928l20 18 35-1-20-18z"/><path fill="#c2d20a" stroke="#747e06" d="M2851 3933l2 13 51-9-6-12z"/><path fill="#cbf725" stroke="#7a9416" d="M2697 4084l-1 27 47-3 1-28z"/><path fill="#5a2400" stroke="#361500" d="M3199 4176l-3 31 20-14 6-28z"/><path fill="#d7fb1c" stroke="#819711" d="M2703 4032l-3 25 46-5 3-26z"/><path fill="#af7a00" stroke="#694900" d="M3050 3918l19 13 41-3-20-13z"/><path fill="#c3ad00" stroke="#756800" d="M2944 3918l11 11 50-7-15-10z"/><path fill="#d7fb1c" stroke="#819611" d="M2700 4057l-3 27 47-4 2-28z"/><path fill="#cabd00" stroke="#797100" d="M2898 3925l6 12 51-8-11-11z"/><path fill="#b1ea32" stroke="#6a8d1e" d="M2743 4192l2 25 53 3-1-29z"/><path fill="#abe230" stroke="#67881d" d="M2799 4270l0 23 63 8 0-25z"/><path fill="#c0bd00" stroke="#737200" d="M2929 4377l-2 21 75 5 3-22z"/><path fill="#622b00" stroke="#3b1a00" d="M3148 4280l-6 27 35-21 7-24z"/><path fill="#deee08" stroke="#858f05" d="M2756 3981l-4 21 50-9 1-21z"/><path fill="#d9d700" stroke="#828100" d="M2805 3955l-2 17 52-9-2-17z"/><path fill="#934200" stroke="#582800" d="M3130 3946l18 21 34-1-17-21z"/><path fill="#bfd913" stroke="#73820b" d="M2861 4325l-1 21 72 9 2-23z"/><path fill="#764000" stroke="#472600" d="M3081 4349l-5 24 53-18 7-23z"/><path fill="#9f7100" stroke="#5f4400" d="M3005 4381l-3 22 69-8 5-22z"/><path fill="#5c1900" stroke="#370f00" d="M3201 4145l-2 31 23-11 3-29z"/><path fill="#cfee17" stroke="#7c8f0e" d="M2743 4165l0 27 54-1 0-29z"/><path fill="#b97700" stroke="#6f4700" d="M3005 3922l15 14 49-5-19-13z"/><path fill="#c9e413" stroke="#79890c" d="M2798 4246l1 24 63 6 1-27z"/><path fill="#f6e100" stroke="#938700" d="M2752 4002l-3 24 52-9 1-24z"/><path fill="#d8b300" stroke="#826b00" d="M2853 3946l2 17 55-11-6-15z"/><path fill="#a95100" stroke="#653100" d="M3069 3931l18 17 43-2-20-18z"/><path fill="#c5a100" stroke="#766000" d="M2932 4355l-3 22 76 4 4-24z"/><path fill="#872900" stroke="#511900" d="M3148 3967l16 24 34-1-16-24z"/><path fill="#621d00" stroke="#3b1100" d="M3153 4251l-5 29 36-18 6-27z"/><path fill="#5e1200" stroke="#390b00" d="M3200 4113l1 32 24-9 1-30z"/><path fill="#e7eb02" stroke="#8b8d01" d="M2742 4137l1 28 54-3 0-30z"/><path fill="#c48000" stroke="#764d00" d="M2955 3929l11 14 54-7-15-14z"/><path fill="#e8bd00" stroke="#8b7100" d="M2803 3972l-1 21 55-10-2-20z"/><path fill="#dac800" stroke="#837800" d="M2862 4301l-1 24 73 7 2-26z"/><path fill="#cf9300" stroke="#7c5800" d="M2904 3937l6 15 56-9-11-14z"/><path fill="#fad600" stroke="#968100" d="M2749 4026l-3 26 53-9 2-26z"/><path fill="#772d00" stroke="#471b00" d="M3086 4323l-5 26 55-17 6-25z"/><path fill="#9f5a00" stroke="#5f3600" d="M3009 4357l-4 24 71-8 5-24z"/><path fill="#620e00" stroke="#3b0900" d="M3196 4081l4 32 26-7-2-30z"/><path fill="#7b1900" stroke="#4a0f00" d="M3164 3991l14 28 32-2-12-27z"/><path fill="#f5dd00" stroke="#938500" d="M2743 4108l-1 29 55-5 1-30z"/><path fill="#fbd400" stroke="#977f00" d="M2746 4052l-2 28 54-8 1-29z"/><path fill="#e6d700" stroke="#8a8100" d="M2798 4220l0 26 65 3 0-30z"/><path fill="#680c00" stroke="#3e0700" d="M3188 4049l8 32 28-5-6-30z"/><path fill="#701000" stroke="#430a00" d="M3178 4019l10 30 30-3-8-29z"/><path fill="#f9d600" stroke="#958000" d="M2744 4080l-1 28 55-6 0-30z"/><path fill="#630e00" stroke="#3c0900" d="M3157 4221l-4 30 37-16 6-28z"/><path fill="#c68400" stroke="#774f00" d="M2934 4332l-2 23 77 2 4-25z"/><path fill="#a12f00" stroke="#611c00" d="M3087 3948l17 22 44-3-18-21z"/><path fill="#b74d00" stroke="#6e2e00" d="M3020 3936l15 18 52-6-18-17z"/><path fill="#df9200" stroke="#865800" d="M2855 3963l2 20 59-12-6-19z"/><path fill="#f0a700" stroke="#906400" d="M2802 3993l-1 24 58-11-2-23z"/><path fill="#dba900" stroke="#846500" d="M2862 4276l0 25 74 5 2-28z"/><path fill="#781c00" stroke="#481100" d="M3091 4295l-5 28 56-16 6-27z"/><path fill="#eabb00" stroke="#8c7000" d="M2797 4191l1 29 65-1 0-30z"/><path fill="#a04400" stroke="#602900" d="M3013 4332l-4 25 72-8 5-26z"/><path fill="#5f0300" stroke="#390200" d="M3159 4188l-2 33 39-14 3-31z"/><path fill="#c55300" stroke="#763200" d="M2966 3943l11 18 58-7-15-18z"/><path fill="#d36b00" stroke="#7f4000" d="M2910 3952l6 19 61-10-11-18z"/><path fill="#971200" stroke="#5b0b00" d="M3104 3970l15 25 45-4-16-24z"/><path fill="#f69600" stroke="#935a00" d="M2801 4017l-2 26 61-11-1-26z"/><path fill="#c76800" stroke="#773f00" d="M2936 4306l-2 26 79 0 3-28z"/><path fill="#eea600" stroke="#8f6300" d="M2797 4162l0 29 66-2 0-32z"/><path fill="#de8b00" stroke="#855300" d="M2863 4249l-1 27 76 2 1-30z"/><path fill="#790b00" stroke="#490600" d="M3095 4265l-4 30 57-15 5-29z"/><path fill="#540000" stroke="#330000" d="M3159 4155l0 33 40-12 2-31z"/><path fill="#b32400" stroke="#6b1600" d="M3035 3954l14 21 55-5-17-22z"/><path fill="#e67200" stroke="#8a4400" d="M2857 3983l2 23 63-12-6-23z"/><path fill="#a12a00" stroke="#611900" d="M3016 4304l-3 28 73-9 5-28z"/><path fill="#f98900" stroke="#955200" d="M2799 4043l-1 29 63-10-1-30z"/><path fill="#f29400" stroke="#915900" d="M2797 4132l0 30 66-5 0-32z"/><path fill="#7d0000" stroke="#4b0000" d="M3119 3995l14 28 45-4-14-28z"/><path fill="#f68800" stroke="#935100" d="M2798 4102l-1 30 66-7-1-32z"/><path fill="#f88600" stroke="#955000" d="M2798 4072l0 30 64-9-1-31z"/><path fill="#4f0000" stroke="#300000" d="M3157 4121l2 34 42-10-1-32z"/><path fill="#c94c00" stroke="#792e00" d="M2938 4278l-2 28 80-2 3-29z"/><path fill="#e16f00" stroke="#874300" d="M2863 4219l0 30 76-1 1-32z"/><path fill="#d84500" stroke="#822900" d="M2916 3971l6 23 65-10-10-23z"/><path fill="#c62b00" stroke="#771a00" d="M2977 3961l10 23 62-9-14-21z"/><path fill="#650000" stroke="#3d0000" d="M3133 4023l10 31 45-5-10-30z"/><path fill="#4f0000" stroke="#300000" d="M3152 4087l5 34 43-8-4-32z"/><path fill="#690000" stroke="#3f0000" d="M3097 4233l-2 32 58-14 4-30z"/><path fill="#550000" stroke="#330000" d="M3143 4054l9 33 44-6-8-32z"/><path fill="#ed5600" stroke="#8e3400" d="M2859 4006l1 26 67-11-5-27z"/><path fill="#a31300" stroke="#620b00" d="M3019 4275l-3 29 75-9 4-30z"/><path fill="#a40500" stroke="#620300" d="M3049 3975l13 25 57-5-15-25z"/><path fill="#e55700" stroke="#893400" d="M2863 4189l0 30 77-3 0-33z"/><path fill="#cc3000" stroke="#7a1d00" d="M2939 4248l-1 30 81-3 2-32z"/><path fill="#590000" stroke="#350000" d="M3098 4200l-1 33 60-12 2-33z"/><path fill="#f24300" stroke="#912800" d="M2860 4032l1 30 70-12-4-29z"/><path fill="#dd2300" stroke="#851500" d="M2922 3994l5 27 69-12-9-25z"/><path fill="#bf0900" stroke="#730500" d="M2987 3984l9 25 66-9-13-25z"/><path fill="#e94400" stroke="#8c2900" d="M2863 4157l0 32 77-6-1-34z"/><path fill="#940000" stroke="#590000" d="M3021 4243l-2 32 76-10 2-32z"/><path fill="#7d0000" stroke="#4b0000" d="M3062 4000l12 29 59-6-14-28z"/><path fill="#f33500" stroke="#922000" d="M2861 4062l1 31 73-11-4-32z"/><path fill="#ee3700" stroke="#8f2100" d="M2863 4125l0 32 76-8-1-34z"/><path fill="#4b0000" stroke="#2d0000" d="M3098 4165l0 35 61-12 0-33z"/><path fill="#f23100" stroke="#911e00" d="M2862 4093l1 32 75-10-3-33z"/><path fill="#d01500" stroke="#7d0d00" d="M2940 4216l-1 32 82-5 1-33z"/><path fill="#620000" stroke="#3b0000" d="M3074 4029l9 32 60-7-10-31z"/><path fill="#d50700" stroke="#800400" d="M2927 4021l4 29 73-11-8-30z"/><path fill="#7f0000" stroke="#4c0000" d="M3022 4210l-1 33 76-10 1-33z"/><path fill="#450000" stroke="#290000" d="M3095 4130l3 35 61-10-2-34z"/><path fill="#9c0000" stroke="#5d0000" d="M2996 4009l8 30 70-10-12-29z"/><path fill="#4f0000" stroke="#2f0000" d="M3083 4061l7 34 62-8-9-33z"/><path fill="#460000" stroke="#2a0000" d="M3090 4095l5 35 62-9-5-34z"/><path fill="#c20000" stroke="#740000" d="M2940 4183l0 33 82-6 0-35z"/><path fill="#bf0000" stroke="#730000" d="M2931 4050l4 32 76-11-7-32z"/><path fill="#6d0000" stroke="#410000" d="M3022 4175l0 35 76-10 0-35z"/><path fill="#b70000" stroke="#6e0000" d="M2939 4149l1 34 82-8-2-35z"/><path fill="#7e0000" stroke="#4c0000" d="M3004 4039l7 32 72-10-9-32z"/><path fill="#b20000" stroke="#6b0000" d="M2935 4082l3 33 78-10-5-34z"/><path fill="#af0000" stroke="#690000" d="M2938 4115l1 34 81-9-4-35z"/><path fill="#630000" stroke="#3c0000" d="M3020 4140l2 35 76-10-3-35z"/><path fill="#6a0000" stroke="#400000" d="M3011 4071l5 34 74-10-7-34z"/><path fill="#640000" stroke="#3c0000" d="M3016 4105l4 35 75-10-5-35z"/></g><g id="axes_1"> <g id="text_31"> <text style="font-weight: 700; font-size: 12px; font-family: 'Liberation Sans'; fill: #303030" transform="translate(132.92 146.74)">Young's Modulus (GPa)</text> <text style="font-weight: 700; font-size: 12px; font-family: 'Liberation Sans'; fill: #303030" transform="translate(133.87 161.82)">Max: 191.03, Min: 66.69</text> </g> </g> <g id="axes_2" transform="translate(0.8 0.8)"> <g id="patch_6"> <path d="M 376.95 495.21  L 395.71 495.21  L 395.71 119.99  L 376.95 119.99  z " style="fill: #ffffff"/> </g> <rect x="376.95" y="119.99" width="18.76" height="375.21" fill="url(#jetg)"/> <g id="matplotlib.axis_1"/> <g id="matplotlib.axis_2"> <g id="ytick_1"> <g id="line2d_31"> <defs> <path id="mbaa5491757" d="M 0 0  L 3.5 0  " style="stroke: #262626; stroke-width: 0.8"/> </defs> <g> <use href="#mbaa5491757" x="395.71" y="455.04" style="fill: #262626; stroke: #262626; stroke-width: 0.8"/> </g> </g> <g id="text_32"> <text style="font-size: 10px; font-family: 'Liberation Sans'; text-anchor: start; fill: #3c3c3c" x="402.71" y="458.67" transform="translate(402.71 -0.8) scale(0.82 1) translate(-402.71 0)">80</text> </g> </g> <g id="ytick_2"> <g id="line2d_32"> <g> <use href="#mbaa5491757" x="395.71" y="394.69" style="fill: #262626; stroke: #262626; stroke-width: 0.8"/> </g> </g> <g id="text_33"> <text style="font-size: 10px; font-family: 'Liberation Sans'; text-anchor: start; fill: #3c3c3c" x="402.71" y="398.31" transform="translate(402.71 -0.8) scale(0.82 1) translate(-402.71 0)">100</text> </g> </g> <g id="ytick_3"> <g id="line2d_33"> <g> <use href="#mbaa5491757" x="395.71" y="334.34" style="fill: #262626; stroke: #262626; stroke-width: 0.8"/> </g> </g> <g id="text_34"> <text style="font-size: 10px; font-family: 'Liberation Sans'; text-anchor: start; fill: #3c3c3c" x="402.71" y="337.96" transform="translate(402.71 -0.8) scale(0.82 1) translate(-402.71 0)">120</text> </g> </g> <g id="ytick_4"> <g id="line2d_34"> <g> <use href="#mbaa5491757" x="395.71" y="273.98" style="fill: #262626; stroke: #262626; stroke-width: 0.8"/> </g> </g> <g id="text_35"> <text style="font-size: 10px; font-family: 'Liberation Sans'; text-anchor: start; fill: #3c3c3c" x="402.71" y="277.61" transform="translate(402.71 -0.8) scale(0.82 1) translate(-402.71 0)">140</text> </g> </g> <g id="ytick_5"> <g id="line2d_35"> <g> <use href="#mbaa5491757" x="395.71" y="213.63" style="fill: #262626; stroke: #262626; stroke-width: 0.8"/> </g> </g> <g id="text_36"> <text style="font-size: 10px; font-family: 'Liberation Sans'; text-anchor: start; fill: #3c3c3c" x="402.71" y="217.25" transform="translate(402.71 -0.8) scale(0.82 1) translate(-402.71 0)">160</text> </g> </g> <g id="ytick_6"> <g id="line2d_36"> <g> <use href="#mbaa5491757" x="395.71" y="153.28" style="fill: #262626; stroke: #262626; stroke-width: 0.8"/> </g> </g> <g id="text_37"> <text style="font-size: 10px; font-family: 'Liberation Sans'; text-anchor: start; fill: #3c3c3c" x="402.71" y="156.90" transform="translate(402.71 -0.8) scale(0.82 1) translate(-402.71 0)">180</text> </g> </g> <g id="text_38"> <text style="font-weight: 700; font-size: 10.6px; font-family: 'Liberation Sans'; text-anchor: middle; fill: #303030" x="428.44" y="308.40" transform="rotate(-90 428.44 308.40)">Young's Modulus (GPa)</text> </g> </g> <g id="LineCollection_1"/> <g id="patch_7"> <path d="M 376.95 495.21  L 386.33 495.21  L 395.71 495.21  L 395.71 119.99  L 386.33 119.99  L 376.95 119.99  L 376.95 495.21  z " style="fill: none; stroke: #d8dde0; stroke-width: 0.5; stroke-linejoin: miter; stroke-linecap: square"/> </g> </g> </g> </svg> </div>
<div class="a" style="left:1028px;top:988px;font-weight:bold;color:#0d8a0d;line-height:14px;transform:scaleX(0.94);transform-origin:0 0;white-space:nowrap">The Structure is STABLE</div>
<div class="a" style="left:1182px;top:985px;width:1px;height:17px;background:#d0d0d0"></div>
<div id="frame"></div><div class="a" style="left:0;top:6px;width:1px;height:330px;background:linear-gradient(#8a7a28,#7a6a28 270px,#5a2a20 300px,#333 330px)"></div></div></body></html>
